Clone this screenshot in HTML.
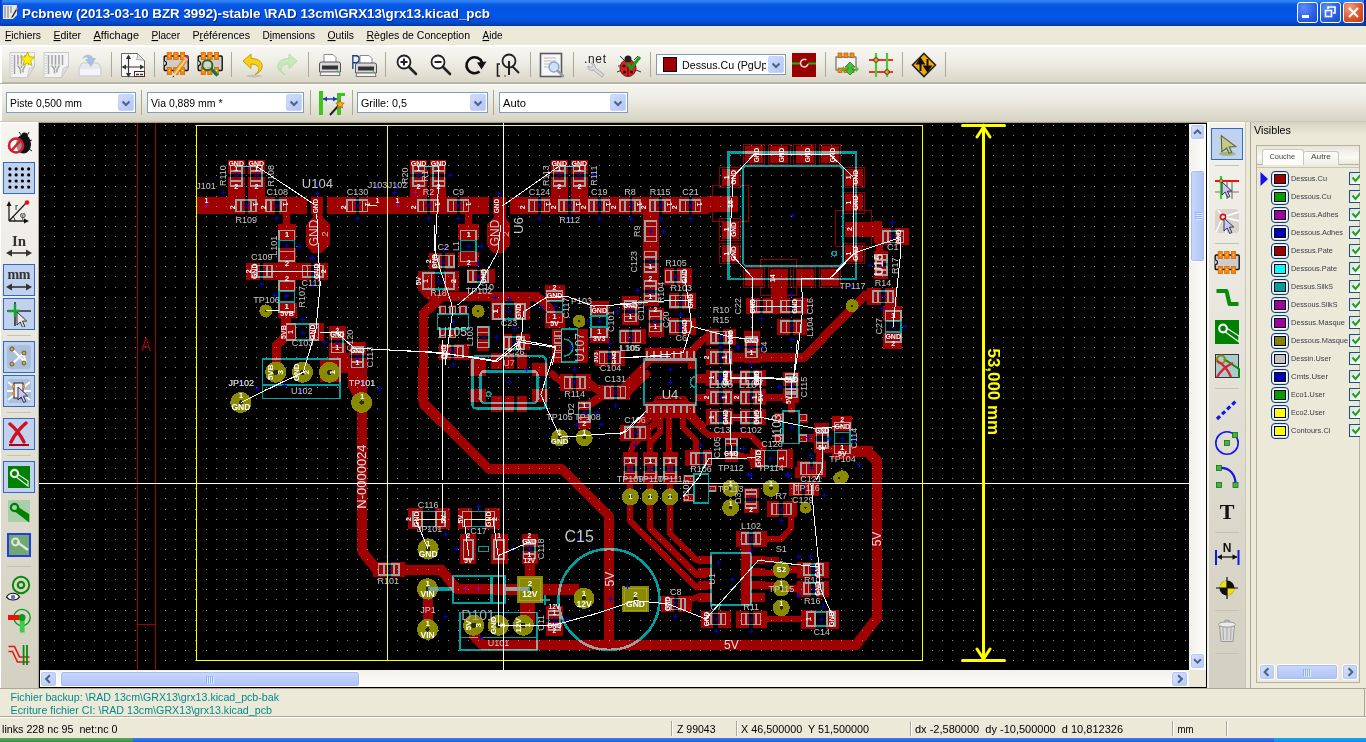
<!DOCTYPE html>
<html><head><meta charset="utf-8"><title>Pcbnew</title>
<style>
html,body{margin:0;padding:0;width:1366px;height:742px;overflow:hidden;background:#ece9d8;font-family:"Liberation Sans",sans-serif;font-size:11px;color:#000}
*{box-sizing:border-box}
svg{overflow:hidden}
text{white-space:pre}
.sel{background:#c1d2ee;border:1px solid #316ac5}
.sbb{background:linear-gradient(135deg,#d6e1fd,#b7c9f7);border:1px solid #fff;border-radius:3px;box-shadow:inset 0 0 0 1px #b4c7f5}
.cb{background:#fff;border:1px solid #7f9db9}
.cbb{position:absolute;right:1px;top:1px;width:16px;bottom:1px;background:linear-gradient(135deg,#cfdcfd,#b3c6f5);border:1px solid #c5d4fb;border-radius:2px}
</style></head><body>
<div style="position:absolute;left:0px;top:0px;width:1366px;height:26px;background:linear-gradient(to bottom,#2f86f5 0,#2a7df0 2px,#0a5be6 4px,#0354e3 9px,#0456e6 17px,#0350d6 21px,#0244be 24px,#02389e 26px)"></div>
<div style="position:absolute;left:1364px;top:0px;width:2px;height:26px;background:#00309c"></div>
<div style="position:absolute;left:0px;top:0px;width:2px;height:26px;background:linear-gradient(to right,#0038b0,#0354e3)"></div>
<svg style="position:absolute;left:3px;top:5px" width="16" height="16" viewBox="0 0 16 16"><path d="M0 0h10l4 0v10l-4 4H0z" fill="#e8e8e8"/><path d="M2 1v12M5 1v12M8 1v7" stroke="#9a9a9a" stroke-width="1.4"/><path d="M13 4l-4 7-1 2 2-1 4-7z" fill="#222"/><circle cx="14" cy="3.5" r="1" fill="#f5a"/></svg>
<div style="position:absolute;left:1297px;top:2px;width:21px;height:21px;border:1px solid #fff;border-radius:3px;background:radial-gradient(circle at 30% 25%,#5b8cf8,#2a5fe6 60%,#1a46c8)"><svg width="19" height="19" viewBox="0 0 19 19" style="display:block"><rect x="4" y="12" width="7" height="3" fill="#fff"/></svg></div>
<div style="position:absolute;left:1320px;top:2px;width:21px;height:21px;border:1px solid #fff;border-radius:3px;background:radial-gradient(circle at 30% 25%,#5b8cf8,#2a5fe6 60%,#1a46c8)"><svg width="19" height="19" viewBox="0 0 19 19" style="display:block"><path d="M7 6V4h7v6h-2" fill="none" stroke="#fff" stroke-width="1.6"/><rect x="4.5" y="7.5" width="6" height="6" fill="none" stroke="#fff" stroke-width="1.6"/></svg></div>
<div style="position:absolute;left:1343px;top:2px;width:21px;height:21px;border:1px solid #fff;border-radius:3px;background:radial-gradient(circle at 30% 25%,#f0a080,#e0552c 55%,#c23a12)"><svg width="19" height="19" viewBox="0 0 19 19" style="display:block"><path d="M5 5l9 9M14 5l-9 9" stroke="#fff" stroke-width="2.2"/></svg></div>
<div style="position:absolute;left:0px;top:26px;width:1366px;height:19px;background:#ece9d8"></div>
<div style="position:absolute;left:0px;top:45px;width:1366px;height:2px;background:#fff"></div>
<div style="position:absolute;left:0px;top:47px;width:1366px;height:36px;background:linear-gradient(to bottom,#f7f6f1,#efeee6 40%,#d9d6c7)"></div>
<div style="position:absolute;left:0px;top:82px;width:1366px;height:2px;background:linear-gradient(to bottom,#c5c2b2,#aca899)"></div>
<div style="position:absolute;left:0px;top:84px;width:1366px;height:1px;background:#fff"></div>
<div style="position:absolute;left:0px;top:85px;width:1366px;height:36px;background:linear-gradient(to bottom,#f5f4ee,#edece4 40%,#d7d4c4)"></div>
<div style="position:absolute;left:0px;top:121px;width:1366px;height:1px;background:#c9c6b6"></div>
<div style="position:absolute;left:0px;top:47px;width:2px;height:36px;background:#fff"></div>
<div style="position:absolute;left:0px;top:85px;width:2px;height:36px;background:#fff"></div>
<div style="position:absolute;left:111px;top:52px;width:1px;height:25px;background:#aca899"></div>
<div style="position:absolute;left:154px;top:52px;width:1px;height:25px;background:#aca899"></div>
<div style="position:absolute;left:231px;top:52px;width:1px;height:25px;background:#aca899"></div>
<div style="position:absolute;left:308px;top:52px;width:1px;height:25px;background:#aca899"></div>
<div style="position:absolute;left:385px;top:52px;width:1px;height:25px;background:#aca899"></div>
<div style="position:absolute;left:530px;top:52px;width:1px;height:25px;background:#aca899"></div>
<div style="position:absolute;left:573px;top:52px;width:1px;height:25px;background:#aca899"></div>
<div style="position:absolute;left:650px;top:52px;width:1px;height:25px;background:#aca899"></div>
<div style="position:absolute;left:825px;top:52px;width:1px;height:25px;background:#aca899"></div>
<div style="position:absolute;left:902px;top:52px;width:1px;height:25px;background:#aca899"></div>
<div style="position:absolute;left:945px;top:52px;width:1px;height:25px;background:#aca899"></div>
<div style="position:absolute;left:141px;top:90px;width:1px;height:25px;background:#aca899"></div>
<div style="position:absolute;left:310px;top:90px;width:1px;height:25px;background:#aca899"></div>
<div style="position:absolute;left:352px;top:90px;width:1px;height:25px;background:#aca899"></div>
<div style="position:absolute;left:493px;top:90px;width:1px;height:25px;background:#aca899"></div>
<div class="cb" style="position:absolute;left:6px;top:92px;width:130px;height:21px"><div class="cbb"><svg width="14" height="17" viewBox="0 0 14 17" style="position:absolute;left:0;top:0"><path d="M3.5 6.5l3.5 3.5 3.5-3.5" fill="none" stroke="#4d6185" stroke-width="2"/></svg></div></div>
<div class="cb" style="position:absolute;left:147px;top:92px;width:157px;height:21px"><div class="cbb"><svg width="14" height="17" viewBox="0 0 14 17" style="position:absolute;left:0;top:0"><path d="M3.5 6.5l3.5 3.5 3.5-3.5" fill="none" stroke="#4d6185" stroke-width="2"/></svg></div></div>
<div class="cb" style="position:absolute;left:357px;top:92px;width:131px;height:21px"><div class="cbb"><svg width="14" height="17" viewBox="0 0 14 17" style="position:absolute;left:0;top:0"><path d="M3.5 6.5l3.5 3.5 3.5-3.5" fill="none" stroke="#4d6185" stroke-width="2"/></svg></div></div>
<div class="cb" style="position:absolute;left:499px;top:92px;width:129px;height:21px"><div class="cbb"><svg width="14" height="17" viewBox="0 0 14 17" style="position:absolute;left:0;top:0"><path d="M3.5 6.5l3.5 3.5 3.5-3.5" fill="none" stroke="#4d6185" stroke-width="2"/></svg></div></div>
<div class="cb" style="position:absolute;left:656px;top:54px;width:130px;height:21px"><div class="cbb"><svg width="14" height="17" viewBox="0 0 14 17" style="position:absolute;left:0;top:0"><path d="M3.5 6.5l3.5 3.5 3.5-3.5" fill="none" stroke="#4d6185" stroke-width="2"/></svg></div></div>
<div style="position:absolute;left:663px;top:57px;width:14px;height:15px;background:#a00000;border:1px solid #000"></div>
<svg style="position:absolute;left:680px;top:56px" width="86" height="17"><text x="2" y="12.500" font-size="11" textLength="89" lengthAdjust="spacingAndGlyphs" font-family='"Liberation Sans",sans-serif'>Dessus.Cu (PgUp)</text></svg>
<svg style="position:absolute;left:9px;top:52px" width="26" height="26" viewBox="0 0 26 26"><path d="M1 .5h24.500v14L18.500 25.500H1z" fill="#f3f3f3" stroke="#c9c9c9"/><path d="M5.500 3v19M9 3v11l2.500 3.500v4M12.500 3v13M16 3v11l-2 3.500v3M19.500 3v10" stroke="#a4a4a4" stroke-width="1.500" fill="none"/><path d="M3 3v20" stroke="#aaa" stroke-dasharray="1 1.600"/><path d="M6 13h13" stroke="#e8e8e8" stroke-width="1"/><path d="M18.500 25.500l1.500-9 5.500-2.500z" fill="#e2e2e2" stroke="#c4c4c4" stroke-width=".8"/><path d="M18.500 0l2 4.800 5.200.4-4 3.400 1.300 5-4.500-2.800-4.500 2.800 1.300-5-4-3.400 5.200-.4z" fill="#ffee00" stroke="#b8a800" stroke-width=".8"/></svg>
<svg style="position:absolute;left:43px;top:52px" width="26" height="26" viewBox="0 0 26 26"><path d="M1 .5h24.500v14L18.500 25.500H1z" fill="#f3f3f3" stroke="#c9c9c9"/><path d="M5.500 3v19M9 3v11l2.500 3.500v4M12.500 3v13M16 3v11l-2 3.500v3M19.500 3v10" stroke="#a4a4a4" stroke-width="1.500" fill="none"/><path d="M3 3v20" stroke="#aaa" stroke-dasharray="1 1.600"/><path d="M6 13h13" stroke="#e8e8e8" stroke-width="1"/><path d="M18.500 25.500l1.500-9 5.500-2.500z" fill="#e2e2e2" stroke="#c4c4c4" stroke-width=".8"/></svg>
<svg style="position:absolute;left:77px;top:52px" width="26" height="26" viewBox="0 0 26 26"><path d="M2 16l3-5h16l3 5v7a1 1 0 0 1-1 1H3a1 1 0 0 1-1-1z" fill="#e6e9ee" stroke="#c6cbd3"/><rect x="3" y="17" width="20" height="6" fill="#f4f5f7"/><path d="M5 8c1-6 9-7 11-2l3 0-5 9-6-8 3 0c-1-2-4-2-6 1z" fill="#9cb9dc" opacity=".85"/></svg>
<svg style="position:absolute;left:120px;top:52px" width="26" height="26" viewBox="0 0 26 26"><path d="M1.500 1.500h16l7 7v16h-23z" fill="#fbfbfb" stroke="#666"/><path d="M17.500 1.500c.5 3-.5 5-1 6 2 .5 5 0 8 1z" fill="#e4e4e4" stroke="#888" stroke-width=".7"/><path d="M3 15h20M8.500 4v20" stroke="#333" stroke-width="1.200"/><path d="M8.500 2.500l-2.600 4.500h5.200zM8.500 25.500l-2.600-4.500h5.200zM1.500 15l4.500-2.600v5.200zM24.500 15l-4.500-2.600v5.200z" fill="#333"/><rect x="14.500" y="19.500" width="10" height="5" fill="#fff" stroke="#522"/><path d="M16 22.500h3M20 22.500h3" stroke="#333" stroke-width="1.600"/></svg>
<svg style="position:absolute;left:163px;top:52px" width="26" height="26" viewBox="0 0 26 26"><rect x="1.2" y="4" width="24" height="14.500" rx="1" fill="#cdcdcd" stroke="#111" stroke-width="1.400"/><path d="M1.200 9a2.200 2.200 0 0 1 0 4.500" fill="#f4f4f0" stroke="#111" stroke-width="1.200"/><rect x="4.1" y="0.3" width="4.400" height="7.400" fill="#ff8200" stroke="#c86000" stroke-width=".6"/><circle cx="6.3" cy="4" r=".8" fill="#f0f0f0"/><rect x="4.1" y="15.3" width="4.400" height="7.400" fill="#ff8200" stroke="#c86000" stroke-width=".6"/><circle cx="6.3" cy="18.5" r=".8" fill="#f0f0f0"/><rect x="10.7" y="0.3" width="4.400" height="7.400" fill="#ff8200" stroke="#c86000" stroke-width=".6"/><circle cx="12.899999999999999" cy="4" r=".8" fill="#f0f0f0"/><rect x="10.7" y="15.3" width="4.400" height="7.400" fill="#ff8200" stroke="#c86000" stroke-width=".6"/><circle cx="12.899999999999999" cy="18.5" r=".8" fill="#f0f0f0"/><rect x="17.3" y="0.3" width="4.400" height="7.400" fill="#ff8200" stroke="#c86000" stroke-width=".6"/><circle cx="19.5" cy="4" r=".8" fill="#f0f0f0"/><rect x="17.3" y="15.3" width="4.400" height="7.400" fill="#ff8200" stroke="#c86000" stroke-width=".6"/><circle cx="19.5" cy="18.5" r=".8" fill="#f0f0f0"/><path d="M20.500 6.500l3.500 2.500-10.500 14-3.500-2.500z" fill="#f7a62c" stroke="#b56a10" stroke-width=".6"/><path d="M21.800 7.400l1.200.900-10.500 14-1.200-.900z" fill="#ffd890"/><path d="M20.500 6.500l3.500 2.500 1.200-1.700-3.500-2.500z" fill="#c8ccd0"/><path d="M21.700 4.800l3.500 2.500.600-1.300c.500-1.200-2-3-3.200-2.300z" fill="#ee3344"/><path d="M10 20.500l3.500 2.500-3.800 2.500z" fill="#f3dcb8"/><path d="M9.700 25.500l.2-1.900 1.400 1z" fill="#222"/></svg>
<svg style="position:absolute;left:197px;top:52px" width="26" height="26" viewBox="0 0 26 26"><rect x="1.2" y="4" width="24" height="14.500" rx="1" fill="#cdcdcd" stroke="#111" stroke-width="1.400"/><path d="M1.200 9a2.200 2.200 0 0 1 0 4.500" fill="#f4f4f0" stroke="#111" stroke-width="1.200"/><rect x="4.1" y="0.3" width="4.400" height="7.400" fill="#ff8200" stroke="#c86000" stroke-width=".6"/><circle cx="6.3" cy="4" r=".8" fill="#f0f0f0"/><rect x="4.1" y="15.3" width="4.400" height="7.400" fill="#ff8200" stroke="#c86000" stroke-width=".6"/><circle cx="6.3" cy="18.5" r=".8" fill="#f0f0f0"/><rect x="10.7" y="0.3" width="4.400" height="7.400" fill="#ff8200" stroke="#c86000" stroke-width=".6"/><circle cx="12.899999999999999" cy="4" r=".8" fill="#f0f0f0"/><rect x="10.7" y="15.3" width="4.400" height="7.400" fill="#ff8200" stroke="#c86000" stroke-width=".6"/><circle cx="12.899999999999999" cy="18.5" r=".8" fill="#f0f0f0"/><rect x="17.3" y="0.3" width="4.400" height="7.400" fill="#ff8200" stroke="#c86000" stroke-width=".6"/><circle cx="19.5" cy="4" r=".8" fill="#f0f0f0"/><rect x="17.3" y="15.3" width="4.400" height="7.400" fill="#ff8200" stroke="#c86000" stroke-width=".6"/><circle cx="19.5" cy="18.5" r=".8" fill="#f0f0f0"/><circle cx="10.400" cy="13.200" r="5" fill="#d4ddd4" fill-opacity=".55" stroke="#2d6a1e" stroke-width="2"/><path d="M14.200 17l6.300 6.600" stroke="#0a7a5a" stroke-width="3.200"/></svg>
<svg style="position:absolute;left:240px;top:52px" width="26" height="26" viewBox="0 0 26 26"><path d="M3 9l8-7v4.500c8 0 12 4 11 9-.8 3.500-4 6-7 7 3-2 4.500-4.500 3.500-7-1-2.500-4-3.500-7.500-3.500v4.500z" fill="#f7d117" stroke="#c99a06" stroke-width="1"/><ellipse cx="14" cy="24" rx="8" ry="1.500" fill="#000" opacity=".12"/></svg>
<svg style="position:absolute;left:274px;top:52px" width="26" height="26" viewBox="0 0 26 26"><path d="M23 9l-8-7v4.500c-8 0-12 4-11 9 .8 3.500 4 6 7 7-3-2-4.500-4.500-3.500-7 1-2.500 4-3.500 7.500-3.500v4.500z" fill="#bfe8b0" stroke="#a8d89a" stroke-width="1" opacity=".8"/></svg>
<svg style="position:absolute;left:317px;top:52px" width="26" height="26" viewBox="0 0 26 26"><path d="M7 2.500h9l3 3V12H7z" fill="#fff" stroke="#888"/><path d="M2.500 12a2 2 0 0 1 2-2h17a2 2 0 0 1 2 2v8h-21z" fill="#d8d8d8" stroke="#555"/><rect x="5" y="13.500" width="16" height="4" fill="#333"/><path d="M4 20h18l1 3.500H3z" fill="#f4f4f4" stroke="#777"/><circle cx="20.500" cy="19" r=".9" fill="#3c3"/></svg>
<svg style="position:absolute;left:351px;top:52px" width="26" height="26" viewBox="0 0 26 26"><g transform="translate(2,1)"><path d="M7 2.500h9l3 3V12H7z" fill="#fff" stroke="#888"/><path d="M2.500 12a2 2 0 0 1 2-2h17a2 2 0 0 1 2 2v8h-21z" fill="#d8d8d8" stroke="#555"/><rect x="5" y="13.500" width="16" height="4" fill="#333"/><path d="M4 20h18l1 3.500H3z" fill="#f4f4f4" stroke="#777"/><circle cx="20.500" cy="19" r=".9" fill="#3c3"/></g><text x="0" y="17" font-size="20" fill="#163f86" textLength="9.500" lengthAdjust="spacingAndGlyphs" font-family='"Liberation Sans",sans-serif'>P</text></svg>
<svg style="position:absolute;left:394px;top:52px" width="26" height="26" viewBox="0 0 26 26"><circle cx="10" cy="10" r="6.500" fill="#fff" stroke="#222" stroke-width="1.800"/><path d="M15 15l7 7" stroke="#222" stroke-width="2.600" stroke-linecap="round"/><path d="M6.500 10h7M10 6.500v7" stroke="#222" stroke-width="2"/></svg>
<svg style="position:absolute;left:428px;top:52px" width="26" height="26" viewBox="0 0 26 26"><circle cx="10" cy="10" r="6.500" fill="#fff" stroke="#222" stroke-width="1.800"/><path d="M15 15l7 7" stroke="#222" stroke-width="2.600" stroke-linecap="round"/><path d="M6.500 10h7" stroke="#222" stroke-width="2"/></svg>
<svg style="position:absolute;left:462px;top:52px" width="26" height="26" viewBox="0 0 26 26"><path d="M17.500 19.500a8 8 0 1 1 2.500-9" fill="none" stroke="#111" stroke-width="2.600"/><path d="M15 10.500l9.500-1-5 8z" fill="#111"/></svg>
<svg style="position:absolute;left:496px;top:52px" width="26" height="26" viewBox="0 0 26 26"><circle cx="13" cy="9" r="6.500" fill="none" stroke="#222" stroke-width="1.800"/><path d="M13 9v14M16 14l7 7" stroke="#222" stroke-width="2"/><path d="M4 12H1.500v12H4M8.500 24h1" stroke="#222" stroke-width="1.600" fill="none"/></svg>
<svg style="position:absolute;left:539px;top:52px" width="26" height="26" viewBox="0 0 26 26"><rect x="1.500" y="1.500" width="21" height="23" fill="#f6f6f6" stroke="#5a5a5a" stroke-width="1.600"/><path d="M5 6h12M5 9h12M5 12h9M5 15h6" stroke="#bbb"/><circle cx="15" cy="15" r="5" fill="#cfe0f5" stroke="#8ea8cc" stroke-width="1.500"/><path d="M19 19l5 5" stroke="#99a" stroke-width="2.500" stroke-linecap="round"/></svg>
<svg style="position:absolute;left:582px;top:52px" width="26" height="26" viewBox="0 0 26 26"><text x="2" y="11" font-size="12" fill="#222" font-family='"Liberation Sans",sans-serif' textLength="22">.net</text><path d="M6 14a3.500 3.500 0 0 0 5 4l9 7 2-2.500-9-7a3.500 3.500 0 0 0-4-4.500l2 2.500-2 2z" fill="#d8dade" stroke="#9a9ea6" stroke-width=".8"/></svg>
<svg style="position:absolute;left:616px;top:52px" width="26" height="26" viewBox="0 0 26 26"><path d="M4 4l4 4M22 4l-4 4M2 14h4M1 20l5-2M25 20l-5-2" stroke="#333" stroke-width="1"/><ellipse cx="12" cy="16" rx="8" ry="8.500" fill="#e21d1d" stroke="#7a0c0c"/><path d="M12 8v16" stroke="#400"/><circle cx="12" cy="7" r="3.500" fill="#222"/><circle cx="8" cy="14" r="1.600" fill="#111"/><circle cx="16" cy="14" r="1.600" fill="#111"/><circle cx="8.500" cy="20" r="1.500" fill="#111"/><circle cx="15.500" cy="20" r="1.500" fill="#111"/><path d="M11 11l4 5 9-11" fill="none" stroke="#17a01b" stroke-width="3"/></svg>
<svg style="position:absolute;left:792px;top:53px" width="24" height="24" viewBox="0 0 24 24"><rect width="24" height="24" fill="#9b0000"/><path d="M0 10.500h8M16 10.500h8" stroke="#19b219" stroke-width="2.200"/><path d="M14.500 7a3.800 3.800 0 1 0 1.500 4" fill="none" stroke="#ddd" stroke-width="1.500"/></svg>
<svg style="position:absolute;left:834px;top:52px" width="26" height="26" viewBox="0 0 26 26"><rect x="2" y="5" width="20" height="13" fill="#f4f4f4" stroke="#555"/><rect x="4" y="1" width="4" height="4.500" fill="#f58a1f" stroke="#b35a00" stroke-width=".7"/><rect x="4" y="16" width="4" height="4.500" fill="#f58a1f" stroke="#b35a00" stroke-width=".7"/><rect x="10" y="1" width="4" height="4.500" fill="#f58a1f" stroke="#b35a00" stroke-width=".7"/><rect x="10" y="16" width="4" height="4.500" fill="#f58a1f" stroke="#b35a00" stroke-width=".7"/><rect x="16" y="1" width="4" height="4.500" fill="#f58a1f" stroke="#b35a00" stroke-width=".7"/><rect x="16" y="16" width="4" height="4.500" fill="#f58a1f" stroke="#b35a00" stroke-width=".7"/><path d="M16 8l5 5h-3v3h3l-5 5-5-5h3v-3h-3z" fill="#3cc43c" stroke="#1d8a1d" stroke-width=".8" transform="translate(0,2)"/><path d="M7 17l3-3v6z M25 17l-3-3v6z" fill="#3cc43c"/></svg>
<svg style="position:absolute;left:868px;top:52px" width="26" height="26" viewBox="0 0 26 26"><path d="M1 8h24M1 20h24" stroke="#ee3030" stroke-width="2.200"/><path d="M8 1v24M19 1v24" stroke="#44cc33" stroke-width="2.200"/><circle cx="8" cy="8" r="2.300" fill="#f5a020" stroke="#222" stroke-width=".8"/><circle cx="19" cy="20" r="2.300" fill="#f5a020" stroke="#222" stroke-width=".8"/></svg>
<svg style="position:absolute;left:911px;top:52px" width="26" height="26" viewBox="0 0 26 26"><path d="M13 1.500L24.500 13 13 24.500 1.500 13z" fill="#f5a800" stroke="#222" stroke-width="1.600"/><path d="M9.500 19V9M9.500 7l-3 4.500h6zM16.500 7v10M16.500 19l-3-4.500h6z" stroke="#111" stroke-width="2" fill="#111"/></svg>
<svg style="position:absolute;left:319px;top:90px" width="26" height="26" viewBox="0 0 26 26"><rect x="0" y="1" width="4" height="24" fill="#3fc41f"/><rect x="18" y="3" width="4" height="22" fill="#3fc41f"/><rect x="18" y="3" width="8" height="3" fill="#3fc41f"/><path d="M4 9h14" stroke="#1a32b8" stroke-width="1.400"/><path d="M4 9l4-2.500v5zM18 9l-4-2.500v5z" fill="#1a32b8"/><path d="M11 25l9-10" stroke="#222" stroke-width="2"/><path d="M21 10l1.200 2.800 3 .3-2.300 2 .8 3-2.700-1.600-2.700 1.600.8-3-2.300-2 3-.3z" fill="#f5b020" stroke="#d04010" stroke-width=".7"/></svg>
<div style="position:absolute;left:0px;top:122px;width:38px;height:566px;background:linear-gradient(to bottom,#f6f5f0,#eceae2 30%,#dddacd 70%,#d4d1c2)"></div>
<div style="position:absolute;left:0px;top:122px;width:38px;height:1px;background:#fff"></div>
<div style="position:absolute;left:0px;top:122px;width:1px;height:566px;background:#fff"></div>
<div style="position:absolute;left:37px;top:123px;width:1px;height:565px;background:linear-gradient(to bottom,#f6f5f0,#cfccbc)"></div>
<div style="position:absolute;left:38px;top:122px;width:1px;height:566px;background:#aca899"></div>
<div style="position:absolute;left:39px;top:122px;width:1168px;height:1px;background:#a5a292"></div>
<div style="position:absolute;left:39px;top:123px;width:1168px;height:565px;background:#000"></div>
<div style="position:absolute;left:1189px;top:124px;width:17px;height:546px;background:linear-gradient(to right,#f3f1ec,#fdfdfb)"></div>
<div style="position:absolute;left:40px;top:670px;width:1149px;height:17px;background:linear-gradient(to bottom,#f3f1ec,#fdfdfb)"></div>
<div style="position:absolute;left:1189px;top:670px;width:17px;height:17px;background:#ece9d8"></div>
<div class="sbb" style="position:absolute;left:1190px;top:124px;width:15px;height:16px"><svg width="13" height="14" viewBox="0 0 15 15" style="display:block"><path d="M3.500 9.500l4-4 4 4" fill="none" stroke="#4d6185" stroke-width="2.200"/></svg></div>
<div class="sbb" style="position:absolute;left:1190px;top:653px;width:15px;height:16px"><svg width="13" height="14" viewBox="0 0 15 15" style="display:block"><path d="M3.500 5.500l4 4 4-4" fill="none" stroke="#4d6185" stroke-width="2.200"/></svg></div>
<div style="position:absolute;left:1190px;top:170px;width:15px;height:92px;background:linear-gradient(to right,#c9d8fc,#bccdf9 50%,#b0c3f5);border:1px solid #fff;border-radius:3px;box-shadow:inset 0 0 0 1px #a9bdf3"><svg width="13" height="90" style="display:block"><rect x="4" y="41.0" width="7" height="1" fill="#8cb0f8"/><rect x="5" y="42.0" width="7" height="1" fill="#fff" opacity=".6"/><rect x="4" y="43.0" width="7" height="1" fill="#8cb0f8"/><rect x="5" y="44.0" width="7" height="1" fill="#fff" opacity=".6"/><rect x="4" y="45.0" width="7" height="1" fill="#8cb0f8"/><rect x="5" y="46.0" width="7" height="1" fill="#fff" opacity=".6"/><rect x="4" y="47.0" width="7" height="1" fill="#8cb0f8"/><rect x="5" y="48.0" width="7" height="1" fill="#fff" opacity=".6"/></svg></div>
<div class="sbb" style="position:absolute;left:40px;top:671px;width:17px;height:16px"><svg width="15" height="14" viewBox="0 0 15 15" style="display:block"><path d="M9 3.500l-4 4 4 4" fill="none" stroke="#4d6185" stroke-width="2.200"/></svg></div>
<div class="sbb" style="position:absolute;left:1171px;top:671px;width:17px;height:16px"><svg width="15" height="14" viewBox="0 0 15 15" style="display:block"><path d="M6 3.500l4 4-4 4" fill="none" stroke="#4d6185" stroke-width="2.200"/></svg></div>
<div style="position:absolute;left:60px;top:671px;width:300px;height:16px;background:linear-gradient(to bottom,#c9d8fc,#bccdf9 50%,#b0c3f5);border:1px solid #fff;border-radius:3px;box-shadow:inset 0 0 0 1px #a9bdf3"><svg width="298" height="14" style="display:block"><rect x="145.0" y="4" width="1" height="7" fill="#8cb0f8"/><rect x="146.0" y="5" width="1" height="7" fill="#fff" opacity=".6"/><rect x="147.0" y="4" width="1" height="7" fill="#8cb0f8"/><rect x="148.0" y="5" width="1" height="7" fill="#fff" opacity=".6"/><rect x="149.0" y="4" width="1" height="7" fill="#8cb0f8"/><rect x="150.0" y="5" width="1" height="7" fill="#fff" opacity=".6"/><rect x="151.0" y="4" width="1" height="7" fill="#8cb0f8"/><rect x="152.0" y="5" width="1" height="7" fill="#fff" opacity=".6"/></svg></div>
<div style="position:absolute;left:1207px;top:122px;width:39px;height:566px;background:linear-gradient(to bottom,#f3f2ec,#e9e7de 30%,#dbd8cb 70%,#d3d0c1)"></div>
<div style="position:absolute;left:1207px;top:122px;width:39px;height:1px;background:#fff"></div>
<div style="position:absolute;left:1207px;top:122px;width:2px;height:566px;background:linear-gradient(to bottom,#fff,#f1efe6)"></div>
<div style="position:absolute;left:1245px;top:122px;width:6px;height:566px;background:#ece9d8;border-left:1px solid #cbc8b8"></div>
<div style="position:absolute;left:1250px;top:122px;width:116px;height:567px;background:#ece9d8;border-left:1px solid #aca899;border-bottom:1px solid #aca899"></div>
<div style="position:absolute;left:1251px;top:122px;width:115px;height:22px;background:linear-gradient(to bottom,#d8d4c4,#ece9d8 60%)"></div>
<div style="position:absolute;left:1256px;top:145px;width:104px;height:538px;border:1px solid #b5b2a0;background:#ece9d8"></div>
<div style="position:absolute;left:1257px;top:146px;width:102px;height:19px;background:linear-gradient(to bottom,#e6e3d6,#f2f0e8 30%,#fbfaf6 60%,#e9e6d9)"></div>
<div style="position:absolute;left:1257px;top:164px;width:102px;height:1px;background:#b5b2a0"></div>
<div style="position:absolute;left:1257px;top:167px;width:102px;height:1px;background:#c8c5b4"></div>
<div style="position:absolute;left:1262px;top:149px;width:42px;height:16px;background:linear-gradient(to bottom,#fff,#fbfbf8);border:1px solid #c9c7ba;border-bottom:none;border-radius:3px 3px 0 0"></div>
<div style="position:absolute;left:1303px;top:151px;width:36px;height:14px;background:linear-gradient(to bottom,#fdfdfb,#f0efe6);border:1px solid #c9c7ba;border-bottom:none;border-radius:3px 3px 0 0"></div>
<div style="position:absolute;left:1271px;top:171px;width:18px;height:16px;border:1px solid #0b3a78;border-radius:4px;background:#fff;box-shadow:inset 0 0 0 1px #d6dff5"><div style="position:absolute;left:2px;top:2px;width:12px;height:10px;border:1px solid #000;background:#a00000"></div></div>
<div style="position:absolute;left:1349px;top:172px;width:11px;height:13px;border:1px solid #1c5180;border-right:none;background:linear-gradient(135deg,#dcdcd7,#fff)"><svg width="10" height="11" viewBox="0 0 10 11" style="display:block"><path d="M2.500 4.500l3 3.500 5-6" fill="none" stroke="#21a121" stroke-width="2"/></svg></div>
<div style="position:absolute;left:1271px;top:189px;width:18px;height:16px;border:1px solid #0b3a78;border-radius:4px;background:#fff;box-shadow:inset 0 0 0 1px #d6dff5"><div style="position:absolute;left:2px;top:2px;width:12px;height:10px;border:1px solid #000;background:#00a000"></div></div>
<div style="position:absolute;left:1349px;top:190px;width:11px;height:13px;border:1px solid #1c5180;border-right:none;background:linear-gradient(135deg,#dcdcd7,#fff)"><svg width="10" height="11" viewBox="0 0 10 11" style="display:block"><path d="M2.500 4.500l3 3.500 5-6" fill="none" stroke="#21a121" stroke-width="2"/></svg></div>
<div style="position:absolute;left:1271px;top:207px;width:18px;height:16px;border:1px solid #0b3a78;border-radius:4px;background:#fff;box-shadow:inset 0 0 0 1px #d6dff5"><div style="position:absolute;left:2px;top:2px;width:12px;height:10px;border:1px solid #000;background:#a000a0"></div></div>
<div style="position:absolute;left:1349px;top:208px;width:11px;height:13px;border:1px solid #1c5180;border-right:none;background:linear-gradient(135deg,#dcdcd7,#fff)"><svg width="10" height="11" viewBox="0 0 10 11" style="display:block"><path d="M2.500 4.500l3 3.500 5-6" fill="none" stroke="#21a121" stroke-width="2"/></svg></div>
<div style="position:absolute;left:1271px;top:225px;width:18px;height:16px;border:1px solid #0b3a78;border-radius:4px;background:#fff;box-shadow:inset 0 0 0 1px #d6dff5"><div style="position:absolute;left:2px;top:2px;width:12px;height:10px;border:1px solid #000;background:#0000c0"></div></div>
<div style="position:absolute;left:1349px;top:226px;width:11px;height:13px;border:1px solid #1c5180;border-right:none;background:linear-gradient(135deg,#dcdcd7,#fff)"><svg width="10" height="11" viewBox="0 0 10 11" style="display:block"><path d="M2.500 4.500l3 3.500 5-6" fill="none" stroke="#21a121" stroke-width="2"/></svg></div>
<div style="position:absolute;left:1271px;top:243px;width:18px;height:16px;border:1px solid #0b3a78;border-radius:4px;background:#fff;box-shadow:inset 0 0 0 1px #d6dff5"><div style="position:absolute;left:2px;top:2px;width:12px;height:10px;border:1px solid #000;background:#a00000"></div></div>
<div style="position:absolute;left:1349px;top:244px;width:11px;height:13px;border:1px solid #1c5180;border-right:none;background:linear-gradient(135deg,#dcdcd7,#fff)"><svg width="10" height="11" viewBox="0 0 10 11" style="display:block"><path d="M2.500 4.500l3 3.500 5-6" fill="none" stroke="#21a121" stroke-width="2"/></svg></div>
<div style="position:absolute;left:1271px;top:261px;width:18px;height:16px;border:1px solid #0b3a78;border-radius:4px;background:#fff;box-shadow:inset 0 0 0 1px #d6dff5"><div style="position:absolute;left:2px;top:2px;width:12px;height:10px;border:1px solid #000;background:#00ffff"></div></div>
<div style="position:absolute;left:1349px;top:262px;width:11px;height:13px;border:1px solid #1c5180;border-right:none;background:linear-gradient(135deg,#dcdcd7,#fff)"><svg width="10" height="11" viewBox="0 0 10 11" style="display:block"><path d="M2.500 4.500l3 3.500 5-6" fill="none" stroke="#21a121" stroke-width="2"/></svg></div>
<div style="position:absolute;left:1271px;top:279px;width:18px;height:16px;border:1px solid #0b3a78;border-radius:4px;background:#fff;box-shadow:inset 0 0 0 1px #d6dff5"><div style="position:absolute;left:2px;top:2px;width:12px;height:10px;border:1px solid #000;background:#00a0a0"></div></div>
<div style="position:absolute;left:1349px;top:280px;width:11px;height:13px;border:1px solid #1c5180;border-right:none;background:linear-gradient(135deg,#dcdcd7,#fff)"><svg width="10" height="11" viewBox="0 0 10 11" style="display:block"><path d="M2.500 4.500l3 3.500 5-6" fill="none" stroke="#21a121" stroke-width="2"/></svg></div>
<div style="position:absolute;left:1271px;top:297px;width:18px;height:16px;border:1px solid #0b3a78;border-radius:4px;background:#fff;box-shadow:inset 0 0 0 1px #d6dff5"><div style="position:absolute;left:2px;top:2px;width:12px;height:10px;border:1px solid #000;background:#a000a0"></div></div>
<div style="position:absolute;left:1349px;top:298px;width:11px;height:13px;border:1px solid #1c5180;border-right:none;background:linear-gradient(135deg,#dcdcd7,#fff)"><svg width="10" height="11" viewBox="0 0 10 11" style="display:block"><path d="M2.500 4.500l3 3.500 5-6" fill="none" stroke="#21a121" stroke-width="2"/></svg></div>
<div style="position:absolute;left:1271px;top:315px;width:18px;height:16px;border:1px solid #0b3a78;border-radius:4px;background:#fff;box-shadow:inset 0 0 0 1px #d6dff5"><div style="position:absolute;left:2px;top:2px;width:12px;height:10px;border:1px solid #000;background:#a000a0"></div></div>
<div style="position:absolute;left:1349px;top:316px;width:11px;height:13px;border:1px solid #1c5180;border-right:none;background:linear-gradient(135deg,#dcdcd7,#fff)"><svg width="10" height="11" viewBox="0 0 10 11" style="display:block"><path d="M2.500 4.500l3 3.500 5-6" fill="none" stroke="#21a121" stroke-width="2"/></svg></div>
<div style="position:absolute;left:1271px;top:333px;width:18px;height:16px;border:1px solid #0b3a78;border-radius:4px;background:#fff;box-shadow:inset 0 0 0 1px #d6dff5"><div style="position:absolute;left:2px;top:2px;width:12px;height:10px;border:1px solid #000;background:#848400"></div></div>
<div style="position:absolute;left:1349px;top:334px;width:11px;height:13px;border:1px solid #1c5180;border-right:none;background:linear-gradient(135deg,#dcdcd7,#fff)"><svg width="10" height="11" viewBox="0 0 10 11" style="display:block"><path d="M2.500 4.500l3 3.500 5-6" fill="none" stroke="#21a121" stroke-width="2"/></svg></div>
<div style="position:absolute;left:1271px;top:351px;width:18px;height:16px;border:1px solid #0b3a78;border-radius:4px;background:#fff;box-shadow:inset 0 0 0 1px #d6dff5"><div style="position:absolute;left:2px;top:2px;width:12px;height:10px;border:1px solid #000;background:#c2c2c2"></div></div>
<div style="position:absolute;left:1349px;top:352px;width:11px;height:13px;border:1px solid #1c5180;border-right:none;background:linear-gradient(135deg,#dcdcd7,#fff)"><svg width="10" height="11" viewBox="0 0 10 11" style="display:block"><path d="M2.500 4.500l3 3.500 5-6" fill="none" stroke="#21a121" stroke-width="2"/></svg></div>
<div style="position:absolute;left:1271px;top:369px;width:18px;height:16px;border:1px solid #0b3a78;border-radius:4px;background:#fff;box-shadow:inset 0 0 0 1px #d6dff5"><div style="position:absolute;left:2px;top:2px;width:12px;height:10px;border:1px solid #000;background:#0000c0"></div></div>
<div style="position:absolute;left:1349px;top:370px;width:11px;height:13px;border:1px solid #1c5180;border-right:none;background:linear-gradient(135deg,#dcdcd7,#fff)"><svg width="10" height="11" viewBox="0 0 10 11" style="display:block"><path d="M2.500 4.500l3 3.500 5-6" fill="none" stroke="#21a121" stroke-width="2"/></svg></div>
<div style="position:absolute;left:1271px;top:387px;width:18px;height:16px;border:1px solid #0b3a78;border-radius:4px;background:#fff;box-shadow:inset 0 0 0 1px #d6dff5"><div style="position:absolute;left:2px;top:2px;width:12px;height:10px;border:1px solid #000;background:#00a000"></div></div>
<div style="position:absolute;left:1349px;top:388px;width:11px;height:13px;border:1px solid #1c5180;border-right:none;background:linear-gradient(135deg,#dcdcd7,#fff)"><svg width="10" height="11" viewBox="0 0 10 11" style="display:block"><path d="M2.500 4.500l3 3.500 5-6" fill="none" stroke="#21a121" stroke-width="2"/></svg></div>
<div style="position:absolute;left:1271px;top:405px;width:18px;height:16px;border:1px solid #0b3a78;border-radius:4px;background:#fff;box-shadow:inset 0 0 0 1px #d6dff5"><div style="position:absolute;left:2px;top:2px;width:12px;height:10px;border:1px solid #000;background:#ffff00"></div></div>
<div style="position:absolute;left:1349px;top:406px;width:11px;height:13px;border:1px solid #1c5180;border-right:none;background:linear-gradient(135deg,#dcdcd7,#fff)"><svg width="10" height="11" viewBox="0 0 10 11" style="display:block"><path d="M2.500 4.500l3 3.500 5-6" fill="none" stroke="#21a121" stroke-width="2"/></svg></div>
<div style="position:absolute;left:1271px;top:423px;width:18px;height:16px;border:1px solid #0b3a78;border-radius:4px;background:#fff;box-shadow:inset 0 0 0 1px #d6dff5"><div style="position:absolute;left:2px;top:2px;width:12px;height:10px;border:1px solid #000;background:#ffff00"></div></div>
<div style="position:absolute;left:1349px;top:424px;width:11px;height:13px;border:1px solid #1c5180;border-right:none;background:linear-gradient(135deg,#dcdcd7,#fff)"><svg width="10" height="11" viewBox="0 0 10 11" style="display:block"><path d="M2.500 4.500l3 3.500 5-6" fill="none" stroke="#21a121" stroke-width="2"/></svg></div>
<svg style="position:absolute;left:1260px;top:172px" width="9" height="15"><path d="M.5 0l7.500 7L.5 14z" fill="#1010f0"/></svg>
<div class="sbb" style="position:absolute;left:1259px;top:664px;width:16px;height:16px"><svg width="14" height="14" viewBox="0 0 15 15" style="display:block"><path d="M9 3.500l-4 4 4 4" fill="none" stroke="#4d6185" stroke-width="2.200"/></svg></div>
<div class="sbb" style="position:absolute;left:1342px;top:664px;width:16px;height:16px"><svg width="14" height="14" viewBox="0 0 15 15" style="display:block"><path d="M6 3.500l4 4-4 4" fill="none" stroke="#4d6185" stroke-width="2.200"/></svg></div>
<div style="position:absolute;left:1276px;top:664px;width:62px;height:16px;background:linear-gradient(to bottom,#c9d8fc,#bccdf9 50%,#b0c3f5);border:1px solid #fff;border-radius:3px;box-shadow:inset 0 0 0 1px #a9bdf3"><svg width="60" height="14" style="display:block"><rect x="26.0" y="4" width="1" height="7" fill="#8cb0f8"/><rect x="27.0" y="5" width="1" height="7" fill="#fff" opacity=".6"/><rect x="28.0" y="4" width="1" height="7" fill="#8cb0f8"/><rect x="29.0" y="5" width="1" height="7" fill="#fff" opacity=".6"/><rect x="30.0" y="4" width="1" height="7" fill="#8cb0f8"/><rect x="31.0" y="5" width="1" height="7" fill="#fff" opacity=".6"/><rect x="32.0" y="4" width="1" height="7" fill="#8cb0f8"/><rect x="33.0" y="5" width="1" height="7" fill="#fff" opacity=".6"/></svg></div>
<div style="position:absolute;left:0px;top:688px;width:1366px;height:1px;background:#aca899"></div>
<div style="position:absolute;left:0px;top:689px;width:1365px;height:28px;background:#ece9d8;border-right:1px solid #aca899;border-bottom:1px solid #aca899"></div>
<div style="position:absolute;left:0px;top:716px;width:1366px;height:1px;background:#aca899"></div>
<div style="position:absolute;left:0px;top:717px;width:1366px;height:1px;background:#fff"></div>
<div style="position:absolute;left:0px;top:718px;width:1366px;height:20px;background:#ece9d8"></div>
<div style="position:absolute;left:671px;top:721px;width:1px;height:15px;background:#aca899"></div>
<div style="position:absolute;left:672px;top:721px;width:1px;height:15px;background:#fff"></div>
<div style="position:absolute;left:736px;top:721px;width:1px;height:15px;background:#aca899"></div>
<div style="position:absolute;left:737px;top:721px;width:1px;height:15px;background:#fff"></div>
<div style="position:absolute;left:910px;top:721px;width:1px;height:15px;background:#aca899"></div>
<div style="position:absolute;left:911px;top:721px;width:1px;height:15px;background:#fff"></div>
<div style="position:absolute;left:1172px;top:721px;width:1px;height:15px;background:#aca899"></div>
<div style="position:absolute;left:1173px;top:721px;width:1px;height:15px;background:#fff"></div>
<div style="position:absolute;left:1226px;top:721px;width:1px;height:15px;background:#aca899"></div>
<div style="position:absolute;left:1227px;top:721px;width:1px;height:15px;background:#fff"></div>
<div style="position:absolute;left:0px;top:738px;width:1366px;height:4px;background:linear-gradient(to bottom,#3a80f0,#245edb)"></div>
<div style="position:absolute;left:0px;top:738px;width:133px;height:4px;background:linear-gradient(to bottom,#5aa85a,#3c8f3c);border-radius:0 2px 0 0"></div>
<div style="position:absolute;left:1274px;top:738px;width:92px;height:4px;background:linear-gradient(to bottom,#1aa0f0,#0f8fe8)"></div>
<div class="sel" style="position:absolute;left:3px;top:162px;width:32px;height:32px;"></div>
<div class="sel" style="position:absolute;left:3px;top:264px;width:32px;height:32px;"></div>
<div class="sel" style="position:absolute;left:3px;top:298px;width:32px;height:32px;"></div>
<div class="sel" style="position:absolute;left:3px;top:341px;width:32px;height:32px;"></div>
<div class="sel" style="position:absolute;left:3px;top:375px;width:32px;height:32px;"></div>
<div class="sel" style="position:absolute;left:3px;top:418px;width:32px;height:32px;"></div>
<div class="sel" style="position:absolute;left:3px;top:461px;width:32px;height:32px;"></div>
<div style="position:absolute;left:7px;top:335px;width:24px;height:1px;background:#c5c2b2"></div>
<div style="position:absolute;left:7px;top:412px;width:24px;height:1px;background:#c5c2b2"></div>
<div style="position:absolute;left:7px;top:455px;width:24px;height:1px;background:#c5c2b2"></div>
<div style="position:absolute;left:7px;top:566px;width:24px;height:1px;background:#c5c2b2"></div>
<svg style="position:absolute;left:6px;top:131px" width="26" height="26" viewBox="0 0 26 26"><path d="M13 1l3 4M23 1l-2 4M26 9l-3 1M26 20l-3-2M25 14h-2" stroke="#222"/><ellipse cx="17.500" cy="13" rx="7.500" ry="9.500" fill="#111"/><circle cx="18.500" cy="4.500" r="3" fill="#111"/><circle cx="10" cy="14.500" r="7" fill="#fff" fill-opacity=".55" stroke="#d02030" stroke-width="2.600"/><path d="M5.500 19.500l9-10" stroke="#d02030" stroke-width="2.600"/></svg>
<svg style="position:absolute;left:6px;top:165px" width="26" height="26" viewBox="0 0 26 26"><circle cx="3.9" cy="3.9" r="1.600" fill="#000"/><circle cx="3.9" cy="9.95" r="1.600" fill="#000"/><circle cx="3.9" cy="16.0" r="1.600" fill="#000"/><circle cx="3.9" cy="22.05" r="1.600" fill="#000"/><circle cx="10.15" cy="3.9" r="1.600" fill="#000"/><circle cx="10.15" cy="9.95" r="1.600" fill="#000"/><circle cx="10.15" cy="16.0" r="1.600" fill="#000"/><circle cx="10.15" cy="22.05" r="1.600" fill="#000"/><circle cx="16.4" cy="3.9" r="1.600" fill="#000"/><circle cx="16.4" cy="9.95" r="1.600" fill="#000"/><circle cx="16.4" cy="16.0" r="1.600" fill="#000"/><circle cx="16.4" cy="22.05" r="1.600" fill="#000"/><circle cx="22.65" cy="3.9" r="1.600" fill="#000"/><circle cx="22.65" cy="9.95" r="1.600" fill="#000"/><circle cx="22.65" cy="16.0" r="1.600" fill="#000"/><circle cx="22.65" cy="22.05" r="1.600" fill="#000"/></svg>
<svg style="position:absolute;left:6px;top:199px" width="26" height="26" viewBox="0 0 26 26"><path d="M3 22V5M3 22h17M3 22L20 4" stroke="#222" stroke-width="1.300" fill="none"/><path d="M3 2l-2.500 5h5zM23 22l-5-2.500v5z" fill="#111"/><circle cx="21" cy="3.500" r="2.200" fill="#f00"/><path d="M9 22a6 6 0 0 0-2-4.500" fill="none" stroke="#222"/><text x="9" y="11" font-size="9" fill="#111">r</text><text x="14" y="19" font-size="9" fill="#111">φ</text></svg>
<svg style="position:absolute;left:6px;top:233px" width="26" height="26" viewBox="0 0 26 26"><text x="13" y="13" font-size="15" font-family='"Liberation Serif",serif' font-weight="bold" fill="#333" text-anchor="middle">In</text><path d="M2 20h22" stroke="#333" stroke-width="1.600"/><path d="M0 20l6-3.500v7zM26 20l-6-3.500v7z" fill="#333"/></svg>
<svg style="position:absolute;left:6px;top:267px" width="26" height="26" viewBox="0 0 26 26"><text x="13" y="12" font-size="14" font-family='"Liberation Serif",serif' font-weight="bold" fill="#333" text-anchor="middle" textLength="23">mm</text><path d="M2 20h22" stroke="#333" stroke-width="1.600"/><path d="M0 20l6-3.500v7zM26 20l-6-3.500v7z" fill="#333"/></svg>
<svg style="position:absolute;left:6px;top:301px" width="26" height="26" viewBox="0 0 26 26"><path d="M1 10h24M9 1v24" stroke="#333" stroke-width="1.600"/><path d="M2 10h12M9 3v13" stroke="#18a030" stroke-width="2.400"/><g transform="translate(11,11)"><path d="M0 0v13l3.200-3 2.500 5.500 2.200-1-2.500-5.300 4.300-.2z" fill="#e8e8e8" stroke="#222" stroke-width=".9"/></g></svg>
<svg style="position:absolute;left:6px;top:344px" width="26" height="26" viewBox="0 0 26 26"><rect x="1" y="1" width="24" height="24" rx="4" fill="#a9bfdc"/><path d="M6 5l14 14M6 20L18 9M20 19L17 9" stroke="#fff" stroke-width="2"/><circle cx="6" cy="5" r="2" fill="#f5a020" stroke="#333" stroke-width=".7"/><circle cx="18" cy="9" r="2" fill="#f5a020" stroke="#333" stroke-width=".7"/><circle cx="6" cy="20" r="2" fill="#f5a020" stroke="#333" stroke-width=".7"/><circle cx="18" cy="19" r="2" fill="#f5a020" stroke="#333" stroke-width=".7"/></svg>
<svg style="position:absolute;left:6px;top:378px" width="26" height="26" viewBox="0 0 26 26"><rect x="1" y="1" width="24" height="24" rx="4" fill="#a9bfdc"/><path d="M2 4l22 18M2 22L24 4M1 13h24" stroke="#fff" stroke-width="1.800"/><rect x="8" y="5" width="9" height="15" fill="#eee" stroke="#222"/><rect x="6" y="7" width="2.500" height="3" fill="#f58a1f"/><rect x="6" y="14" width="2.500" height="3" fill="#f58a1f"/><rect x="16.500" y="7" width="2.500" height="3" fill="#f58a1f"/><g transform="translate(12,9)"><path d="M0 0v13l3.200-3 2.500 5.500 2.200-1-2.500-5.300 4.300-.2z" fill="#c8c8f8" stroke="#223" stroke-width=".9"/></g></svg>
<svg style="position:absolute;left:6px;top:421px" width="26" height="26" viewBox="0 0 26 26"><path d="M4 3c5 4 11 12 14 18M20 2C13 8 8 15 5 21" stroke="#d01020" stroke-width="3.400" fill="none" stroke-linecap="round"/><path d="M3 24h20" stroke="#b00010" stroke-width="2"/></svg>
<svg style="position:absolute;left:6px;top:464px" width="26" height="26" viewBox="0 0 26 26"><rect x="2" y="2" width="22" height="22" fill="#008000"/><path d="M10 9l12 8v5l-13-10" fill="#008000" stroke="#e8f0e8" stroke-width="1.200"/><circle cx="8.500" cy="9.500" r="3.600" fill="#008000" stroke="#e8f0e8" stroke-width="2.200"/></svg>
<svg style="position:absolute;left:6px;top:498px" width="26" height="26" viewBox="0 0 26 26"><rect x="2" y="2" width="22" height="22" fill="#a8cfa8"/><path d="M10 9l12 8v5l-13-10" fill="#008000" stroke="#008000" stroke-width="2.400"/><circle cx="8.500" cy="9.500" r="3.600" fill="#a8cfa8" stroke="#008000" stroke-width="2.200"/></svg>
<svg style="position:absolute;left:6px;top:532px" width="26" height="26" viewBox="0 0 26 26"><rect x="2" y="2" width="22" height="22" fill="#70a870" stroke="#2040e0" stroke-width="2"/><path d="M11 10l11 8" stroke="#dfe8df" stroke-width="2.400"/><circle cx="9.500" cy="10" r="3.400" fill="none" stroke="#dfe8df" stroke-width="2"/></svg>
<svg style="position:absolute;left:6px;top:573px" width="26" height="30" viewBox="0 0 26 30"><circle cx="15" cy="12" r="8.200" fill="none" stroke="#0a8a0a" stroke-width="2"/><circle cx="15" cy="12" r="3.200" fill="none" stroke="#0a8a0a" stroke-width="2.200"/><path d="M0.500 24c3-5 10-5 13 0-3 4-10 4-13 0z" fill="#fff" stroke="#111" stroke-width="1.200"/><circle cx="7" cy="24" r="2.200" fill="#6a6ae0"/></svg>
<svg style="position:absolute;left:6px;top:607px" width="26" height="26" viewBox="0 0 26 26"><circle cx="16" cy="10.500" r="8.200" fill="none" stroke="#0a9a1a" stroke-width="1.300"/><rect x="13.800" y="11" width="4.800" height="14.500" fill="#35d045"/><circle cx="16" cy="10.500" r="3.500" fill="#0a9a1a"/><rect x="2" y="8" width="11" height="5" fill="#f01010"/></svg>
<svg style="position:absolute;left:6px;top:641px" width="26" height="26" viewBox="0 0 26 26"><path d="M2.500 5.500h6l5 10.500h10M2.500 10.500h4l5 10.500h12" fill="none" stroke="#e01818" stroke-width="1.600"/><path d="M17.600 4v20M21 4v20" stroke="#0a8a0a" stroke-width="1.800"/></svg>
<div class="sel" style="position:absolute;left:1211px;top:128px;width:32px;height:32px;"></div>
<div style="position:absolute;left:1215px;top:165px;width:24px;height:1px;background:#c5c2b2"></div>
<div style="position:absolute;left:1215px;top:243px;width:24px;height:1px;background:#c5c2b2"></div>
<div style="position:absolute;left:1215px;top:388px;width:24px;height:1px;background:#c5c2b2"></div>
<div style="position:absolute;left:1215px;top:532px;width:24px;height:1px;background:#c5c2b2"></div>
<div style="position:absolute;left:1215px;top:610px;width:24px;height:1px;background:#c5c2b2"></div>
<div style="position:absolute;left:1215px;top:653px;width:24px;height:1px;background:#c5c2b2"></div>
<svg style="position:absolute;left:1214px;top:131px" width="26" height="26" viewBox="0 0 26 26"><ellipse cx="13.300" cy="22.800" rx="8.500" ry="2" fill="#8a9a20" opacity=".55"/><path d="M7.300 4.600L21.800 15.500l-6.600.500 2.600 5.200-2.700 1.200-2.500-5.200-4.800 3.500z" fill="#c3cc84" stroke="#5e6040" stroke-width="1.100"/></svg>
<svg style="position:absolute;left:1214px;top:174px" width="26" height="26" viewBox="0 0 26 26"><path d="M13 6v19M18 6v19M1 18h24" stroke="#777" stroke-width="1.200"/><path d="M1 7h24" stroke="#f01010" stroke-width="2"/><path d="M7 2v23" stroke="#22dd22" stroke-width="2.200"/><circle cx="7" cy="7" r="1.800" fill="#f5a020" stroke="#333" stroke-width=".6"/><g transform="translate(8,8)"><path d="M0 0v13l3.200-3 2.500 5.500 2.200-1-2.500-5.300 4.300-.2z" fill="#c8c8f8" stroke="#223" stroke-width=".9"/></g></svg>
<svg style="position:absolute;left:1214px;top:208px" width="26" height="26" viewBox="0 0 26 26"><rect x="1" y="1" width="24" height="24" rx="4" fill="#d6d4cc"/><path d="M9 9L2 24M9 9L4 2M9 9l16-5M9 9l16 4M9 9l3 16" stroke="#fff" stroke-width="1.500"/><circle cx="9" cy="9" r="2.600" fill="none" stroke="#e01010" stroke-width="1.600"/><g transform="translate(10,10)"><path d="M0 0v13l3.200-3 2.500 5.500 2.200-1-2.500-5.300 4.300-.2z" fill="#c8c8f8" stroke="#223" stroke-width=".9"/></g></svg>
<svg style="position:absolute;left:1214px;top:251px" width="26" height="26" viewBox="0 0 26 26"><rect x="1.2" y="4" width="24" height="14.500" rx="1" fill="#cdcdcd" stroke="#111" stroke-width="1.400"/><path d="M1.200 9a2.200 2.200 0 0 1 0 4.500" fill="#f4f4f0" stroke="#111" stroke-width="1.200"/><rect x="4.1" y="0.3" width="4.400" height="7.400" fill="#ff8200" stroke="#c86000" stroke-width=".6"/><circle cx="6.3" cy="4" r=".8" fill="#f0f0f0"/><rect x="4.1" y="15.3" width="4.400" height="7.400" fill="#ff8200" stroke="#c86000" stroke-width=".6"/><circle cx="6.3" cy="18.5" r=".8" fill="#f0f0f0"/><rect x="10.7" y="0.3" width="4.400" height="7.400" fill="#ff8200" stroke="#c86000" stroke-width=".6"/><circle cx="12.899999999999999" cy="4" r=".8" fill="#f0f0f0"/><rect x="10.7" y="15.3" width="4.400" height="7.400" fill="#ff8200" stroke="#c86000" stroke-width=".6"/><circle cx="12.899999999999999" cy="18.5" r=".8" fill="#f0f0f0"/><rect x="17.3" y="0.3" width="4.400" height="7.400" fill="#ff8200" stroke="#c86000" stroke-width=".6"/><circle cx="19.5" cy="4" r=".8" fill="#f0f0f0"/><rect x="17.3" y="15.3" width="4.400" height="7.400" fill="#ff8200" stroke="#c86000" stroke-width=".6"/><circle cx="19.5" cy="18.5" r=".8" fill="#f0f0f0"/></svg>
<svg style="position:absolute;left:1214px;top:285px" width="26" height="26" viewBox="0 0 26 26"><path d="M2.500 6h10l3 13h9" fill="none" stroke="#0a8a0a" stroke-width="4" stroke-linejoin="round"/></svg>
<svg style="position:absolute;left:1214px;top:319px" width="26" height="26" viewBox="0 0 26 26"><rect x="1" y="1" width="24" height="24" fill="#008000"/><path d="M11 8l14 9v6L10 12" fill="#008000" stroke="#f0f5f0" stroke-width="1.300"/><circle cx="9" cy="9.500" r="3.800" fill="#008000" stroke="#f0f5f0" stroke-width="2.200"/></svg>
<svg style="position:absolute;left:1214px;top:353px" width="26" height="26" viewBox="0 0 26 26"><rect x="1.500" y="1.500" width="23" height="23" fill="#a8cccc" stroke="#333"/><path d="M10 6l15 10v9" fill="none" stroke="#0a8a0a" stroke-width="2"/><circle cx="7" cy="6.500" r="4" fill="none" stroke="#8a8a10" stroke-width="2.200"/><path d="M3 8c6 3 11 9 14 16M19 10C12 13 6 19 3 24" stroke="#e02030" stroke-width="2.400" fill="none"/></svg>
<svg style="position:absolute;left:1214px;top:396px" width="26" height="26" viewBox="0 0 26 26"><path d="M3 23L23 4" stroke="#1414f0" stroke-width="3.200" stroke-dasharray="4.200 2.800"/></svg>
<svg style="position:absolute;left:1214px;top:430px" width="26" height="26" viewBox="0 0 26 26"><circle cx="13" cy="13" r="11.200" fill="none" stroke="#1414f0" stroke-width="1.600"/><rect x="10.500" y="10.500" width="5" height="5" fill="#3cb83c" stroke="#1a6a1a" stroke-width=".8"/><rect x="18.500" y="2.500" width="5" height="5" fill="#3cb83c" stroke="#1a6a1a" stroke-width=".8"/></svg>
<svg style="position:absolute;left:1214px;top:464px" width="26" height="26" viewBox="0 0 26 26"><path d="M5 4c10-1 17 6 16.500 17" fill="none" stroke="#1414f0" stroke-width="2.200"/><rect x="2.5" y="1.5" width="5" height="5" fill="#3cb83c" stroke="#1a6a1a" stroke-width=".8"/><rect x="2.5" y="18.5" width="5" height="5" fill="#3cb83c" stroke="#1a6a1a" stroke-width=".8"/><rect x="19" y="18.5" width="5" height="5" fill="#3cb83c" stroke="#1a6a1a" stroke-width=".8"/></svg>
<svg style="position:absolute;left:1214px;top:498px" width="26" height="26" viewBox="0 0 26 26"><text x="13" y="21" font-size="22" font-family='"Liberation Serif",serif' font-weight="bold" fill="#111" text-anchor="middle">T</text></svg>
<svg style="position:absolute;left:1214px;top:541px" width="26" height="26" viewBox="0 0 26 26"><text x="13" y="10.500" font-size="12" font-weight="bold" fill="#111" text-anchor="middle" font-family='"Liberation Sans",sans-serif'>N</text><path d="M2 9v15M24.500 9v15" stroke="#1414f0" stroke-width="2"/><path d="M4 16h19" stroke="#111" stroke-width="1.300"/><path d="M3 16l5-2.800v5.600zM23.500 16l-5-2.800v5.600z" fill="#111"/></svg>
<svg style="position:absolute;left:1214px;top:575px" width="26" height="26" viewBox="0 0 26 26"><circle cx="13" cy="13" r="7.500" fill="#111"/><path d="M13 13V5.500A7.500 7.500 0 0 0 5.500 13zM13 13v7.500A7.500 7.500 0 0 0 20.500 13z" fill="#e8e010"/><path d="M13 2v22M2 13h22" stroke="#111" stroke-width="1.200"/></svg>
<svg style="position:absolute;left:1214px;top:618px" width="26" height="26" viewBox="0 0 26 26"><path d="M5.500 7l1.500 16.500h12L20.500 7z" fill="#d9d9d9" stroke="#9a9a9a"/><path d="M9 9l.5 13M13 9v13M17 9l-.5 13" stroke="#b0b0b0" stroke-width="1.300"/><ellipse cx="13" cy="6.500" rx="8.500" ry="2.600" fill="#ececec" stroke="#9a9a9a"/><path d="M10.500 4a2.500 2 0 0 1 5 0" fill="none" stroke="#9a9a9a" stroke-width="1.200"/></svg>
<svg width="1150" height="547" viewBox="39 123 1150 547" style="position:absolute;left:39px;top:123px" font-family="Liberation Sans, sans-serif" shape-rendering="crispEdges">
<defs><path id="gr" d="M44 .5h1M54 .5h1M64 .5h1M74 .5h1M84 .5h1M94 .5h1M105 .5h1M115 .5h1M125 .5h1M135 .5h1M145 .5h1M155 .5h1M165 .5h1M175 .5h1M185 .5h1M195 .5h1M206 .5h1M216 .5h1M226 .5h1M236 .5h1M246 .5h1M256 .5h1M266 .5h1M276 .5h1M286 .5h1M296 .5h1M306 .5h1M317 .5h1M327 .5h1M337 .5h1M347 .5h1M357 .5h1M367 .5h1M377 .5h1M387 .5h1M397 .5h1M407 .5h1M417 .5h1M428 .5h1M438 .5h1M448 .5h1M458 .5h1M468 .5h1M478 .5h1M488 .5h1M498 .5h1M508 .5h1M518 .5h1M529 .5h1M539 .5h1M549 .5h1M559 .5h1M569 .5h1M579 .5h1M589 .5h1M599 .5h1M609 .5h1M619 .5h1M629 .5h1M640 .5h1M650 .5h1M660 .5h1M670 .5h1M680 .5h1M690 .5h1M700 .5h1M710 .5h1M720 .5h1M730 .5h1M740 .5h1M751 .5h1M761 .5h1M771 .5h1M781 .5h1M791 .5h1M801 .5h1M811 .5h1M821 .5h1M831 .5h1M841 .5h1M852 .5h1M862 .5h1M872 .5h1M882 .5h1M892 .5h1M902 .5h1M912 .5h1M922 .5h1M932 .5h1M942 .5h1M952 .5h1M963 .5h1M973 .5h1M983 .5h1M993 .5h1M1003 .5h1M1013 .5h1M1023 .5h1M1033 .5h1M1043 .5h1M1053 .5h1M1063 .5h1M1074 .5h1M1084 .5h1M1094 .5h1M1104 .5h1M1114 .5h1M1124 .5h1M1134 .5h1M1144 .5h1M1154 .5h1M1164 .5h1M1175 .5h1M1185 .5h1" stroke="#8c8c8c" stroke-width="1" fill="none"/></defs>
<rect x="39" y="123" width="1150" height="547" fill="#000"/>
<g fill="#a00000"><rect x="197.2" y="197.0" width="47.7" height="17.4"/><rect x="247.9" y="197.0" width="27.0" height="17.4"/><rect x="278.5" y="197.0" width="28.5" height="17.4"/><rect x="227.7" y="160.0" width="17.0" height="14.3"/><rect x="227.7" y="176.6" width="17.0" height="20.8"/><rect x="248.1" y="160.0" width="16.8" height="14.3"/><rect x="248.1" y="176.6" width="16.8" height="20.8"/><rect x="310.8" y="197.0" width="12.3" height="17.4"/><rect x="380.0" y="197.0" width="47.0" height="17.4"/><rect x="430.0" y="197.0" width="26.8" height="17.4"/><rect x="459.8" y="197.0" width="29.6" height="17.4"/><rect x="493.2" y="197.0" width="12.8" height="17.4"/><rect x="509.8" y="197.0" width="28.1" height="17.4"/><rect x="540.9" y="197.0" width="26.6" height="17.4"/><rect x="570.6" y="197.0" width="27.2" height="17.4"/><rect x="600.8" y="197.0" width="29.2" height="17.4"/><rect x="410.2" y="160.0" width="16.4" height="14.3"/><rect x="410.2" y="176.6" width="16.4" height="20.8"/><rect x="430.0" y="160.0" width="16.4" height="14.3"/><rect x="430.0" y="176.6" width="16.4" height="20.8"/><rect x="550.8" y="160.0" width="17.0" height="14.3"/><rect x="550.8" y="176.6" width="17.0" height="20.8"/><rect x="570.9" y="160.0" width="16.6" height="14.3"/><rect x="570.9" y="176.6" width="16.6" height="20.8"/><rect x="620.0" y="197.0" width="8.5" height="17.4"/><rect x="631.7" y="197.0" width="27.0" height="17.4"/><rect x="661.7" y="197.0" width="27.2" height="17.4"/><rect x="691.9" y="197.0" width="16.8" height="17.4"/><rect x="706.8" y="195.8" width="31.1" height="16.6"/><rect x="744.9" y="146.0" width="18.0" height="17.0"/><rect x="743.1" y="144.2" width="21.6" height="20.6" fill="none" stroke="#900000" stroke-width="1"/><rect x="744.9" y="269.0" width="18.0" height="17.0"/><rect x="743.1" y="267.2" width="21.6" height="20.6" fill="none" stroke="#900000" stroke-width="1"/><rect x="770.3" y="146.0" width="18.0" height="17.0"/><rect x="768.5" y="144.2" width="21.6" height="20.6" fill="none" stroke="#900000" stroke-width="1"/><rect x="770.3" y="269.0" width="18.0" height="17.0"/><rect x="768.5" y="267.2" width="21.6" height="20.6" fill="none" stroke="#900000" stroke-width="1"/><rect x="795.7" y="146.0" width="18.0" height="17.0"/><rect x="793.9000000000001" y="144.2" width="21.6" height="20.6" fill="none" stroke="#900000" stroke-width="1"/><rect x="795.7" y="269.0" width="18.0" height="17.0"/><rect x="793.9000000000001" y="267.2" width="21.6" height="20.6" fill="none" stroke="#900000" stroke-width="1"/><rect x="821.1" y="146.0" width="18.0" height="17.0"/><rect x="819.3000000000001" y="144.2" width="21.6" height="20.6" fill="none" stroke="#900000" stroke-width="1"/><rect x="821.1" y="269.0" width="18.0" height="17.0"/><rect x="819.3000000000001" y="267.2" width="21.6" height="20.6" fill="none" stroke="#900000" stroke-width="1"/><rect x="721.7" y="168.9" width="17.0" height="17.0"/><rect x="719.9000000000001" y="167.1" width="20.6" height="20.6" fill="none" stroke="#900000" stroke-width="1"/><rect x="721.7" y="245.1" width="17.0" height="17.0"/><rect x="719.9000000000001" y="243.29999999999998" width="20.6" height="20.60000000000003" fill="none" stroke="#900000" stroke-width="1"/><rect x="845.3" y="168.9" width="17.3" height="17.0"/><rect x="843.5" y="167.1" width="20.90000000000007" height="20.6" fill="none" stroke="#900000" stroke-width="1"/><rect x="845.3" y="194.3" width="17.3" height="17.0"/><rect x="843.5" y="192.5" width="20.90000000000007" height="20.6" fill="none" stroke="#900000" stroke-width="1"/><rect x="845.3" y="245.1" width="17.3" height="17.0"/><rect x="843.5" y="243.29999999999998" width="20.90000000000007" height="20.60000000000003" fill="none" stroke="#900000" stroke-width="1"/><rect x="721.7" y="220.5" width="17.0" height="18.0"/><rect x="719.9000000000001" y="218.7" width="20.6" height="21.6" fill="none" stroke="#900000" stroke-width="1"/><rect x="712.5" y="185.5" width="36" height="36" fill="none" stroke="#900000"/><rect x="835.5" y="210.5" width="36" height="36" fill="none" stroke="#900000"/><rect x="760.5" y="259.5" width="36" height="36" fill="none" stroke="#900000"/><rect x="845.3" y="221.5" width="35.7" height="15.1"/><rect x="326.8" y="197.0" width="28.9" height="17.4"/><rect x="359.1" y="197.0" width="30.9" height="17.4"/><rect x="277.7" y="248.1" width="17.9" height="15.1"/><rect x="246.2" y="262.8" width="14.0" height="17.4"/><rect x="263.2" y="262.8" width="47.9" height="17.4"/><rect x="314.2" y="262.8" width="13.6" height="17.4"/><rect x="277.7" y="280.2" width="17.9" height="10.4"/><rect x="277.7" y="302.8" width="18.9" height="15.1"/><rect x="280.6" y="317.0" width="10.4" height="6.6"/><rect x="281.1" y="322.6" width="14.5" height="17.9"/><rect x="308.9" y="322.6" width="15.1" height="17.9"/><polyline points="286.2,335.8 276.0,345.8 276.0,367.0" fill="none" stroke="#a00000" stroke-width="9" stroke-linecap="round" stroke-linejoin="round"/><rect x="329.2" y="326.4" width="16.4" height="13.8"/><rect x="329.2" y="342.8" width="16.4" height="18.5"/><rect x="345.7" y="352.8" width="4.7" height="8.5"/><rect x="349.4" y="341.5" width="16.4" height="13.4"/><rect x="349.4" y="357.9" width="16.4" height="13.8"/><rect x="340.9" y="361.3" width="17.0" height="11.3"/><rect x="282.5" y="214.3" width="7.5" height="11.3"/><rect x="277.7" y="224.1" width="17.9" height="16.0"/><rect x="277.7" y="252.4" width="17.9" height="11.3"/><polygon points="312.6,214.0 322.0,214.0 323.0,218.0 330.0,224.0 330.0,244.0 322.0,253.0 312.6,253.0 305.5,244.0 305.5,225.7 312.6,218.0"/><polygon points="494.0,214.0 505.5,214.0 505.5,218.0 510.0,224.0 510.0,244.0 503.0,253.0 493.0,253.0 486.6,244.0 486.6,225.0 494.0,218.0"/><rect x="464.5" y="214.3" width="7.0" height="11.3"/><rect x="458.3" y="224.1" width="20.2" height="16.0"/><rect x="458.3" y="252.4" width="20.2" height="13.2"/><rect x="428.7" y="253.3" width="13.6" height="16.0"/><rect x="445.3" y="253.3" width="9.2" height="16.0"/><rect x="417.7" y="271.2" width="17.0" height="19.8"/><rect x="444.2" y="271.2" width="15.1" height="19.8"/><rect x="467.2" y="268.8" width="9.4" height="13.8"/><rect x="479.6" y="268.8" width="15.5" height="13.8"/><polyline points="542.3,301.4 536.6,296.7 441.3,296.7 423.4,313.7 423.4,372.2" fill="none" stroke="#a00000" stroke-width="9.5" stroke-linecap="round" stroke-linejoin="round"/><polyline points="425.3,287.3 425.3,291.0 432.8,297.6" fill="none" stroke="#a00000" stroke-width="9.5" stroke-linecap="round" stroke-linejoin="round"/><polyline points="542.3,301.4 550.8,309.9" fill="none" stroke="#a00000" stroke-width="9.5" stroke-linecap="round" stroke-linejoin="round"/><rect x="438.9" y="305.2" width="7.5" height="8.5"/><rect x="448.9" y="305.2" width="7.5" height="8.5"/><rect x="458.9" y="305.2" width="8.3" height="8.5"/><rect x="438.9" y="329.7" width="7.5" height="8.5"/><rect x="448.9" y="329.7" width="7.5" height="8.5"/><rect x="491.3" y="301.4" width="13.2" height="18.9"/><rect x="514.0" y="301.4" width="16.0" height="18.9"/><rect x="544.5" y="285.4" width="20.0" height="15.1"/><rect x="544.5" y="312.7" width="20.0" height="15.1"/><rect x="590.4" y="300.5" width="18.9" height="14.2"/><rect x="590.4" y="327.8" width="18.9" height="15.1"/><rect x="476.6" y="325.9" width="12.8" height="10.0"/><rect x="476.6" y="339.0" width="12.8" height="12.1"/><rect x="438.5" y="343.9" width="12.6" height="16.0"/><rect x="454.2" y="343.9" width="14.5" height="16.0"/><rect x="502.6" y="334.4" width="9.8" height="16.0"/><rect x="515.5" y="334.4" width="14.5" height="16.0"/><rect x="770.9" y="278.3" width="16.0" height="20.8"/><rect x="746.4" y="298.1" width="13.6" height="16.0"/><rect x="763.0" y="298.1" width="26.8" height="16.0"/><rect x="792.8" y="298.1" width="14.9" height="16.0"/><rect x="776.6" y="318.9" width="13.2" height="16.0"/><rect x="792.8" y="318.9" width="14.0" height="16.0"/><rect x="642.6" y="212.3" width="16.0" height="48.1"/><rect x="642.6" y="263.2" width="16.0" height="26.4"/><rect x="642.6" y="292.6" width="16.0" height="13.0"/><rect x="663.8" y="268.3" width="10.4" height="16.6"/><rect x="677.2" y="268.3" width="14.5" height="16.6"/><rect x="668.7" y="293.4" width="10.2" height="16.0"/><rect x="681.9" y="293.4" width="14.5" height="16.0"/><rect x="668.7" y="318.3" width="10.2" height="16.6"/><rect x="681.9" y="318.3" width="14.5" height="16.6"/><rect x="622.3" y="296.2" width="16.6" height="13.8"/><rect x="622.3" y="312.6" width="16.6" height="12.8"/><rect x="648.3" y="307.5" width="15.5" height="12.6"/><rect x="648.3" y="322.8" width="15.5" height="14.0"/><rect x="620.0" y="329.2" width="9.1" height="15.1"/><rect x="631.7" y="329.2" width="13.8" height="15.1"/><rect x="644.6" y="347.5" width="51.7" height="15.7"/><rect x="688" y="363" width="8.3" height="6"/><polyline points="694.5,348.1 705.8,337.2" fill="none" stroke="#a00000" stroke-width="7" stroke-linecap="round" stroke-linejoin="round"/><polyline points="620.0,390.0 647.9,362.1" fill="none" stroke="#a00000" stroke-width="6.5" stroke-linecap="round" stroke-linejoin="round"/><rect x="705.8" y="328.9" width="13.6" height="16.4"/><rect x="722.5" y="328.9" width="13.6" height="16.4"/><rect x="743.6" y="331.1" width="16.0" height="14.5"/><rect x="743.6" y="348.3" width="16.0" height="14.9"/><rect x="705.8" y="350.0" width="13.6" height="15.1"/><rect x="722.5" y="350.0" width="10.8" height="15.1"/><rect x="733.2" y="353.4" width="11.3" height="8.3"/><polyline points="752.1,357.4 804.0,357.4 865.3,294.9 872.8,294.9" fill="none" stroke="#a00000" stroke-width="8.5" stroke-linecap="round" stroke-linejoin="round"/><rect x="705.8" y="369.8" width="13.6" height="16.0"/><rect x="722.5" y="369.8" width="10.8" height="16.0"/><rect x="739.8" y="369.8" width="10.0" height="16.0"/><rect x="752.8" y="369.8" width="13.4" height="16.0"/><rect x="783.2" y="372.3" width="16.0" height="9.8"/><rect x="874.4" y="220.9" width="8.0" height="22.2"/><rect x="881.5" y="228.0" width="9.9" height="16.6"/><rect x="894.9" y="228.0" width="14.0" height="16.6"/><rect x="875.5" y="243.1" width="7.5" height="8.6"/><rect x="874.4" y="250.7" width="14.0" height="12.5"/><rect x="874.4" y="266.2" width="14.0" height="12.5"/><rect x="867.3" y="288.0" width="14.0" height="16.6"/><rect x="884.8" y="288.0" width="12.3" height="16.6"/><rect x="884.8" y="303.5" width="12.3" height="4.3"/><rect x="883.0" y="305.7" width="19.4" height="15.1"/><rect x="883.0" y="332.7" width="19.4" height="16.2"/><rect x="340.9" y="358.7" width="26.0" height="14.2"/><polyline points="353.2,370.0 353.2,385.1 360.8,401.1" fill="none" stroke="#a00000" stroke-width="10" stroke-linecap="round" stroke-linejoin="round"/><polyline points="362.1,370.0 362.1,483.2" fill="none" stroke="#a00000" stroke-width="10" stroke-linecap="round" stroke-linejoin="round"/><polyline points="423.2,368.1 423.2,402.1 454.2,433.0" fill="none" stroke="#a00000" stroke-width="9.5" stroke-linecap="round" stroke-linejoin="round"/><rect x="320.2" y="360.4" width="20.8" height="21.7"/><polyline points="423.6,372.0 423.6,404.0 489.0,469.0 562.0,469.0 609.0,516.0 609.0,640.0" fill="none" stroke="#a00000" stroke-width="9.5" stroke-linecap="round" stroke-linejoin="round"/><rect x="470.2" y="357.2" width="15.7" height="18.4"/><rect x="470.2" y="389" width="15.7" height="13"/><rect x="532.2" y="363.2" width="15.6" height="12.4"/><rect x="532.2" y="389" width="15.6" height="13"/><rect x="491.3" y="353" width="10.2" height="16"/><rect x="504.7" y="353" width="9.2" height="16"/><rect x="517.1" y="353" width="9.7" height="16"/><rect x="491.3" y="396" width="10.2" height="15.7"/><rect x="504.7" y="396" width="9.2" height="15.7"/><rect x="517.1" y="396" width="9.7" height="15.7"/><rect x="552.5" y="329.6" width="8.7" height="5.1"/><rect x="552.5" y="336.8" width="8.7" height="5.1"/><rect x="552.5" y="344.0" width="8.7" height="5.1"/><rect x="552.5" y="351.1" width="8.7" height="5.1"/><rect x="552.1" y="328.7" width="9.4" height="34.0"/><rect x="577.5" y="328.7" width="10.8" height="34.0"/><rect x="594.5" y="350.4" width="13.6" height="15.1"/><rect x="611.1" y="350.4" width="13.6" height="15.1"/><rect x="559.6" y="374.3" width="13.6" height="16.6"/><rect x="576.2" y="374.3" width="14.5" height="16.6"/><rect x="599.2" y="384.9" width="14.5" height="15.5"/><rect x="616.8" y="384.9" width="13.6" height="15.5"/><polyline points="587.9,382.5 602.1,392.8" fill="none" stroke="#a00000" stroke-width="8" stroke-linecap="round" stroke-linejoin="round"/><polyline points="627.5,392.3 646.4,374.0" fill="none" stroke="#a00000" stroke-width="8" stroke-linecap="round" stroke-linejoin="round"/><polyline points="587.9,405.1 602.1,395.7" fill="none" stroke="#a00000" stroke-width="8" stroke-linecap="round" stroke-linejoin="round"/><polyline points="552.1,374.0 563.4,383.4" fill="none" stroke="#a00000" stroke-width="7" stroke-linecap="round" stroke-linejoin="round"/><rect x="577.5" y="401.3" width="13.2" height="8.9"/><rect x="577.5" y="415.1" width="13.2" height="13.6"/><rect x="619.6" y="424.9" width="14.0" height="16.0"/><rect x="636.6" y="424.9" width="14.5" height="16.0"/><polyline points="649.2,412.6 638.9,425.8" fill="none" stroke="#a00000" stroke-width="7" stroke-linecap="round" stroke-linejoin="round"/><rect x="644.6" y="401.5" width="51.7" height="16.1"/><polygon points="656,396 686,396 689,401.5 653,401.5"/><rect x="657" y="398.5" width="28" height="1.6" fill="#000"/><rect x="705.8" y="349.4" width="13.6" height="16.0"/><rect x="722.5" y="349.4" width="10.8" height="16.0"/><rect x="705.8" y="370.2" width="13.6" height="16.0"/><rect x="722.5" y="370.2" width="10.8" height="16.0"/><rect x="739.8" y="370.2" width="10.0" height="16.0"/><rect x="752.8" y="370.2" width="13.4" height="16.0"/><rect x="705.8" y="389.4" width="13.6" height="15.7"/><rect x="722.5" y="389.4" width="10.8" height="15.7"/><rect x="739.8" y="389.4" width="10.0" height="15.7"/><rect x="752.8" y="389.4" width="13.4" height="15.7"/><rect x="705.8" y="409.4" width="13.6" height="15.5"/><rect x="722.5" y="409.4" width="10.8" height="15.5"/><rect x="739.8" y="409.4" width="10.0" height="15.5"/><rect x="752.8" y="409.4" width="13.4" height="15.5"/><rect x="731.3" y="374.0" width="9.4" height="8.5"/><rect x="731.3" y="393.8" width="9.4" height="7.5"/><rect x="731.3" y="413.6" width="9.4" height="7.5"/><rect x="696.4" y="393.8" width="10.4" height="7.5"/><rect x="696.4" y="374.0" width="10.4" height="8.5"/><rect x="783.2" y="372.1" width="16.0" height="13.6"/><rect x="783.2" y="388.3" width="16.0" height="14.9"/><rect x="766.2" y="393.8" width="17.9" height="7.0"/><rect x="787.5" y="403.2" width="7.9" height="9.4"/><rect x="773.8" y="413.2" width="9.8" height="8.3"/><rect x="773.8" y="434.0" width="9.8" height="8.3"/><rect x="799.2" y="414.2" width="8.5" height="8.3"/><rect x="799.2" y="434.0" width="8.5" height="8.3"/><rect x="814.3" y="423.0" width="15.1" height="12.6"/><rect x="814.3" y="440.6" width="15.1" height="12.6"/><rect x="832.3" y="416.4" width="19.8" height="14.2"/><rect x="832.3" y="444.7" width="19.8" height="14.2"/><rect x="852.1" y="446.0" width="20.8" height="9.1"/><rect x="807.7" y="434.0" width="7.5" height="8.3"/><rect x="827.5" y="445.7" width="5.7" height="7.5"/><rect x="797.4" y="460.8" width="12.6" height="16.0"/><rect x="813.0" y="460.8" width="12.6" height="16.0"/><rect x="816.2" y="453.2" width="7.5" height="8.5"/><rect x="750.2" y="448.5" width="15.1" height="19.8"/><rect x="777.0" y="448.5" width="15.7" height="19.8"/><rect x="724.7" y="436.2" width="13.2" height="9.8"/><rect x="724.7" y="450.9" width="13.2" height="10.8"/><rect x="685.1" y="450.4" width="14.5" height="16.0"/><rect x="702.6" y="450.4" width="9.2" height="16.0"/><polyline points="655.3,414.5 655.3,423.0 633.2,444.7 630.4,453.2" fill="none" stroke="#a00000" stroke-width="6" stroke-linecap="round" stroke-linejoin="round"/><polyline points="660.0,414.5 660.0,432.5 650.2,442.8 650.2,453.2" fill="none" stroke="#a00000" stroke-width="6" stroke-linecap="round" stroke-linejoin="round"/><polyline points="669.1,414.5 669.1,453.2" fill="none" stroke="#a00000" stroke-width="6" stroke-linecap="round" stroke-linejoin="round"/><polyline points="682.6,414.5 682.6,426.8 695.5,440.0 695.5,451.3" fill="none" stroke="#a00000" stroke-width="6" stroke-linecap="round" stroke-linejoin="round"/><polyline points="687.5,415.1 708.7,435.3 750.2,435.3 763.4,448.5" fill="none" stroke="#a00000" stroke-width="6" stroke-linecap="round" stroke-linejoin="round"/><polyline points="692.6,415.5 703.0,425.8" fill="none" stroke="#a00000" stroke-width="6" stroke-linecap="round" stroke-linejoin="round"/><polyline points="650.2,414.5 650.2,417.4 638.9,426.8" fill="none" stroke="#a00000" stroke-width="6" stroke-linecap="round" stroke-linejoin="round"/><polyline points="737.9,455.1 750.2,457.9" fill="none" stroke="#a00000" stroke-width="6" stroke-linecap="round" stroke-linejoin="round"/><rect x="622.8" y="452.3" width="15.1" height="13.6"/><rect x="622.8" y="470.8" width="15.1" height="12.6"/><rect x="642.6" y="452.3" width="15.1" height="13.6"/><rect x="642.6" y="470.8" width="15.1" height="12.6"/><rect x="662.5" y="452.3" width="15.1" height="13.6"/><rect x="662.5" y="470.8" width="15.1" height="12.6"/><polyline points="362.4,485.2 362.4,551.8 376.7,569.5" fill="none" stroke="#a00000" stroke-width="10" stroke-linecap="round" stroke-linejoin="round"/><rect x="373.0" y="562.3" width="13.8" height="14.5"/><rect x="390.7" y="562.3" width="13.8" height="14.5"/><polyline points="398.5,569.5 440.9,569.5 456.7,588.9 519.7,588.9" fill="none" stroke="#a00000" stroke-width="10" stroke-linecap="round" stroke-linejoin="round"/><polyline points="427.6,588.9 427.6,629.4" fill="none" stroke="#a00000" stroke-width="10" stroke-linecap="round" stroke-linejoin="round"/><rect x="493.1" y="584.1" width="86.1" height="10.7"/><rect x="407.7" y="508.2" width="15.0" height="20.6"/><rect x="434.9" y="508.2" width="15.0" height="20.6"/><rect x="457.9" y="508.2" width="14.5" height="20.6"/><rect x="484.6" y="508.2" width="15.3" height="20.6"/><rect x="460.3" y="534.1" width="15.8" height="29.8"/><rect x="491.1" y="534.1" width="16.5" height="29.8"/><rect x="521.7" y="533.6" width="16.2" height="13.8"/><rect x="521.7" y="550.6" width="16.2" height="13.3"/><rect x="525.1" y="562.7" width="9.7" height="14.5"/><rect x="519.7" y="601.5" width="15.0" height="24.2"/><polyline points="473.7,628.2 473.7,635.5 482.2,644.7 616.7,644.7" fill="none" stroke="#a00000" stroke-width="10" stroke-linecap="round" stroke-linejoin="round"/><rect x="546.4" y="606.4" width="16.5" height="12.1"/><rect x="546.4" y="622.2" width="16.5" height="13.3"/><polyline points="630.4,461.9 630.4,521.2 696.4,587.2 705.8,587.2" fill="none" stroke="#a00000" stroke-width="6" stroke-linecap="round" stroke-linejoin="round"/><polyline points="650.1,461.9 650.1,527.9 696.4,574.5 705.8,574.5" fill="none" stroke="#a00000" stroke-width="6" stroke-linecap="round" stroke-linejoin="round"/><polyline points="670.0,461.9 670.0,533.3 696.4,560.2 705.8,560.2" fill="none" stroke="#a00000" stroke-width="6" stroke-linecap="round" stroke-linejoin="round"/><rect x="697.8" y="555.7" width="14.0" height="7.8"/><rect x="751.1" y="555.7" width="14.0" height="7.8"/><rect x="697.8" y="568.3" width="14.0" height="7.8"/><rect x="751.1" y="568.3" width="14.0" height="7.8"/><rect x="697.8" y="581.0" width="14.0" height="7.8"/><rect x="751.1" y="581.0" width="14.0" height="7.8"/><rect x="697.8" y="593.4" width="14.0" height="8.1"/><rect x="751.1" y="593.4" width="14.0" height="8.1"/><rect x="741.4" y="545.4" width="9.7" height="59.3"/><rect x="735.5" y="530.6" width="13.5" height="16.2"/><rect x="753.3" y="530.6" width="13.2" height="16.2"/><polyline points="762.4,538.7 781.3,538.7 790.7,528.7 790.7,514.5" fill="none" stroke="#a00000" stroke-width="6" stroke-linecap="round" stroke-linejoin="round"/><rect x="766.5" y="501.0" width="12.7" height="16.2"/><rect x="783.4" y="501.0" width="14.0" height="16.2"/><rect x="743.6" y="487.5" width="15.6" height="10.0"/><rect x="743.6" y="501.2" width="15.6" height="11.9"/><rect x="682.9" y="474.8" width="11.3" height="7.8"/><rect x="682.9" y="493.7" width="11.3" height="7.8"/><rect x="708.5" y="485.1" width="8.6" height="7.0"/><rect x="789.4" y="482.1" width="12.1" height="13.5"/><rect x="804.7" y="482.1" width="14.3" height="13.5"/><rect x="794.7" y="467.3" width="10.8" height="10.8"/><rect x="808.8" y="467.3" width="12.9" height="10.8"/><rect x="765.1" y="556.7" width="13.5" height="6.2"/><rect x="765.1" y="569.7" width="13.5" height="5.9"/><rect x="765.1" y="581.8" width="13.5" height="6.7"/><rect x="797.4" y="561.6" width="14.0" height="16.2"/><rect x="815.8" y="561.6" width="12.7" height="16.2"/><rect x="797.4" y="581.0" width="14.0" height="15.6"/><rect x="815.8" y="581.0" width="12.7" height="15.6"/><rect x="788.0" y="566.4" width="10.8" height="6.5"/><rect x="788.0" y="585.3" width="10.8" height="6.5"/><rect x="800.9" y="609.5" width="14.8" height="19.4"/><rect x="825.7" y="609.5" width="13.5" height="19.4"/><rect x="701.0" y="611.4" width="12.4" height="16.2"/><rect x="718.2" y="611.4" width="13.2" height="16.2"/><rect x="735.5" y="611.4" width="13.5" height="16.2"/><rect x="753.3" y="611.4" width="13.2" height="16.2"/><rect x="661.4" y="596.1" width="12.1" height="16.2"/><rect x="677.8" y="596.1" width="14.5" height="16.2"/><polyline points="687.0,600.7 697.8,597.2 705.8,597.2" fill="none" stroke="#a00000" stroke-width="6" stroke-linecap="round" stroke-linejoin="round"/><polyline points="762.4,619.0 805.5,619.0" fill="none" stroke="#a00000" stroke-width="6" stroke-linecap="round" stroke-linejoin="round"/><polyline points="851.0,452.0 868.0,452.0 877.0,461.0 877.0,618.0 856.0,645.0 600.0,645.0" fill="none" stroke="#a00000" stroke-width="10" stroke-linecap="round" stroke-linejoin="round"/></g>
<use href="#gr" y="125"/><use href="#gr" y="135"/><use href="#gr" y="145"/><use href="#gr" y="155"/><use href="#gr" y="165"/><use href="#gr" y="175"/><use href="#gr" y="186"/><use href="#gr" y="196"/><use href="#gr" y="206"/><use href="#gr" y="216"/><use href="#gr" y="226"/><use href="#gr" y="236"/><use href="#gr" y="246"/><use href="#gr" y="256"/><use href="#gr" y="266"/><use href="#gr" y="276"/><use href="#gr" y="287"/><use href="#gr" y="297"/><use href="#gr" y="307"/><use href="#gr" y="317"/><use href="#gr" y="327"/><use href="#gr" y="337"/><use href="#gr" y="347"/><use href="#gr" y="357"/><use href="#gr" y="367"/><use href="#gr" y="377"/><use href="#gr" y="387"/><use href="#gr" y="398"/><use href="#gr" y="408"/><use href="#gr" y="418"/><use href="#gr" y="428"/><use href="#gr" y="438"/><use href="#gr" y="448"/><use href="#gr" y="458"/><use href="#gr" y="468"/><use href="#gr" y="478"/><use href="#gr" y="488"/><use href="#gr" y="498"/><use href="#gr" y="509"/><use href="#gr" y="519"/><use href="#gr" y="529"/><use href="#gr" y="539"/><use href="#gr" y="549"/><use href="#gr" y="559"/><use href="#gr" y="569"/><use href="#gr" y="579"/><use href="#gr" y="589"/><use href="#gr" y="599"/><use href="#gr" y="610"/><use href="#gr" y="620"/><use href="#gr" y="630"/><use href="#gr" y="640"/><use href="#gr" y="650"/><use href="#gr" y="660"/><use href="#gr" y="670"/>
<circle cx="265.8" cy="310.9" r="6.5" fill="#8a8a00"/><circle cx="265.8" cy="310.9" r="1.2" fill="#2a2a00"/><circle cx="478.1" cy="311.2" r="6.5" fill="#8a8a00"/><circle cx="478.1" cy="311.2" r="1.2" fill="#2a2a00"/><circle cx="579.1" cy="321.2" r="6.5" fill="#8a8a00"/><circle cx="579.1" cy="321.2" r="1.2" fill="#2a2a00"/><circle cx="852.1" cy="305.7" r="6.5" fill="#8a8a00"/><circle cx="852.1" cy="305.7" r="1.2" fill="#2a2a00"/><circle cx="361.7" cy="402.5" r="10.5" fill="#8a8a00"/><circle cx="361.7" cy="402.5" r="2.2" fill="#2a2a00"/><circle cx="240.9" cy="402.5" r="10.5" fill="#8a8a00"/><circle cx="240.9" cy="402.5" r="2.2" fill="#2a2a00"/><circle cx="275.8" cy="372.3" r="10.5" fill="#8a8a00"/><circle cx="275.8" cy="372.3" r="2.5" fill="#2a2a00"/><circle cx="302.6" cy="372.3" r="10.5" fill="#8a8a00"/><circle cx="302.6" cy="372.3" r="2.5" fill="#2a2a00"/><circle cx="329.6" cy="372.3" r="10.5" fill="#8a8a00"/><circle cx="329.6" cy="372.3" r="2.5" fill="#2a2a00"/><circle cx="559.6" cy="437.7" r="8.5" fill="#8a8a00"/><circle cx="559.6" cy="437.7" r="1.8" fill="#2a2a00"/><circle cx="584.2" cy="437.7" r="8.5" fill="#8a8a00"/><circle cx="584.2" cy="437.7" r="1.8" fill="#2a2a00"/><circle cx="842.3" cy="476.8" r="6.5" fill="#8a8a00"/><circle cx="842.3" cy="476.8" r="1.2" fill="#2a2a00"/><circle cx="427.6" cy="588.9" r="10.5" fill="#8a8a00"/><circle cx="427.6" cy="588.9" r="2.2" fill="#2a2a00"/><circle cx="427.6" cy="629.4" r="10.5" fill="#8a8a00"/><circle cx="427.6" cy="629.4" r="2.2" fill="#2a2a00"/><circle cx="428.1" cy="548.9" r="10.5" fill="#8a8a00"/><circle cx="428.1" cy="548.9" r="2.2" fill="#2a2a00"/><rect x="517.3" y="576.1" width="25.5" height="26.7" fill="#8a8a00"/><rect x="519.3" y="578.0" width="21.6" height="22.8" fill="none" stroke="#b0a040" stroke-width="0.8"/><circle cx="529.9" cy="589.4" r="2.2" fill="#2a2a00"/><circle cx="584.0" cy="598.4" r="10.5" fill="#8a8a00"/><circle cx="584.0" cy="598.4" r="2.2" fill="#2a2a00"/><circle cx="473.7" cy="625.3" r="10.5" fill="#8a8a00"/><circle cx="473.7" cy="625.3" r="2.5" fill="#2a2a00"/><circle cx="498.4" cy="625.3" r="10.5" fill="#8a8a00"/><circle cx="498.4" cy="625.3" r="2.5" fill="#2a2a00"/><circle cx="523.4" cy="625.3" r="10.5" fill="#8a8a00"/><circle cx="523.4" cy="625.3" r="2.5" fill="#2a2a00"/><rect x="622.3" y="586.4" width="26.4" height="25.9" fill="#8a8a00"/><rect x="624.2" y="588.3" width="22.6" height="22.1" fill="none" stroke="#b0a040" stroke-width="0.8"/><circle cx="635.5" cy="599.3" r="2.2" fill="#2a2a00"/><circle cx="630.4" cy="496.9" r="8.5" fill="#8a8a00"/><circle cx="630.4" cy="496.9" r="1.8" fill="#2a2a00"/><circle cx="650.1" cy="496.9" r="8.5" fill="#8a8a00"/><circle cx="650.1" cy="496.9" r="1.8" fill="#2a2a00"/><circle cx="670.0" cy="496.9" r="8.5" fill="#8a8a00"/><circle cx="670.0" cy="496.9" r="1.8" fill="#2a2a00"/><circle cx="805.5" cy="507.7" r="6" fill="#8a8a00"/><circle cx="805.5" cy="507.7" r="1.2" fill="#2a2a00"/><circle cx="730.6" cy="488.3" r="8.5" fill="#8a8a00"/><circle cx="730.6" cy="488.3" r="1.8" fill="#2a2a00"/><circle cx="730.6" cy="507.7" r="8.5" fill="#8a8a00"/><circle cx="730.6" cy="507.7" r="1.8" fill="#2a2a00"/><circle cx="771.0" cy="488.3" r="8.5" fill="#8a8a00"/><circle cx="771.0" cy="488.3" r="1.8" fill="#2a2a00"/><circle cx="839.2" cy="478.1" r="6" fill="#8a8a00"/><circle cx="839.2" cy="478.1" r="1.2" fill="#2a2a00"/><circle cx="781.3" cy="569.7" r="8.5" fill="#8a8a00"/><circle cx="781.3" cy="569.7" r="1.8" fill="#2a2a00"/><circle cx="781.3" cy="588.0" r="8.5" fill="#8a8a00"/><circle cx="781.3" cy="588.0" r="1.8" fill="#2a2a00"/><circle cx="781.3" cy="607.9" r="8.5" fill="#8a8a00"/><circle cx="781.3" cy="607.9" r="1.8" fill="#2a2a00"/>
<g fill="none" stroke="#00a0a0" style="mix-blend-mode:lighten"><rect x="230.4" y="165.5" width="11.6" height="20.4" stroke-width="1.6"/><polyline points="230.4,170.7 242.0,170.7" stroke-width="1.6"/><polyline points="230.4,180.7 242.0,180.7" stroke-width="1.6"/><rect x="250.6" y="165.5" width="11.6" height="20.4" stroke-width="1.6"/><polyline points="250.6,170.7 262.2,170.7" stroke-width="1.6"/><polyline points="250.6,180.7 262.2,180.7" stroke-width="1.6"/><rect x="235.8" y="199.9" width="20.4" height="11.6" stroke-width="1.6"/><polyline points="241.0,199.9 241.0,211.5" stroke-width="1.6"/><polyline points="251.0,199.9 251.0,211.5" stroke-width="1.6"/><rect x="266.0" y="199.9" width="20.4" height="11.6" stroke-width="1.6"/><polyline points="271.2,199.9 271.2,211.5" stroke-width="1.6"/><polyline points="281.2,199.9 281.2,211.5" stroke-width="1.6"/><rect x="347.2" y="199.9" width="20.4" height="11.6" stroke-width="1.6"/><polyline points="352.4,199.9 352.4,211.5" stroke-width="1.6"/><polyline points="362.4,199.9 362.4,211.5" stroke-width="1.6"/><rect x="412.7" y="165.5" width="11.6" height="20.4" stroke-width="1.6"/><polyline points="412.7,170.7 424.3,170.7" stroke-width="1.6"/><polyline points="412.7,180.7 424.3,180.7" stroke-width="1.6"/><rect x="432.7" y="165.5" width="11.6" height="20.4" stroke-width="1.6"/><polyline points="432.7,170.7 444.3,170.7" stroke-width="1.6"/><polyline points="432.7,180.7 444.3,180.7" stroke-width="1.6"/><rect x="553.4" y="165.5" width="11.6" height="20.4" stroke-width="1.6"/><polyline points="553.4,170.7 565.0,170.7" stroke-width="1.6"/><polyline points="553.4,180.7 565.0,180.7" stroke-width="1.6"/><rect x="573.6" y="165.5" width="11.6" height="20.4" stroke-width="1.6"/><polyline points="573.6,170.7 585.2,170.7" stroke-width="1.6"/><polyline points="573.6,180.7 585.2,180.7" stroke-width="1.6"/><rect x="418.3" y="199.9" width="20.4" height="11.6" stroke-width="1.6"/><polyline points="423.5,199.9 423.5,211.5" stroke-width="1.6"/><polyline points="433.5,199.9 433.5,211.5" stroke-width="1.6"/><rect x="448.1" y="199.9" width="20.4" height="11.6" stroke-width="1.6"/><polyline points="453.3,199.9 453.3,211.5" stroke-width="1.6"/><polyline points="463.3,199.9 463.3,211.5" stroke-width="1.6"/><rect x="529.2" y="199.9" width="20.4" height="11.6" stroke-width="1.6"/><polyline points="534.4,199.9 534.4,211.5" stroke-width="1.6"/><polyline points="544.4,199.9 544.4,211.5" stroke-width="1.6"/><rect x="558.9" y="199.9" width="20.4" height="11.6" stroke-width="1.6"/><polyline points="564.1,199.9 564.1,211.5" stroke-width="1.6"/><polyline points="574.1,199.9 574.1,211.5" stroke-width="1.6"/><rect x="589.0" y="199.9" width="20.4" height="11.6" stroke-width="1.6"/><polyline points="594.2,199.9 594.2,211.5" stroke-width="1.6"/><polyline points="604.2,199.9 604.2,211.5" stroke-width="1.6"/><rect x="619.8" y="199.9" width="20.4" height="11.6" stroke-width="1.6"/><polyline points="625.0,199.9 625.0,211.5" stroke-width="1.6"/><polyline points="635.0,199.9 635.0,211.5" stroke-width="1.6"/><rect x="650.0" y="199.9" width="20.4" height="11.6" stroke-width="1.6"/><polyline points="655.2,199.9 655.2,211.5" stroke-width="1.6"/><polyline points="665.2,199.9 665.2,211.5" stroke-width="1.6"/><rect x="680.2" y="199.9" width="20.4" height="11.6" stroke-width="1.6"/><polyline points="685.4,199.9 685.4,211.5" stroke-width="1.6"/><polyline points="695.4,199.9 695.4,211.5" stroke-width="1.6"/><rect x="728.5" y="152.5" width="127.5" height="126.5" stroke-width="2.2"/><polygon points="745.5,165.5 839.5,165.5 842.5,168.5 842.5,263 839.5,266 745.5,266 742.5,263 742.5,168.5" stroke-width="2"/><circle cx="834.3" cy="253.6" r="2.2" stroke-width="1.6"/><rect x="251.5" y="265.5" width="20.4" height="11.6" stroke-width="1.6"/><polyline points="256.7,265.5 256.7,277.1" stroke-width="1.6"/><polyline points="266.7,265.5 266.7,277.1" stroke-width="1.6"/><rect x="302.4" y="265.5" width="20.4" height="11.6" stroke-width="1.6"/><polyline points="307.6,265.5 307.6,277.1" stroke-width="1.6"/><polyline points="317.6,265.5 317.6,277.1" stroke-width="1.6"/><rect x="278.8" y="280.7" width="15.6" height="31.0" stroke-width="1.6"/><polyline points="278.8,290.7 294.4,290.7" stroke-width="1.6"/><polyline points="278.8,301.7 294.4,301.7" stroke-width="1.6"/><rect x="286.6" y="324.3" width="32.0" height="15.6" stroke-width="1.6"/><polyline points="295.6,324.3 295.6,339.9" stroke-width="1.6"/><polyline points="309.6,324.3 309.6,339.9" stroke-width="1.6"/><rect x="331.4" y="332.3" width="11.6" height="20.4" stroke-width="1.6"/><polyline points="331.4,337.5 343.0,337.5" stroke-width="1.6"/><polyline points="331.4,347.5 343.0,347.5" stroke-width="1.6"/><rect x="351.6" y="347.0" width="11.6" height="20.4" stroke-width="1.6"/><polyline points="351.6,352.2 363.2,352.2" stroke-width="1.6"/><polyline points="351.6,362.2 363.2,362.2" stroke-width="1.6"/><rect x="278.8" y="230.3" width="15.6" height="31.0" stroke-width="1.6"/><polyline points="278.8,240.3 294.4,240.3" stroke-width="1.6"/><polyline points="278.8,251.3 294.4,251.3" stroke-width="1.6"/><rect x="460.5" y="230.6" width="15.6" height="31.0" stroke-width="1.6"/><polyline points="460.5,240.6 476.1,240.6" stroke-width="1.6"/><polyline points="460.5,251.6 476.1,251.6" stroke-width="1.6"/><rect x="433.6" y="255.4" width="20.4" height="11.6" stroke-width="1.6"/><polyline points="438.8,255.4 438.8,267.0" stroke-width="1.6"/><polyline points="448.8,255.4 448.8,267.0" stroke-width="1.6"/><rect x="423.0" y="273.2" width="31.0" height="15.6" stroke-width="1.6"/><polyline points="431.5,273.2 431.5,288.8" stroke-width="1.6"/><polyline points="445.5,273.2 445.5,288.8" stroke-width="1.6"/><rect x="467.9" y="270.5" width="20.4" height="11.6" stroke-width="1.6"/><polyline points="473.1,270.5 473.1,282.1" stroke-width="1.6"/><polyline points="483.1,270.5 483.1,282.1" stroke-width="1.6"/><rect x="437.5" y="313.7" width="31.1" height="15.1" stroke-width="1.6"/><rect x="492.9" y="303.9" width="32.0" height="15.0" stroke-width="1.6"/><polyline points="501.9,303.9 501.9,318.9" stroke-width="1.6"/><polyline points="515.9,303.9 515.9,318.9" stroke-width="1.6"/><rect x="546.5" y="290.7" width="16.0" height="31.6" stroke-width="1.6"/><polyline points="546.5,301.0 562.5,301.0" stroke-width="1.6"/><polyline points="546.5,312.0 562.5,312.0" stroke-width="1.6"/><rect x="591.2" y="305.4" width="16.0" height="31.6" stroke-width="1.6"/><polyline points="591.2,315.7 607.2,315.7" stroke-width="1.6"/><polyline points="591.2,326.7 607.2,326.7" stroke-width="1.6"/><rect x="477.6" y="327.3" width="11.6" height="20.4" stroke-width="1.6"/><polyline points="477.6,332.5 489.2,332.5" stroke-width="1.6"/><polyline points="477.6,342.5 489.2,342.5" stroke-width="1.6"/><rect x="442.4" y="346.0" width="20.4" height="11.6" stroke-width="1.6"/><polyline points="447.6,346.0 447.6,357.6" stroke-width="1.6"/><polyline points="457.6,346.0 457.6,357.6" stroke-width="1.6"/><rect x="503.8" y="337.1" width="20.4" height="11.6" stroke-width="1.6"/><polyline points="509.0,337.1 509.0,348.7" stroke-width="1.6"/><polyline points="519.0,337.1 519.0,348.7" stroke-width="1.6"/><rect x="751.3" y="300.4" width="20.4" height="11.6" stroke-width="1.6"/><polyline points="756.5,300.4 756.5,312.0" stroke-width="1.6"/><polyline points="766.5,300.4 766.5,312.0" stroke-width="1.6"/><rect x="781.1" y="300.4" width="20.4" height="11.6" stroke-width="1.6"/><polyline points="786.3,300.4 786.3,312.0" stroke-width="1.6"/><polyline points="796.3,300.4 796.3,312.0" stroke-width="1.6"/><rect x="781.1" y="321.0" width="20.4" height="11.6" stroke-width="1.6"/><polyline points="786.3,321.0 786.3,332.6" stroke-width="1.6"/><polyline points="796.3,321.0 796.3,332.6" stroke-width="1.6"/><rect x="644.4" y="251.5" width="11.6" height="20.4" stroke-width="1.6"/><polyline points="644.4,256.7 656.0,256.7" stroke-width="1.6"/><polyline points="644.4,266.7 656.0,266.7" stroke-width="1.6"/><rect x="644.4" y="280.9" width="11.6" height="20.4" stroke-width="1.6"/><polyline points="644.4,286.1 656.0,286.1" stroke-width="1.6"/><polyline points="644.4,296.1 656.0,296.1" stroke-width="1.6"/><rect x="644.8" y="221.1" width="11.6" height="20.4" stroke-width="1.6"/><polyline points="644.8,226.3 656.4,226.3" stroke-width="1.6"/><polyline points="644.8,236.3 656.4,236.3" stroke-width="1.6"/><rect x="665.5" y="270.6" width="20.4" height="11.6" stroke-width="1.6"/><polyline points="670.7,270.6 670.7,282.2" stroke-width="1.6"/><polyline points="680.7,270.6 680.7,282.2" stroke-width="1.6"/><rect x="670.2" y="295.5" width="20.4" height="11.6" stroke-width="1.6"/><polyline points="675.4,295.5 675.4,307.1" stroke-width="1.6"/><polyline points="685.4,295.5 685.4,307.1" stroke-width="1.6"/><rect x="670.2" y="321.0" width="20.4" height="11.6" stroke-width="1.6"/><polyline points="675.4,321.0 675.4,332.6" stroke-width="1.6"/><polyline points="685.4,321.0 685.4,332.6" stroke-width="1.6"/><rect x="624.6" y="301.1" width="11.6" height="20.4" stroke-width="1.6"/><polyline points="624.6,306.3 636.2,306.3" stroke-width="1.6"/><polyline points="624.6,316.3 636.2,316.3" stroke-width="1.6"/><rect x="649.5" y="311.1" width="11.6" height="20.4" stroke-width="1.6"/><polyline points="649.5,316.3 661.1,316.3" stroke-width="1.6"/><polyline points="649.5,326.3 661.1,326.3" stroke-width="1.6"/><rect x="620.2" y="331.0" width="20.4" height="11.6" stroke-width="1.6"/><polyline points="625.4,331.0 625.4,342.6" stroke-width="1.6"/><polyline points="635.4,331.0 635.4,342.6" stroke-width="1.6"/><path d="M647.3 351.3V359.5" stroke-width="2.2"/><path d="M654.3 351.3V359.5" stroke-width="2.2"/><path d="M660.7 351.3V359.5" stroke-width="2.2"/><path d="M667.2 351.3V359.5" stroke-width="2.2"/><path d="M673.7 351.3V359.5" stroke-width="2.2"/><path d="M680.7 351.3V359.5" stroke-width="2.2"/><path d="M687.1 351.3V359.5" stroke-width="2.2"/><path d="M693.6 351.3V359.5" stroke-width="2.2"/><rect x="710.7" y="331.4" width="20.4" height="11.6" stroke-width="1.6"/><polyline points="715.9,331.4 715.9,343.0" stroke-width="1.6"/><polyline points="725.9,331.4 725.9,343.0" stroke-width="1.6"/><rect x="745.7" y="337.0" width="11.6" height="20.4" stroke-width="1.6"/><polyline points="745.7,342.2 757.3,342.2" stroke-width="1.6"/><polyline points="745.7,352.2 757.3,352.2" stroke-width="1.6"/><rect x="710.7" y="351.7" width="20.4" height="11.6" stroke-width="1.6"/><polyline points="715.9,351.7 715.9,363.3" stroke-width="1.6"/><polyline points="725.9,351.7 725.9,363.3" stroke-width="1.6"/><rect x="710.7" y="372.5" width="20.4" height="11.6" stroke-width="1.6"/><polyline points="715.9,372.5 715.9,384.1" stroke-width="1.6"/><polyline points="725.9,372.5 725.9,384.1" stroke-width="1.6"/><rect x="740.9" y="372.5" width="20.4" height="11.6" stroke-width="1.6"/><polyline points="746.1,372.5 746.1,384.1" stroke-width="1.6"/><polyline points="756.1,372.5 756.1,384.1" stroke-width="1.6"/><rect x="785.5" y="373.8" width="11.6" height="20.4" stroke-width="1.6"/><polyline points="785.5,379.0 797.1,379.0" stroke-width="1.6"/><polyline points="785.5,389.0 797.1,389.0" stroke-width="1.6"/><rect x="883.0" y="230.9" width="20.4" height="11.6" stroke-width="1.6"/><polyline points="888.2,230.9 888.2,242.5" stroke-width="1.6"/><polyline points="898.2,230.9 898.2,242.5" stroke-width="1.6"/><rect x="875.7" y="254.5" width="11.6" height="20.4" stroke-width="1.6"/><polyline points="875.7,259.7 887.3,259.7" stroke-width="1.6"/><polyline points="875.7,269.7 887.3,269.7" stroke-width="1.6"/><rect x="872.8" y="290.8" width="20.4" height="11.6" stroke-width="1.6"/><polyline points="878.0,290.8 878.0,302.4" stroke-width="1.6"/><polyline points="888.0,290.8 888.0,302.4" stroke-width="1.6"/><rect x="885.4" y="310.7" width="15.6" height="31.0" stroke-width="1.6"/><polyline points="885.4,320.7 901.0,320.7" stroke-width="1.6"/><polyline points="885.4,331.7 901.0,331.7" stroke-width="1.6"/><rect x="262.6" y="358.7" width="77.7" height="26.4" stroke-width="1.6"/><rect x="262.6" y="385.1" width="77.7" height="13.2" stroke-width="1.6"/><rect x="472.4" y="356.2" width="73.3" height="52.2" rx="4" stroke-width="2.4"/><rect x="480.5" y="371.3" width="57.1" height="31.7" rx="4" stroke-width="2.4"/><circle cx="488.6" cy="394.2" r="2.3" stroke-width="1.6"/><rect x="561.5" y="328.7" width="16.0" height="33.0" stroke-width="1.6"/><path d="M564.3 339.1A7.5 7.5 0 0 1 564.3 356.0" stroke-width="1.6"/><rect x="599.4" y="351.7" width="20.4" height="11.6" stroke-width="1.6"/><polyline points="604.6,351.7 604.6,363.3" stroke-width="1.6"/><polyline points="614.6,351.7 614.6,363.3" stroke-width="1.6"/><rect x="564.5" y="376.7" width="20.4" height="11.6" stroke-width="1.6"/><polyline points="569.7,376.7 569.7,388.3" stroke-width="1.6"/><polyline points="579.7,376.7 579.7,388.3" stroke-width="1.6"/><rect x="605.1" y="386.5" width="20.4" height="11.6" stroke-width="1.6"/><polyline points="610.3,386.5 610.3,398.1" stroke-width="1.6"/><polyline points="620.3,386.5 620.3,398.1" stroke-width="1.6"/><rect x="578.4" y="403.1" width="11.6" height="19.0" stroke-width="1.6"/><polyline points="578.4,407.6 590.0,407.6" stroke-width="1.6"/><polyline points="578.4,417.6 590.0,417.6" stroke-width="1.6"/><rect x="624.9" y="426.7" width="20.4" height="11.6" stroke-width="1.6"/><polyline points="630.1,426.7 630.1,438.3" stroke-width="1.6"/><polyline points="640.1,426.7 640.1,438.3" stroke-width="1.6"/><rect x="643.7" y="359.5" width="52.6" height="45.2" stroke-width="2.2"/><path d="M695.8 376.8A5.3 5.3 0 0 0 695.8 387.5" stroke-width="1.6"/><path d="M647.3 404.7V413.3" stroke-width="2.2"/><path d="M654.3 404.7V413.3" stroke-width="2.2"/><path d="M660.7 404.7V413.3" stroke-width="2.2"/><path d="M667.2 404.7V413.3" stroke-width="2.2"/><path d="M673.7 404.7V413.3" stroke-width="2.2"/><path d="M680.7 404.7V413.3" stroke-width="2.2"/><path d="M687.1 404.7V413.3" stroke-width="2.2"/><path d="M693.6 404.7V413.3" stroke-width="2.2"/><rect x="710.7" y="351.7" width="20.4" height="11.6" stroke-width="1.6"/><polyline points="715.9,351.7 715.9,363.3" stroke-width="1.6"/><polyline points="725.9,351.7 725.9,363.3" stroke-width="1.6"/><rect x="710.7" y="371.9" width="20.4" height="11.6" stroke-width="1.6"/><polyline points="715.9,371.9 715.9,383.5" stroke-width="1.6"/><polyline points="725.9,371.9 725.9,383.5" stroke-width="1.6"/><rect x="740.9" y="371.9" width="20.4" height="11.6" stroke-width="1.6"/><polyline points="746.1,371.9 746.1,383.5" stroke-width="1.6"/><polyline points="756.1,371.9 756.1,383.5" stroke-width="1.6"/><rect x="710.7" y="391.7" width="20.4" height="11.6" stroke-width="1.6"/><polyline points="715.9,391.7 715.9,403.3" stroke-width="1.6"/><polyline points="725.9,391.7 725.9,403.3" stroke-width="1.6"/><rect x="740.9" y="391.7" width="20.4" height="11.6" stroke-width="1.6"/><polyline points="746.1,391.7 746.1,403.3" stroke-width="1.6"/><polyline points="756.1,391.7 756.1,403.3" stroke-width="1.6"/><rect x="710.7" y="411.6" width="20.4" height="11.6" stroke-width="1.6"/><polyline points="715.9,411.6 715.9,423.2" stroke-width="1.6"/><polyline points="725.9,411.6 725.9,423.2" stroke-width="1.6"/><rect x="740.9" y="411.6" width="20.4" height="11.6" stroke-width="1.6"/><polyline points="746.1,411.6 746.1,423.2" stroke-width="1.6"/><polyline points="756.1,411.6 756.1,423.2" stroke-width="1.6"/><rect x="785.5" y="377.0" width="11.6" height="20.4" stroke-width="1.6"/><polyline points="785.5,382.2 797.1,382.2" stroke-width="1.6"/><polyline points="785.5,392.2 797.1,392.2" stroke-width="1.6"/><rect x="783.2" y="411.3" width="16.0" height="32.1" stroke-width="1.6"/><rect x="816.5" y="427.9" width="11.6" height="20.4" stroke-width="1.6"/><polyline points="816.5,433.1 828.1,433.1" stroke-width="1.6"/><polyline points="816.5,443.1 828.1,443.1" stroke-width="1.6"/><rect x="834.5" y="422.6" width="15.6" height="31.0" stroke-width="1.6"/><polyline points="834.5,432.6 850.1,432.6" stroke-width="1.6"/><polyline points="834.5,443.6 850.1,443.6" stroke-width="1.6"/><rect x="801.3" y="462.9" width="20.4" height="11.6" stroke-width="1.6"/><polyline points="806.5,462.9 806.5,474.5" stroke-width="1.6"/><polyline points="816.5,462.9 816.5,474.5" stroke-width="1.6"/><rect x="755.4" y="450.5" width="31.0" height="16.0" stroke-width="1.6"/><polyline points="764.4,450.5 764.4,466.5" stroke-width="1.6"/><polyline points="777.4,450.5 777.4,466.5" stroke-width="1.6"/><rect x="725.5" y="439.0" width="11.6" height="19.0" stroke-width="1.6"/><polyline points="725.5,443.5 737.1,443.5" stroke-width="1.6"/><polyline points="725.5,453.5 737.1,453.5" stroke-width="1.6"/><rect x="690.9" y="452.7" width="20.4" height="11.6" stroke-width="1.6"/><polyline points="696.1,452.7 696.1,464.3" stroke-width="1.6"/><polyline points="706.1,452.7 706.1,464.3" stroke-width="1.6"/><rect x="624.6" y="458.1" width="11.6" height="20.4" stroke-width="1.6"/><polyline points="624.6,463.3 636.2,463.3" stroke-width="1.6"/><polyline points="624.6,473.3 636.2,473.3" stroke-width="1.6"/><rect x="644.4" y="458.1" width="11.6" height="20.4" stroke-width="1.6"/><polyline points="644.4,463.3 656.0,463.3" stroke-width="1.6"/><polyline points="644.4,473.3 656.0,473.3" stroke-width="1.6"/><rect x="664.2" y="458.1" width="11.6" height="20.4" stroke-width="1.6"/><polyline points="664.2,463.3 675.8,463.3" stroke-width="1.6"/><polyline points="664.2,473.3 675.8,473.3" stroke-width="1.6"/><rect x="378.6" y="563.7" width="20.4" height="11.6" stroke-width="1.6"/><polyline points="383.8,563.7 383.8,575.3" stroke-width="1.6"/><polyline points="393.8,563.7 393.8,575.3" stroke-width="1.6"/><rect x="453.1" y="576.1" width="52.1" height="26.7" stroke-width="2.2"/><polyline points="427.6,588.9 453.1,588.9" stroke-width="3.4"/><polyline points="505.2,588.9 529.9,588.9" stroke-width="3.4"/><rect x="490.2" y="576.1" width="2.9" height="26.7" fill="#00a0a0" stroke="none"/><circle cx="609.0" cy="599.5" r="50.4" stroke-width="2.6"/><rect x="412.8" y="511.6" width="32.0" height="15.0" stroke-width="1.6"/><polyline points="421.8,511.6 421.8,526.6" stroke-width="1.6"/><polyline points="435.8,511.6 435.8,526.6" stroke-width="1.6"/><rect x="462.5" y="511.6" width="32.0" height="15.0" stroke-width="1.6"/><polyline points="471.5,511.6 471.5,526.6" stroke-width="1.6"/><polyline points="485.5,511.6 485.5,526.6" stroke-width="1.6"/><rect x="463.5" y="539.7" width="9.7" height="19.4" stroke-width="1.6"/><rect x="494.3" y="539.7" width="9.7" height="19.4" stroke-width="1.6"/><rect x="478.5" y="546.3" width="10.2" height="5.6" stroke-width="1.2"/><rect x="523.6" y="539.4" width="11.6" height="19.0" stroke-width="1.6"/><polyline points="523.6,543.9 535.2,543.9" stroke-width="1.6"/><polyline points="523.6,553.9 535.2,553.9" stroke-width="1.6"/><rect x="459.6" y="612.5" width="77.6" height="37.6" stroke-width="1.8"/><polyline points="459.6,637.4 537.2,637.4" stroke-width="1.6"/><rect x="548.6" y="610.7" width="11.6" height="19.0" stroke-width="1.6"/><polyline points="548.6,615.2 560.2,615.2" stroke-width="1.6"/><polyline points="548.6,625.2 560.2,625.2" stroke-width="1.6"/><polyline points="540.3,599.6 550.0,599.6" stroke-width="2"/><polyline points="545.2,594.8 545.2,604.5" stroke-width="2"/><rect x="711.2" y="553.0" width="39.9" height="51.7" stroke-width="2"/><rect x="741.6" y="533.2" width="19.0" height="11.0" stroke-width="1.6"/><polyline points="746.1,533.2 746.1,544.2" stroke-width="1.6"/><polyline points="756.1,533.2 756.1,544.2" stroke-width="1.6"/><rect x="771.8" y="503.6" width="19.0" height="11.0" stroke-width="1.6"/><polyline points="776.3,503.6 776.3,514.6" stroke-width="1.6"/><polyline points="786.3,503.6 786.3,514.6" stroke-width="1.6"/><rect x="745.6" y="490.1" width="11.0" height="18.0" stroke-width="1.6"/><polyline points="745.6,494.1 756.6,494.1" stroke-width="1.6"/><polyline points="745.6,504.1 756.6,504.1" stroke-width="1.6"/><rect x="693.7" y="474.0" width="14.8" height="28.8" stroke-width="1.6"/><rect x="794.1" y="483.4" width="19.0" height="11.0" stroke-width="1.6"/><polyline points="798.6,483.4 798.6,494.4" stroke-width="1.6"/><polyline points="808.6,483.4 808.6,494.4" stroke-width="1.6"/><rect x="804.1" y="564.2" width="19.0" height="11.0" stroke-width="1.6"/><polyline points="808.6,564.2 808.6,575.2" stroke-width="1.6"/><polyline points="818.6,564.2 818.6,575.2" stroke-width="1.6"/><rect x="804.1" y="583.0" width="19.0" height="11.0" stroke-width="1.6"/><polyline points="808.6,583.0 808.6,594.0" stroke-width="1.6"/><polyline points="818.6,583.0 818.6,594.0" stroke-width="1.6"/><rect x="807.1" y="612.0" width="28.0" height="14.0" stroke-width="1.6"/><polyline points="815.1,612.0 815.1,626.0" stroke-width="1.6"/><polyline points="827.1,612.0 827.1,626.0" stroke-width="1.6"/><rect x="706.6" y="613.5" width="19.0" height="11.0" stroke-width="1.6"/><polyline points="711.1,613.5 711.1,624.5" stroke-width="1.6"/><polyline points="721.1,613.5 721.1,624.5" stroke-width="1.6"/><rect x="741.6" y="613.5" width="19.0" height="11.0" stroke-width="1.6"/><polyline points="746.1,613.5 746.1,624.5" stroke-width="1.6"/><polyline points="756.1,613.5 756.1,624.5" stroke-width="1.6"/><rect x="666.2" y="598.4" width="19.0" height="11.0" stroke-width="1.6"/><polyline points="670.7,598.4 670.7,609.4" stroke-width="1.6"/><polyline points="680.7,598.4 680.7,609.4" stroke-width="1.6"/></g>
<g fill="none" stroke="#9a9a9a"><polyline points="440.0,313.7 440.0,306.5 445.3,306.5 445.3,313.7" stroke-width="1.6"/><polyline points="450.0,313.7 450.0,306.5 455.3,306.5 455.3,313.7" stroke-width="1.6"/><polyline points="460.0,313.7 460.0,306.5 466.0,306.5 466.0,313.7" stroke-width="1.6"/><polyline points="440.0,328.8 440.0,337.3 445.3,337.3 445.3,328.8" stroke-width="1.6"/><polyline points="450.0,328.8 450.0,337.3 455.3,337.3 455.3,328.8" stroke-width="1.6"/><polyline points="561.5,331.5 554.3,331.5 554.3,336.0 561.5,336.0" stroke-width="1.3"/><polyline points="561.5,338.5 554.3,338.5 554.3,343.0 561.5,343.0" stroke-width="1.3"/><polyline points="561.5,345.7 554.3,345.7 554.3,350.2 561.5,350.2" stroke-width="1.3"/><polyline points="561.5,352.8 554.3,352.8 554.3,357.4 561.5,357.4" stroke-width="1.3"/><polyline points="783.2,414.2 775.7,414.2 775.7,420.6 783.2,420.6" stroke-width="1.3"/><polyline points="799.2,414.2 806.4,414.2 806.4,420.6 799.2,420.6" stroke-width="1.3"/><polyline points="783.2,434.9 775.7,434.9 775.7,441.3 783.2,441.3" stroke-width="1.3"/><polyline points="799.2,434.9 806.4,434.9 806.4,441.3 799.2,441.3" stroke-width="1.3"/><polyline points="693.7,475.9 684.8,475.9 684.8,481.6 693.7,481.6" stroke-width="1.2"/><polyline points="693.7,494.8 684.8,494.8 684.8,500.4 693.7,500.4" stroke-width="1.2"/><polyline points="708.5,486.2 715.3,486.2 715.3,491.0 708.5,491.0" stroke-width="1.2"/></g>
<g stroke-width="1" fill="none"><path d="M233.7 175.7H238.7M236.2 173.2V178.2" stroke="#0000c8"/><path d="M253.89999999999998 175.7H258.9M256.4 173.2V178.2" stroke="#0000c8"/><path d="M243.5 205.7H248.5M246.0 203.2V208.2" stroke="#0000c8"/><path d="M273.7 205.7H278.7M276.2 203.2V208.2" stroke="#0000c8"/><path d="M354.9 205.7H359.9M357.4 203.2V208.2" stroke="#0000c8"/><path d="M221.1 192.1H226.1M223.6 189.6V194.6" stroke="#0000c8"/><path d="M273.9 218.1H278.9M276.4 215.6V220.6" stroke="#0000c8"/><path d="M314.9 193.0H319.9M317.4 190.5V195.5" stroke="#0000c8"/><path d="M354.9 218.1H359.9M357.4 215.6V220.6" stroke="#0000c8"/><path d="M296.9 246.0H301.9M299.4 243.5V248.5" stroke="#0000c8"/><path d="M310.1 257.7H315.1M312.6 255.2V260.2" stroke="#0000c8"/><path d="M392.2 192.1H397.2M394.7 189.6V194.6" stroke="#0000c8"/><path d="M425.6 218.1H430.6M428.1 215.6V220.6" stroke="#0000c8"/><path d="M314.9 185.1H319.9M317.4 182.6V187.6" stroke="#0000c8"/><path d="M374.9 186.0H379.9M377.4 183.5V188.5" stroke="#0000c8"/><path d="M395.0 186.0H400.0M397.5 183.5V188.5" stroke="#0000c8"/><path d="M203.9 205.7H208.9M206.4 203.2V208.2" stroke="#a000a0"/><path d="M395.0 205.7H400.0M397.5 203.2V208.2" stroke="#a000a0"/><path d="M413.0 192.1H418.0M415.5 189.6V194.6" stroke="#a000a0"/><path d="M416.0 175.7H421.0M418.5 173.2V178.2" stroke="#0000c8"/><path d="M436.0 175.7H441.0M438.5 173.2V178.2" stroke="#0000c8"/><path d="M556.7 175.7H561.7M559.2 173.2V178.2" stroke="#0000c8"/><path d="M576.9 175.7H581.9M579.4 173.2V178.2" stroke="#0000c8"/><path d="M426.0 205.7H431.0M428.5 203.2V208.2" stroke="#0000c8"/><path d="M455.8 205.7H460.8M458.3 203.2V208.2" stroke="#0000c8"/><path d="M536.9 205.7H541.9M539.4 203.2V208.2" stroke="#0000c8"/><path d="M566.6 205.7H571.6M569.1 203.2V208.2" stroke="#0000c8"/><path d="M596.7 205.7H601.7M599.2 203.2V208.2" stroke="#0000c8"/><path d="M392.2 192.1H397.2M394.7 189.6V194.6" stroke="#0000c8"/><path d="M426.0 218.1H431.0M428.5 215.6V220.6" stroke="#0000c8"/><path d="M455.8 218.1H460.8M458.3 215.6V220.6" stroke="#0000c8"/><path d="M447.7 175.1H452.7M450.2 172.6V177.6" stroke="#0000c8"/><path d="M495.8 193.0H500.8M498.3 190.5V195.5" stroke="#0000c8"/><path d="M536.9 218.1H541.9M539.4 215.6V220.6" stroke="#0000c8"/><path d="M566.6 218.1H571.6M569.1 215.6V220.6" stroke="#0000c8"/><path d="M596.7 218.1H601.7M599.2 215.6V220.6" stroke="#0000c8"/><path d="M479.4 246.0H484.4M481.9 243.5V248.5" stroke="#0000c8"/><path d="M441.7 248.3H446.7M444.2 245.8V250.8" stroke="#0000c8"/><path d="M590.7 175.1H595.7M593.2 172.6V177.6" stroke="#0000c8"/><path d="M627.5 205.7H632.5M630.0 203.2V208.2" stroke="#0000c8"/><path d="M657.7 205.7H662.7M660.2 203.2V208.2" stroke="#0000c8"/><path d="M687.9 205.7H692.9M690.4 203.2V208.2" stroke="#0000c8"/><path d="M627.5 218.1H632.5M630.0 215.6V220.6" stroke="#0000c8"/><path d="M657.7 218.1H662.7M660.2 215.6V220.6" stroke="#0000c8"/><path d="M687.9 218.1H692.9M690.4 215.6V220.6" stroke="#0000c8"/><path d="M660.9 231.3H665.9M663.4 228.8V233.8" stroke="#0000c8"/><path d="M789.5 215.5H794.5M792.0 213.0V218.0" stroke="#0000c8"/><path d="M259.2 271.3H264.2M261.7 268.8V273.8" stroke="#0000c8"/><path d="M310.1 271.3H315.1M312.6 268.8V273.8" stroke="#0000c8"/><path d="M284.1 296.2H289.1M286.6 293.7V298.7" stroke="#0000c8"/><path d="M300.1 332.1H305.1M302.6 329.6V334.6" stroke="#0000c8"/><path d="M334.7 342.5H339.7M337.2 340.0V345.0" stroke="#0000c8"/><path d="M354.9 357.2H359.9M357.4 354.7V359.7" stroke="#0000c8"/><path d="M258.8 284.0H263.8M261.3 281.5V286.5" stroke="#0000c8"/><path d="M310.1 257.9H315.1M312.6 255.39999999999998V260.4" stroke="#0000c8"/><path d="M284.1 295.8H289.1M286.6 293.3V298.3" stroke="#0000c8"/><path d="M271.8 295.8H276.8M274.3 293.3V298.3" stroke="#0000c8"/><path d="M300.1 319.4H305.1M302.6 316.9V321.9" stroke="#0000c8"/><path d="M300.1 332.1H305.1M302.6 329.6V334.6" stroke="#0000c8"/><path d="M321.5 342.5H326.5M324.0 340.0V345.0" stroke="#0000c8"/><path d="M334.7 342.5H339.7M337.2 340.0V345.0" stroke="#0000c8"/><path d="M354.9 357.2H359.9M357.4 354.7V359.7" stroke="#0000c8"/><path d="M310.1 284.3H315.1M312.6 281.8V286.8" stroke="#0000c8"/><path d="M238.4 383.6H243.4M240.9 381.1V386.1" stroke="#0000c8"/><path d="M359.6 383.6H364.6M362.1 381.1V386.1" stroke="#0000c8"/><path d="M284.1 245.8H289.1M286.6 243.3V248.3" stroke="#0000c8"/><path d="M296.9 246.1H301.9M299.4 243.6V248.6" stroke="#0000c8"/><path d="M309.8 258.2H314.8M312.3 255.7V260.7" stroke="#0000c8"/><path d="M465.8 246.1H470.8M468.3 243.6V248.6" stroke="#0000c8"/><path d="M441.3 261.2H446.3M443.8 258.7V263.7" stroke="#0000c8"/><path d="M436.0 281.0H441.0M438.5 278.5V283.5" stroke="#0000c8"/><path d="M475.6 276.3H480.6M478.1 273.8V278.8" stroke="#0000c8"/><path d="M451.1 321.6H456.1M453.6 319.1V324.1" stroke="#0000c8"/><path d="M506.4 311.4H511.4M508.9 308.9V313.9" stroke="#0000c8"/><path d="M552.0 306.5H557.0M554.5 304.0V309.0" stroke="#0000c8"/><path d="M596.7 321.2H601.7M599.2 318.7V323.7" stroke="#0000c8"/><path d="M480.9 337.5H485.9M483.4 335.0V340.0" stroke="#0000c8"/><path d="M450.1 351.8H455.1M452.6 349.3V354.3" stroke="#0000c8"/><path d="M511.5 342.9H516.5M514.0 340.4V345.4" stroke="#0000c8"/><path d="M479.0 246.1H484.0M481.5 243.6V248.6" stroke="#0000c8"/><path d="M475.6 263.7H480.6M478.1 261.2V266.2" stroke="#0000c8"/><path d="M436.0 281.0H441.0M438.5 278.5V283.5" stroke="#0000c8"/><path d="M475.6 276.3H480.6M478.1 273.8V278.8" stroke="#0000c8"/><path d="M492.6 297.6H497.6M495.1 295.1V300.1" stroke="#0000c8"/><path d="M506.7 299.0H511.7M509.2 296.5V301.5" stroke="#0000c8"/><path d="M506.4 311.4H511.4M508.9 308.9V313.9" stroke="#0000c8"/><path d="M552.0 306.5H557.0M554.5 304.0V309.0" stroke="#0000c8"/><path d="M538.8 306.1H543.8M541.3 303.6V308.6" stroke="#0000c8"/><path d="M596.7 321.2H601.7M599.2 318.7V323.7" stroke="#0000c8"/><path d="M585.0 321.2H590.0M587.5 318.7V323.7" stroke="#0000c8"/><path d="M480.9 337.5H485.9M483.4 335.0V340.0" stroke="#0000c8"/><path d="M493.5 337.5H498.5M496.0 335.0V340.0" stroke="#0000c8"/><path d="M511.5 342.9H516.5M514.0 340.4V345.4" stroke="#0000c8"/><path d="M511.79999999999995 328.8H516.8M514.3 326.3V331.3" stroke="#0000c8"/><path d="M450.1 351.8H455.1M452.6 349.3V354.3" stroke="#0000c8"/><path d="M614.9 311.4H619.9M617.4 308.9V313.9" stroke="#0000c8"/><path d="M759.0 306.2H764.0M761.5 303.7V308.7" stroke="#0000c8"/><path d="M788.8 306.2H793.8M791.3 303.7V308.7" stroke="#0000c8"/><path d="M788.8 326.8H793.8M791.3 324.3V329.3" stroke="#0000c8"/><path d="M647.7 261.7H652.7M650.2 259.2V264.2" stroke="#0000c8"/><path d="M647.7 291.1H652.7M650.2 288.6V293.6" stroke="#0000c8"/><path d="M648.1 231.3H653.1M650.6 228.8V233.8" stroke="#0000c8"/><path d="M673.2 276.4H678.2M675.7 273.9V278.9" stroke="#0000c8"/><path d="M677.9 301.3H682.9M680.4 298.8V303.8" stroke="#0000c8"/><path d="M677.9 326.8H682.9M680.4 324.3V329.3" stroke="#0000c8"/><path d="M627.9 311.3H632.9M630.4 308.8V313.8" stroke="#0000c8"/><path d="M652.8 321.3H657.8M655.3 318.8V323.8" stroke="#0000c8"/><path d="M627.9 336.8H632.9M630.4 334.3V339.3" stroke="#0000c8"/><path d="M718.4 337.2H723.4M720.9 334.7V339.7" stroke="#0000c8"/><path d="M749.0 347.2H754.0M751.5 344.7V349.7" stroke="#0000c8"/><path d="M718.4 357.5H723.4M720.9 355.0V360.0" stroke="#0000c8"/><path d="M718.4 378.3H723.4M720.9 375.8V380.8" stroke="#0000c8"/><path d="M748.6 378.3H753.6M751.1 375.8V380.8" stroke="#0000c8"/><path d="M788.8 384.0H793.8M791.3 381.5V386.5" stroke="#0000c8"/><path d="M634.9 290.6H639.9M637.4 288.1V293.1" stroke="#0000c8"/><path d="M677.9 314.2H682.9M680.4 311.7V316.7" stroke="#0000c8"/><path d="M759.0 318.9H764.0M761.5 316.4V321.4" stroke="#0000c8"/><path d="M788.8 294.3H793.8M791.3 291.8V296.8" stroke="#0000c8"/><path d="M788.8 339.1H793.8M791.3 336.6V341.6" stroke="#0000c8"/><path d="M735.4 347.2H740.4M737.9 344.7V349.7" stroke="#0000c8"/><path d="M749.0 364.2H754.0M751.5 361.7V366.7" stroke="#0000c8"/><path d="M667.5 369.2H672.5M670.0 366.7V371.7" stroke="#0000c8"/><path d="M667.5 382.1H672.5M670.0 379.6V384.6" stroke="#0000c8"/><path d="M776.9 386.8H781.9M779.4 384.3V389.3" stroke="#0000c8"/><path d="M760.9 347.2H765.9M763.4 344.7V349.7" stroke="#0000c8"/><path d="M890.7 236.7H895.7M893.2 234.2V239.2" stroke="#0000c8"/><path d="M879.0 264.7H884.0M881.5 262.2V267.2" stroke="#0000c8"/><path d="M880.5 296.6H885.5M883.0 294.1V299.1" stroke="#0000c8"/><path d="M890.7 326.2H895.7M893.2 323.7V328.7" stroke="#0000c8"/><path d="M890.3 222.6H895.3M892.8 220.1V225.1" stroke="#0000c8"/><path d="M866.5 265.8H871.5M869.0 263.3V268.3" stroke="#0000c8"/><path d="M879.5 308.9H884.5M882.0 306.4V311.4" stroke="#0000c8"/><path d="M902.8 326.2H907.8M905.3 323.7V328.7" stroke="#0000c8"/><path d="M849.3 287.4H854.3M851.8 284.9V289.9" stroke="#0000c8"/><path d="M255.39999999999998 388.9H260.4M257.9 386.4V391.4" stroke="#0000c8"/><path d="M281.8 385.1H286.8M284.3 382.6V387.6" stroke="#0000c8"/><path d="M376.7 388.9H381.7M379.2 386.4V391.4" stroke="#0000c8"/><path d="M299.2 390.8H304.2M301.7 388.3V393.3" stroke="#0000c8"/><path d="M506.6 382.5H511.6M509.1 380.0V385.0" stroke="#0000c8"/><path d="M523.5 369.2H528.5M526.0 366.7V371.7" stroke="#0000c8"/><path d="M607.1 357.5H612.1M609.6 355.0V360.0" stroke="#0000c8"/><path d="M572.2 382.5H577.2M574.7 380.0V385.0" stroke="#0000c8"/><path d="M612.8 392.3H617.8M615.3 389.8V394.8" stroke="#0000c8"/><path d="M581.7 412.6H586.7M584.2 410.1V415.1" stroke="#0000c8"/><path d="M632.6 432.5H637.6M635.1 430.0V435.0" stroke="#0000c8"/><path d="M451.1 364.2H456.1M453.6 361.7V366.7" stroke="#0000c8"/><path d="M571.8 369.2H576.8M574.3 366.7V371.7" stroke="#0000c8"/><path d="M612.8 405.1H617.8M615.3 402.6V407.6" stroke="#0000c8"/><path d="M594.9 412.1H599.9M597.4 409.6V414.6" stroke="#0000c8"/><path d="M599.0 424.0H604.0M601.5 421.5V426.5" stroke="#0000c8"/><path d="M632.6 445.1H637.6M635.1 442.6V447.6" stroke="#0000c8"/><path d="M573.7 424.5H578.7M576.2 422.0V427.0" stroke="#0000c8"/><path d="M607.1 343.8H612.1M609.6 341.3V346.3" stroke="#0000c8"/><path d="M567.5 347.5H572.5M570.0 345.0V350.0" stroke="#0000c8"/><path d="M667.5 369.2H672.5M670.0 366.7V371.7" stroke="#0000c8"/><path d="M667.5 382.5H672.5M670.0 380.0V385.0" stroke="#0000c8"/><path d="M718.4 357.5H723.4M720.9 355.0V360.0" stroke="#0000c8"/><path d="M718.4 377.7H723.4M720.9 375.2V380.2" stroke="#0000c8"/><path d="M748.6 377.7H753.6M751.1 375.2V380.2" stroke="#0000c8"/><path d="M718.4 397.5H723.4M720.9 395.0V400.0" stroke="#0000c8"/><path d="M748.6 397.5H753.6M751.1 395.0V400.0" stroke="#0000c8"/><path d="M718.4 417.4H723.4M720.9 414.9V419.9" stroke="#0000c8"/><path d="M748.6 417.4H753.6M751.1 414.9V419.9" stroke="#0000c8"/><path d="M788.8 387.2H793.8M791.3 384.7V389.7" stroke="#0000c8"/><path d="M819.8 438.1H824.8M822.3 435.6V440.6" stroke="#0000c8"/><path d="M839.8 438.1H844.8M842.3 435.6V440.6" stroke="#0000c8"/><path d="M809.0 468.7H814.0M811.5 466.2V471.2" stroke="#0000c8"/><path d="M768.4 458.5H773.4M770.9 456.0V461.0" stroke="#0000c8"/><path d="M728.8 448.5H733.8M731.3 446.0V451.0" stroke="#0000c8"/><path d="M698.6 458.5H703.6M701.1 456.0V461.0" stroke="#0000c8"/><path d="M627.9 468.3H632.9M630.4 465.8V470.8" stroke="#0000c8"/><path d="M647.7 468.3H652.7M650.2 465.8V470.8" stroke="#0000c8"/><path d="M667.5 468.3H672.5M670.0 465.8V470.8" stroke="#0000c8"/><path d="M718.4 347.5H723.4M720.9 345.0V350.0" stroke="#0000c8"/><path d="M735.8 347.5H740.8M738.3 345.0V350.0" stroke="#0000c8"/><path d="M749.0 364.2H754.0M751.5 361.7V366.7" stroke="#0000c8"/><path d="M776.9 387.2H781.9M779.4 384.7V389.7" stroke="#0000c8"/><path d="M697.7 445.1H702.7M700.2 442.6V447.6" stroke="#0000c8"/><path d="M741.1 448.1H746.1M743.6 445.6V450.6" stroke="#0000c8"/><path d="M633.0 445.1H638.0M635.5 442.6V447.6" stroke="#0000c8"/><path d="M808.1 455.1H813.1M810.6 452.6V457.6" stroke="#0000c8"/><path d="M856.7 464.9H861.7M859.2 462.4V467.4" stroke="#0000c8"/><path d="M745.8 474.9H750.8M748.3 472.4V477.4" stroke="#0000c8"/><path d="M785.4 474.9H790.4M787.9 472.4V477.4" stroke="#0000c8"/><path d="M826.9 438.1H831.9M829.4 435.6V440.6" stroke="#0000c8"/><path d="M851.5 438.1H856.5M854.0 435.6V440.6" stroke="#0000c8"/><path d="M768.4 458.5H773.4M770.9 456.0V461.0" stroke="#0000c8"/><path d="M789.2 427.7H794.2M791.7 425.2V430.2" stroke="#0000c8"/><path d="M806.2 437.7H811.2M808.7 435.2V440.2" stroke="#0000c8"/><path d="M386.3 569.5H391.3M388.8 567.0V572.0" stroke="#0000c8"/><path d="M426.3 519.1H431.3M428.8 516.6V521.6" stroke="#0000c8"/><path d="M476.0 519.1H481.0M478.5 516.6V521.6" stroke="#0000c8"/><path d="M526.9 548.9H531.9M529.4 546.4V551.4" stroke="#0000c8"/><path d="M551.9 620.2H556.9M554.4 617.7V622.7" stroke="#0000c8"/><path d="M443.3 534.9H448.3M445.8 532.4V537.4" stroke="#0000c8"/><path d="M443.3 616.1H448.3M445.8 613.6V618.6" stroke="#0000c8"/><path d="M476.0 506.5H481.0M478.5 504.0V509.0" stroke="#0000c8"/><path d="M454.2 548.9H459.2M456.7 546.4V551.4" stroke="#0000c8"/><path d="M509.5 548.9H514.5M512.0 546.4V551.4" stroke="#0000c8"/><path d="M384.4 556.0H389.4M386.9 553.5V558.5" stroke="#0000c8"/><path d="M478.4 637.4H483.4M480.9 634.9V639.9" stroke="#0000c8"/><path d="M565.2 619.7H570.2M567.7 617.2V622.2" stroke="#0000c8"/><path d="M576.6 538.5H581.6M579.1 536.0V541.0" stroke="#0000c8"/><path d="M462.7 588.9H467.7M465.2 586.4V591.4" stroke="#a000a0"/><path d="M476.0 588.9H481.0M478.5 586.4V591.4" stroke="#a000a0"/><path d="M729.5 579.1H734.5M732.0 576.6V581.6" stroke="#0000c8"/><path d="M715.5 562.1H720.5M718.0 559.6V564.6" stroke="#0000c8"/><path d="M748.6 538.7H753.6M751.1 536.2V541.2" stroke="#0000c8"/><path d="M778.8 509.1H783.8M781.3 506.6V511.6" stroke="#0000c8"/><path d="M748.6 499.1H753.6M751.1 496.6V501.6" stroke="#0000c8"/><path d="M801.1 488.9H806.1M803.6 486.4V491.4" stroke="#0000c8"/><path d="M811.1 569.7H816.1M813.6 567.2V572.2" stroke="#0000c8"/><path d="M811.1 588.5H816.1M813.6 586.0V591.0" stroke="#0000c8"/><path d="M818.6 619.0H823.6M821.1 616.5V621.5" stroke="#0000c8"/><path d="M713.6 619.0H718.6M716.1 616.5V621.5" stroke="#0000c8"/><path d="M748.6 619.0H753.6M751.1 616.5V621.5" stroke="#0000c8"/><path d="M673.2 603.9H678.2M675.7 601.4V606.4" stroke="#0000c8"/><path d="M673.2 616.8H678.2M675.7 614.3V619.3" stroke="#0000c8"/><path d="M713.6 631.6H718.6M716.1 629.1V634.1" stroke="#0000c8"/><path d="M748.6 631.6H753.6M751.1 629.1V634.1" stroke="#0000c8"/><path d="M748.6 550.8H753.6M751.1 548.3V553.3" stroke="#0000c8"/><path d="M748.6 475.4H753.6M751.1 472.9V477.9" stroke="#0000c8"/><path d="M785.5 475.4H790.5M788.0 472.9V477.9" stroke="#0000c8"/><path d="M778.8 520.6H783.8M781.3 518.1V523.1" stroke="#0000c8"/><path d="M821.9 495.1H826.9M824.4 492.6V497.6" stroke="#0000c8"/><path d="M796.3 556.2H801.3M798.8 553.7V558.7" stroke="#0000c8"/><path d="M808.4 556.2H813.4M810.9 553.7V558.7" stroke="#0000c8"/><path d="M796.3 595.3H801.3M798.8 592.8V597.8" stroke="#0000c8"/><path d="M820.5 606.0H825.5M823.0 603.5V608.5" stroke="#0000c8"/><path d="M607.7 599.3H612.7M610.2 596.8V601.8" stroke="#0000c8"/><path d="M624.7 586.4H629.7M627.2 583.9V588.9" stroke="#0000c8"/></g>
<g shape-rendering="auto"><text transform="translate(206.0 188.7) rotate(0) scale(1.0 1)" font-size="9" fill="#c8c8c8" text-anchor="middle">J101</text><text transform="translate(225.8 175.7) rotate(-90) scale(1.0 1)" font-size="9" fill="#c8c8c8" text-anchor="middle">R110</text><text transform="translate(273.8 175.7) rotate(-90) scale(1.0 1)" font-size="9" fill="#c8c8c8" text-anchor="middle">R108</text><text transform="translate(317.4 188.3) rotate(0) scale(1.0 1)" font-size="13" fill="#c8c8c8" text-anchor="middle">U104</text><text transform="translate(377.4 188.3) rotate(0) scale(1.0 1)" font-size="9" fill="#c8c8c8" text-anchor="middle">J103</text><text transform="translate(397.5 188.3) rotate(0) scale(1.0 1)" font-size="9" fill="#c8c8c8" text-anchor="middle">J102</text><text transform="translate(277.2 195.1) rotate(0) scale(1.0 1)" font-size="9" fill="#c8c8c8" text-anchor="middle">C108</text><text transform="translate(357.4 195.1) rotate(0) scale(1.0 1)" font-size="9" fill="#c8c8c8" text-anchor="middle">C130</text><text transform="translate(246.2 222.8) rotate(0) scale(1.0 1)" font-size="9" fill="#c8c8c8" text-anchor="middle">R109</text><text transform="translate(236.2 165.8) rotate(0) scale(1.0 1)" font-size="7" fill="#ffffff" text-anchor="middle" font-weight="bold">GND</text><text transform="translate(236.2 170.9) rotate(0) scale(1.0 1)" font-size="7" fill="#ffffff" text-anchor="middle" font-weight="bold">1</text><text transform="translate(236.2 188.7) rotate(0) scale(1.0 1)" font-size="7" fill="#ffffff" text-anchor="middle" font-weight="bold">2</text><text transform="translate(256.4 165.8) rotate(0) scale(1.0 1)" font-size="7" fill="#ffffff" text-anchor="middle" font-weight="bold">GND</text><text transform="translate(256.4 170.9) rotate(0) scale(1.0 1)" font-size="7" fill="#ffffff" text-anchor="middle" font-weight="bold">1</text><text transform="translate(256.4 188.7) rotate(0) scale(1.0 1)" font-size="7" fill="#ffffff" text-anchor="middle" font-weight="bold">2</text><text transform="translate(206.4 203.4) rotate(0) scale(1.0 1)" font-size="7" fill="#ffffff" text-anchor="middle" font-weight="bold">1</text><text transform="translate(377.4 203.4) rotate(0) scale(1.0 1)" font-size="7" fill="#ffffff" text-anchor="middle" font-weight="bold">1</text><text transform="translate(397.5 203.4) rotate(0) scale(1.0 1)" font-size="7" fill="#ffffff" text-anchor="middle" font-weight="bold">1</text><text transform="translate(235.3 207.2) rotate(-90) scale(1.0 1)" font-size="7" fill="#ffffff" text-anchor="middle" font-weight="bold">2</text><text transform="translate(265.5 207.2) rotate(-90) scale(1.0 1)" font-size="7" fill="#ffffff" text-anchor="middle" font-weight="bold">2</text><text transform="translate(345.8 207.2) rotate(-90) scale(1.0 1)" font-size="7" fill="#ffffff" text-anchor="middle" font-weight="bold">2</text><text transform="translate(416.4 207.2) rotate(-90) scale(1.0 1)" font-size="7" fill="#ffffff" text-anchor="middle" font-weight="bold">2</text><text transform="translate(253.2 204.2) rotate(90) scale(1.0 1)" font-size="7" fill="#ffffff" text-anchor="middle" font-weight="bold">1</text><text transform="translate(283.4 204.2) rotate(90) scale(1.0 1)" font-size="7" fill="#ffffff" text-anchor="middle" font-weight="bold">1</text><text transform="translate(364.5 204.2) rotate(90) scale(1.0 1)" font-size="7" fill="#ffffff" text-anchor="middle" font-weight="bold">1</text><text transform="translate(435.3 204.2) rotate(90) scale(1.0 1)" font-size="7" fill="#ffffff" text-anchor="middle" font-weight="bold">1</text><text transform="translate(418.5 165.8) rotate(0) scale(1.0 1)" font-size="7" fill="#ffffff" text-anchor="middle" font-weight="bold">GND</text><text transform="translate(418.5 170.9) rotate(0) scale(1.0 1)" font-size="7" fill="#ffffff" text-anchor="middle" font-weight="bold">1</text><text transform="translate(418.5 188.7) rotate(0) scale(1.0 1)" font-size="7" fill="#ffffff" text-anchor="middle" font-weight="bold">2</text><text transform="translate(438.5 165.8) rotate(0) scale(1.0 1)" font-size="7" fill="#ffffff" text-anchor="middle" font-weight="bold">GND</text><text transform="translate(438.5 170.9) rotate(0) scale(1.0 1)" font-size="7" fill="#ffffff" text-anchor="middle" font-weight="bold">1</text><text transform="translate(438.5 188.7) rotate(0) scale(1.0 1)" font-size="7" fill="#ffffff" text-anchor="middle" font-weight="bold">2</text><text transform="translate(559.2 165.8) rotate(0) scale(1.0 1)" font-size="7" fill="#ffffff" text-anchor="middle" font-weight="bold">GND</text><text transform="translate(559.2 170.9) rotate(0) scale(1.0 1)" font-size="7" fill="#ffffff" text-anchor="middle" font-weight="bold">1</text><text transform="translate(559.2 188.7) rotate(0) scale(1.0 1)" font-size="7" fill="#ffffff" text-anchor="middle" font-weight="bold">2</text><text transform="translate(579.4 165.8) rotate(0) scale(1.0 1)" font-size="7" fill="#ffffff" text-anchor="middle" font-weight="bold">GND</text><text transform="translate(579.4 170.9) rotate(0) scale(1.0 1)" font-size="7" fill="#ffffff" text-anchor="middle" font-weight="bold">1</text><text transform="translate(579.4 188.7) rotate(0) scale(1.0 1)" font-size="7" fill="#ffffff" text-anchor="middle" font-weight="bold">2</text><text transform="translate(525.3 207.2) rotate(-90) scale(1.0 1)" font-size="7" fill="#ffffff" text-anchor="middle" font-weight="bold">2</text><text transform="translate(555.5 207.2) rotate(-90) scale(1.0 1)" font-size="7" fill="#ffffff" text-anchor="middle" font-weight="bold">2</text><text transform="translate(585.7 207.2) rotate(-90) scale(1.0 1)" font-size="7" fill="#ffffff" text-anchor="middle" font-weight="bold">2</text><text transform="translate(615.8 207.2) rotate(-90) scale(1.0 1)" font-size="7" fill="#ffffff" text-anchor="middle" font-weight="bold">2</text><text transform="translate(465.8 204.2) rotate(90) scale(1.0 1)" font-size="7" fill="#ffffff" text-anchor="middle" font-weight="bold">1</text><text transform="translate(546.0 204.2) rotate(90) scale(1.0 1)" font-size="7" fill="#ffffff" text-anchor="middle" font-weight="bold">1</text><text transform="translate(576.2 204.2) rotate(90) scale(1.0 1)" font-size="7" fill="#ffffff" text-anchor="middle" font-weight="bold">1</text><text transform="translate(606.4 204.2) rotate(90) scale(1.0 1)" font-size="7" fill="#ffffff" text-anchor="middle" font-weight="bold">1</text><text transform="translate(407.9 175.7) rotate(-90) scale(1.0 1)" font-size="9" fill="#c8c8c8" text-anchor="middle">R20</text><text transform="translate(428.1 175.7) rotate(-90) scale(1.0 1)" font-size="9" fill="#c8c8c8" text-anchor="middle">R1</text><text transform="translate(428.5 195.1) rotate(0) scale(1.0 1)" font-size="9" fill="#c8c8c8" text-anchor="middle">R2</text><text transform="translate(458.3 195.1) rotate(0) scale(1.0 1)" font-size="9" fill="#c8c8c8" text-anchor="middle">C9</text><text transform="translate(539.4 195.1) rotate(0) scale(1.0 1)" font-size="9" fill="#c8c8c8" text-anchor="middle">C124</text><text transform="translate(548.9 175.7) rotate(-90) scale(1.0 1)" font-size="9" fill="#c8c8c8" text-anchor="middle">R113</text><text transform="translate(596.6 175.7) rotate(-90) scale(1.0 1)" font-size="9" fill="#c8c8c8" text-anchor="middle">R111</text><text transform="translate(599.2 195.1) rotate(0) scale(1.0 1)" font-size="9" fill="#c8c8c8" text-anchor="middle">C19</text><text transform="translate(569.6 222.8) rotate(0) scale(1.0 1)" font-size="9" fill="#c8c8c8" text-anchor="middle">R112</text><text transform="translate(522.5 225.7) rotate(-90) scale(1.0 1)" font-size="13" fill="#c8c8c8" text-anchor="middle">U6</text><text transform="translate(646.4 207.2) rotate(-90) scale(1.0 1)" font-size="7" fill="#ffffff" text-anchor="middle" font-weight="bold">2</text><text transform="translate(676.6 207.2) rotate(-90) scale(1.0 1)" font-size="7" fill="#ffffff" text-anchor="middle" font-weight="bold">2</text><text transform="translate(636.6 204.2) rotate(90) scale(1.0 1)" font-size="7" fill="#ffffff" text-anchor="middle" font-weight="bold">1</text><text transform="translate(667.2 204.2) rotate(90) scale(1.0 1)" font-size="7" fill="#ffffff" text-anchor="middle" font-weight="bold">1</text><text transform="translate(697.4 204.2) rotate(90) scale(1.0 1)" font-size="7" fill="#ffffff" text-anchor="middle" font-weight="bold">1</text><text transform="translate(630.0 195.1) rotate(0) scale(1.0 1)" font-size="9" fill="#c8c8c8" text-anchor="middle">R8</text><text transform="translate(660.2 195.1) rotate(0) scale(1.0 1)" font-size="9" fill="#c8c8c8" text-anchor="middle">R115</text><text transform="translate(690.4 195.1) rotate(0) scale(1.0 1)" font-size="9" fill="#c8c8c8" text-anchor="middle">C21</text><text transform="translate(639.8 231.3) rotate(-90) scale(1.0 1)" font-size="9" fill="#c8c8c8" text-anchor="middle">R9</text><text transform="translate(758.9 155.0) rotate(-90) scale(1.0 1)" font-size="6.5" fill="#ffffff" text-anchor="middle" font-weight="bold">GND</text><text transform="translate(784.3 155.0) rotate(-90) scale(1.0 1)" font-size="6.5" fill="#ffffff" text-anchor="middle" font-weight="bold">GND</text><text transform="translate(809.7 155.0) rotate(-90) scale(1.0 1)" font-size="6.5" fill="#ffffff" text-anchor="middle" font-weight="bold">GND</text><text transform="translate(835.1 155.0) rotate(-90) scale(1.0 1)" font-size="6.5" fill="#ffffff" text-anchor="middle" font-weight="bold">GND</text><text transform="translate(729.0 177.4) rotate(-90) scale(1.0 1)" font-size="6.5" fill="#ffffff" text-anchor="middle" font-weight="bold">1</text><text transform="translate(736.0 177.4) rotate(-90) scale(1.0 1)" font-size="6.5" fill="#ffffff" text-anchor="middle" font-weight="bold">GND</text><text transform="translate(729.0 229.5) rotate(-90) scale(1.0 1)" font-size="6.5" fill="#ffffff" text-anchor="middle" font-weight="bold">1</text><text transform="translate(736.0 229.5) rotate(-90) scale(1.0 1)" font-size="6.5" fill="#ffffff" text-anchor="middle" font-weight="bold">GND</text><text transform="translate(729.0 253.6) rotate(-90) scale(1.0 1)" font-size="6.5" fill="#ffffff" text-anchor="middle" font-weight="bold">1</text><text transform="translate(736.0 253.6) rotate(-90) scale(1.0 1)" font-size="6.5" fill="#ffffff" text-anchor="middle" font-weight="bold">GND</text><text transform="translate(851.0 177.4) rotate(-90) scale(1.0 1)" font-size="6.5" fill="#ffffff" text-anchor="middle" font-weight="bold">1</text><text transform="translate(858.0 177.4) rotate(-90) scale(1.0 1)" font-size="6.5" fill="#ffffff" text-anchor="middle" font-weight="bold">GND</text><text transform="translate(851.0 202.8) rotate(-90) scale(1.0 1)" font-size="6.5" fill="#ffffff" text-anchor="middle" font-weight="bold">1</text><text transform="translate(858.0 202.8) rotate(-90) scale(1.0 1)" font-size="6.5" fill="#ffffff" text-anchor="middle" font-weight="bold">GND</text><text transform="translate(851.0 253.6) rotate(-90) scale(1.0 1)" font-size="6.5" fill="#ffffff" text-anchor="middle" font-weight="bold">1</text><text transform="translate(858.0 253.6) rotate(-90) scale(1.0 1)" font-size="6.5" fill="#ffffff" text-anchor="middle" font-weight="bold">GND</text><text transform="translate(733.0 204.0) rotate(-90) scale(1.0 1)" font-size="7" fill="#ffffff" text-anchor="middle" font-weight="bold">16</text><text transform="translate(852.0 229.0) rotate(-90) scale(1.0 1)" font-size="7" fill="#ffffff" text-anchor="middle" font-weight="bold">2</text><text transform="translate(261.7 259.8) rotate(0) scale(1.0 1)" font-size="9" fill="#c8c8c8" text-anchor="middle">C109</text><text transform="translate(287.0 265.5) rotate(0) scale(1.0 1)" font-size="8" fill="#ffffff" text-anchor="middle" font-weight="bold">2</text><text transform="translate(287.0 281.1) rotate(0) scale(1.0 1)" font-size="8" fill="#ffffff" text-anchor="middle" font-weight="bold">2</text><text transform="translate(311.7 286.2) rotate(0) scale(1.0 1)" font-size="9" fill="#c8c8c8" text-anchor="middle">C111</text><text transform="translate(305.1 296.8) rotate(-90) scale(1.0 1)" font-size="9" fill="#c8c8c8" text-anchor="middle">R107</text><text transform="translate(266.4 303.2) rotate(0) scale(1.0 1)" font-size="9" fill="#c8c8c8" text-anchor="middle">TP106</text><text transform="translate(286.6 308.9) rotate(0) scale(1.0 1)" font-size="8" fill="#ffffff" text-anchor="middle" font-weight="bold">1</text><text transform="translate(287.0 316.0) rotate(0) scale(1.0 1)" font-size="7" fill="#ffffff" text-anchor="middle" font-weight="bold">5VB</text><text transform="translate(286.2 332.1) rotate(-90) scale(1.0 1)" font-size="7" fill="#ffffff" text-anchor="middle" font-weight="bold">5VB</text><text transform="translate(293.4 332.1) rotate(-90) scale(1.0 1)" font-size="7" fill="#ffffff" text-anchor="middle" font-weight="bold">1</text><text transform="translate(314.9 332.1) rotate(-90) scale(1.0 1)" font-size="7" fill="#ffffff" text-anchor="middle" font-weight="bold">GND</text><text transform="translate(302.6 346.2) rotate(0) scale(1.0 1)" font-size="9" fill="#c8c8c8" text-anchor="middle">C103</text><text transform="translate(352.6 340.6) rotate(-90) scale(1.0 1)" font-size="9" fill="#c8c8c8" text-anchor="middle">C120</text><text transform="translate(372.6 357.2) rotate(-90) scale(1.0 1)" font-size="9" fill="#c8c8c8" text-anchor="middle">C113</text><text transform="translate(241.3 385.5) rotate(0) scale(1.0 1)" font-size="9" fill="#c8c8c8" text-anchor="middle">JP102</text><text transform="translate(362.1 385.5) rotate(0) scale(1.0 1)" font-size="9" fill="#c8c8c8" text-anchor="middle">TP101</text><text transform="translate(257.0 271.3) rotate(-90) scale(1.0 1)" font-size="7" fill="#ffffff" text-anchor="middle" font-weight="bold">GND</text><text transform="translate(251.3 271.3) rotate(-90) scale(1.0 1)" font-size="7" fill="#ffffff" text-anchor="middle" font-weight="bold">2</text><text transform="translate(319.2 271.3) rotate(-90) scale(1.0 1)" font-size="7" fill="#ffffff" text-anchor="middle" font-weight="bold">GND</text><text transform="translate(325.5 271.3) rotate(-90) scale(1.0 1)" font-size="7" fill="#ffffff" text-anchor="middle" font-weight="bold">2</text><text transform="translate(337.2 337.2) rotate(0) scale(1.0 1)" font-size="6.5" fill="#ffffff" text-anchor="middle" font-weight="bold">GND</text><text transform="translate(337.2 333.0) rotate(0) scale(1.0 1)" font-size="6.5" fill="#ffffff" text-anchor="middle" font-weight="bold">2</text><text transform="translate(337.2 349.6) rotate(0) scale(1.0 1)" font-size="7" fill="#ffffff" text-anchor="middle" font-weight="bold">1</text><text transform="translate(357.4 352.5) rotate(0) scale(1.0 1)" font-size="6.5" fill="#ffffff" text-anchor="middle" font-weight="bold">GND</text><text transform="translate(357.4 365.1) rotate(0) scale(1.0 1)" font-size="7" fill="#ffffff" text-anchor="middle" font-weight="bold">1</text><text transform="translate(276.8 245.8) rotate(-90) scale(1.0 1)" font-size="9" fill="#c8c8c8" text-anchor="middle">L101</text><text transform="translate(287.0 236.7) rotate(0) scale(1.0 1)" font-size="8" fill="#ffffff" text-anchor="middle" font-weight="bold">1</text><text transform="translate(318.0 233.0) rotate(-90) scale(1.0 1)" font-size="12" fill="#c8c8c8" text-anchor="middle">GND</text><text transform="translate(328.0 234.0) rotate(-90) scale(1.0 1)" font-size="9" fill="#c8c8c8" text-anchor="middle">2</text><text transform="translate(499.0 233.0) rotate(-90) scale(1.0 1)" font-size="12" fill="#c8c8c8" text-anchor="middle">GND</text><text transform="translate(509.0 234.0) rotate(-90) scale(1.0 1)" font-size="9" fill="#c8c8c8" text-anchor="middle">2</text><text transform="translate(318.0 206.0) rotate(-90) scale(1.0 1)" font-size="6.5" fill="#ffffff" text-anchor="middle" font-weight="bold">GND</text><text transform="translate(499.0 206.0) rotate(-90) scale(1.0 1)" font-size="6.5" fill="#ffffff" text-anchor="middle" font-weight="bold">GND</text><text transform="translate(468.7 236.7) rotate(0) scale(1.0 1)" font-size="8" fill="#ffffff" text-anchor="middle" font-weight="bold">1</text><text transform="translate(468.7 265.0) rotate(0) scale(1.0 1)" font-size="7" fill="#ffffff" text-anchor="middle" font-weight="bold">2</text><text transform="translate(458.9 246.1) rotate(-90) scale(1.0 1)" font-size="9" fill="#c8c8c8" text-anchor="middle">L1</text><text transform="translate(443.2 250.1) rotate(0) scale(1.0 1)" font-size="9" fill="#c8c8c8" text-anchor="middle">C2</text><text transform="translate(430.6 261.2) rotate(-90) scale(1.0 1)" font-size="7" fill="#ffffff" text-anchor="middle" font-weight="bold">2</text><text transform="translate(436.6 261.2) rotate(-90) scale(1.0 1)" font-size="6.5" fill="#ffffff" text-anchor="middle" font-weight="bold">GND</text><text transform="translate(420.6 281.0) rotate(-90) scale(1.0 1)" font-size="7" fill="#ffffff" text-anchor="middle" font-weight="bold">5V</text><text transform="translate(428.1 281.0) rotate(-90) scale(1.0 1)" font-size="7" fill="#ffffff" text-anchor="middle" font-weight="bold">1</text><text transform="translate(455.5 281.0) rotate(-90) scale(1.0 1)" font-size="7" fill="#ffffff" text-anchor="middle" font-weight="bold">2</text><text transform="translate(438.5 296.3) rotate(0) scale(1.0 1)" font-size="9" fill="#c8c8c8" text-anchor="middle">R18</text><text transform="translate(479.1 293.9) rotate(0) scale(1.0 1)" font-size="9" fill="#c8c8c8" text-anchor="middle">TP102</text><text transform="translate(485.7 290.1) rotate(0) scale(1.0 1)" font-size="9" fill="#c8c8c8" text-anchor="middle">C10</text><text transform="translate(485.7 276.3) rotate(-90) scale(1.0 1)" font-size="6.5" fill="#ffffff" text-anchor="middle" font-weight="bold">GND</text><text transform="translate(452.6 336.3) rotate(0) scale(1.0 1)" font-size="12" fill="#c8c8c8" text-anchor="middle">U105</text><text transform="translate(497.9 311.4) rotate(-90) scale(1.0 1)" font-size="8" fill="#ffffff" text-anchor="middle" font-weight="bold">1</text><text transform="translate(520.6 311.4) rotate(-90) scale(1.0 1)" font-size="7" fill="#ffffff" text-anchor="middle" font-weight="bold">GND</text><text transform="translate(508.9 325.9) rotate(0) scale(1.0 1)" font-size="9" fill="#c8c8c8" text-anchor="middle">C23</text><text transform="translate(554.5 290.1) rotate(0) scale(1.0 1)" font-size="7" fill="#ffffff" text-anchor="middle" font-weight="bold">2</text><text transform="translate(554.5 297.6) rotate(0) scale(1.0 1)" font-size="7" fill="#ffffff" text-anchor="middle" font-weight="bold">GND</text><text transform="translate(554.5 319.3) rotate(0) scale(1.0 1)" font-size="8" fill="#ffffff" text-anchor="middle" font-weight="bold">1</text><text transform="translate(554.5 325.6) rotate(0) scale(1.0 1)" font-size="7" fill="#ffffff" text-anchor="middle" font-weight="bold">5V</text><text transform="translate(568.7 308.0) rotate(-90) scale(1.0 1)" font-size="9" fill="#c8c8c8" text-anchor="middle">C117</text><text transform="translate(581.5 303.9) rotate(0) scale(1.0 1)" font-size="9" fill="#c8c8c8" text-anchor="middle">P103</text><text transform="translate(599.2 312.9) rotate(0) scale(1.0 1)" font-size="7" fill="#ffffff" text-anchor="middle" font-weight="bold">GND</text><text transform="translate(599.2 334.4) rotate(0) scale(1.0 1)" font-size="8" fill="#ffffff" text-anchor="middle" font-weight="bold">1</text><text transform="translate(599.2 340.5) rotate(0) scale(1.0 1)" font-size="7" fill="#ffffff" text-anchor="middle" font-weight="bold">3V3</text><text transform="translate(614.0 321.2) rotate(-90) scale(1.0 1)" font-size="9" fill="#c8c8c8" text-anchor="middle">C101</text><text transform="translate(473.4 336.3) rotate(-90) scale(1.0 1)" font-size="9" fill="#c8c8c8" text-anchor="middle">L103</text><text transform="translate(516.2 355.2) rotate(0) scale(1.0 1)" font-size="9" fill="#c8c8c8" text-anchor="middle">C26</text><text transform="translate(520.6 342.9) rotate(-90) scale(1.0 1)" font-size="6.5" fill="#ffffff" text-anchor="middle" font-weight="bold">GND</text><text transform="translate(446.0 351.8) rotate(-90) scale(1.0 1)" font-size="6.5" fill="#ffffff" text-anchor="middle" font-weight="bold">GND</text><text transform="translate(740.8 306.2) rotate(-90) scale(1.0 1)" font-size="9" fill="#c8c8c8" text-anchor="middle">C22</text><text transform="translate(812.5 306.2) rotate(-90) scale(1.0 1)" font-size="9" fill="#c8c8c8" text-anchor="middle">C16</text><text transform="translate(754.9 306.2) rotate(-90) scale(1.0 1)" font-size="6.5" fill="#ffffff" text-anchor="middle" font-weight="bold">GND</text><text transform="translate(797.4 306.2) rotate(-90) scale(1.0 1)" font-size="6.5" fill="#ffffff" text-anchor="middle" font-weight="bold">GND</text><text transform="translate(775.1 278.3) rotate(-90) scale(1.0 1)" font-size="7" fill="#ffffff" text-anchor="middle" font-weight="bold">14</text><text transform="translate(812.5 326.8) rotate(-90) scale(1.0 1)" font-size="9" fill="#c8c8c8" text-anchor="middle">L104</text><text transform="translate(637.0 261.7) rotate(-90) scale(1.0 1)" font-size="9" fill="#c8c8c8" text-anchor="middle">C123</text><text transform="translate(664.3 292.5) rotate(-90) scale(1.0 1)" font-size="9" fill="#c8c8c8" text-anchor="middle">R104</text><text transform="translate(676.0 265.5) rotate(0) scale(1.0 1)" font-size="9" fill="#c8c8c8" text-anchor="middle">R105</text><text transform="translate(681.3 291.1) rotate(0) scale(1.0 1)" font-size="9" fill="#c8c8c8" text-anchor="middle">R103</text><text transform="translate(669.4 319.8) rotate(-90) scale(1.0 1)" font-size="9" fill="#c8c8c8" text-anchor="middle">C20</text><text transform="translate(681.3 340.9) rotate(0) scale(1.0 1)" font-size="9" fill="#c8c8c8" text-anchor="middle">C6</text><text transform="translate(644.2 310.4) rotate(-90) scale(1.0 1)" font-size="9" fill="#c8c8c8" text-anchor="middle">C119</text><text transform="translate(629.4 351.1) rotate(0) scale(1.0 1)" font-size="9" fill="#c8c8c8" text-anchor="middle">L105</text><text transform="translate(630.4 307.5) rotate(0) scale(1.0 1)" font-size="6.5" fill="#ffffff" text-anchor="middle" font-weight="bold">GND</text><text transform="translate(630.4 319.4) rotate(0) scale(1.0 1)" font-size="6.5" fill="#ffffff" text-anchor="middle" font-weight="bold">1</text><text transform="translate(655.3 311.9) rotate(0) scale(1.0 1)" font-size="6.5" fill="#ffffff" text-anchor="middle" font-weight="bold">2</text><text transform="translate(655.3 329.2) rotate(0) scale(1.0 1)" font-size="6.5" fill="#ffffff" text-anchor="middle" font-weight="bold">1</text><text transform="translate(650.2 280.6) rotate(0) scale(1.0 1)" font-size="6.5" fill="#ffffff" text-anchor="middle" font-weight="bold">2</text><text transform="translate(650.2 299.4) rotate(0) scale(1.0 1)" font-size="6.5" fill="#ffffff" text-anchor="middle" font-weight="bold">1</text><text transform="translate(650.2 268.9) rotate(0) scale(1.0 1)" font-size="6.5" fill="#ffffff" text-anchor="middle" font-weight="bold">1</text><text transform="translate(687.0 276.4) rotate(-90) scale(1.0 1)" font-size="6.5" fill="#ffffff" text-anchor="middle" font-weight="bold">GND</text><text transform="translate(692.6 301.3) rotate(-90) scale(1.0 1)" font-size="6.5" fill="#ffffff" text-anchor="middle" font-weight="bold">GND</text><text transform="translate(687.0 326.8) rotate(-90) scale(1.0 1)" font-size="6.5" fill="#ffffff" text-anchor="middle" font-weight="bold">GND</text><text transform="translate(732.6 337.2) rotate(-90) scale(1.0 1)" font-size="6.5" fill="#ffffff" text-anchor="middle" font-weight="bold">GND</text><text transform="translate(758.7 378.3) rotate(-90) scale(1.0 1)" font-size="6.5" fill="#ffffff" text-anchor="middle" font-weight="bold">GND</text><text transform="translate(727.5 378.3) rotate(-90) scale(1.0 1)" font-size="6.5" fill="#ffffff" text-anchor="middle" font-weight="bold">GND</text><text transform="translate(720.9 313.2) rotate(0) scale(1.0 1)" font-size="9" fill="#c8c8c8" text-anchor="middle">R10</text><text transform="translate(720.9 323.2) rotate(0) scale(1.0 1)" font-size="9" fill="#c8c8c8" text-anchor="middle">R15</text><text transform="translate(766.8 347.2) rotate(-90) scale(1.0 1)" font-size="9" fill="#c8c8c8" text-anchor="middle">C4</text><text transform="translate(751.5 342.5) rotate(0) scale(1.0 1)" font-size="6.5" fill="#ffffff" text-anchor="middle" font-weight="bold">GND</text><text transform="translate(751.5 354.9) rotate(0) scale(1.0 1)" font-size="7" fill="#ffffff" text-anchor="middle" font-weight="bold">1</text><text transform="translate(852.5 289.2) rotate(0) scale(1.0 1)" font-size="9" fill="#c8c8c8" text-anchor="middle">TP117</text><text transform="translate(892.8 250.0) rotate(0) scale(1.0 1)" font-size="9" fill="#c8c8c8" text-anchor="middle">C1</text><text transform="translate(901.4 236.7) rotate(-90) scale(1.0 1)" font-size="6.5" fill="#ffffff" text-anchor="middle" font-weight="bold">GND</text><text transform="translate(883.0 264.7) rotate(-90) scale(1.0 1)" font-size="12" fill="#e8d8d8" text-anchor="middle" font-weight="bold">U15</text><text transform="translate(898.1 265.8) rotate(-90) scale(1.0 1)" font-size="9" fill="#c8c8c8" text-anchor="middle">R17</text><text transform="translate(883.0 286.3) rotate(0) scale(1.0 1)" font-size="9" fill="#c8c8c8" text-anchor="middle">R14</text><text transform="translate(882.4 326.2) rotate(-90) scale(1.0 1)" font-size="9" fill="#c8c8c8" text-anchor="middle">C27</text><text transform="translate(893.2 318.2) rotate(0) scale(1.0 1)" font-size="8" fill="#ffffff" text-anchor="middle" font-weight="bold">1</text><text transform="translate(893.2 339.1) rotate(0) scale(1.0 1)" font-size="7" fill="#ffffff" text-anchor="middle" font-weight="bold">GND</text><text transform="translate(893.2 345.6) rotate(0) scale(1.0 1)" font-size="7" fill="#ffffff" text-anchor="middle" font-weight="bold">2</text><text transform="translate(301.7 393.6) rotate(0) scale(1.0 1)" font-size="9" fill="#c8c8c8" text-anchor="middle">U102</text><text transform="translate(241.3 385.5) rotate(0) scale(1.0 1)" font-size="9" fill="#c8c8c8" text-anchor="middle">JP102</text><text transform="translate(362.1 385.5) rotate(0) scale(1.0 1)" font-size="9" fill="#c8c8c8" text-anchor="middle">TP101</text><text transform="translate(240.9 398.3) rotate(0) scale(1.0 1)" font-size="8" fill="#ffffff" text-anchor="middle" font-weight="bold">1</text><text transform="translate(240.9 409.6) rotate(0) scale(1.0 1)" font-size="8.5" fill="#ffffff" text-anchor="middle" font-weight="bold">GND</text><text transform="translate(362.1 399.2) rotate(0) scale(1.0 1)" font-size="8" fill="#ffffff" text-anchor="middle" font-weight="bold">1</text><text transform="translate(366.4 476.6) rotate(-90) scale(1.0 1)" font-size="13" fill="#e0e0e0" text-anchor="middle">N-0000024</text><text transform="translate(273.0 372.3) rotate(-90) scale(1.0 1)" font-size="8" fill="#ffffff" text-anchor="middle" font-weight="bold">5VB</text><text transform="translate(282.5 372.3) rotate(-90) scale(1.0 1)" font-size="8" fill="#ffffff" text-anchor="middle" font-weight="bold">3</text><text transform="translate(299.4 372.3) rotate(-90) scale(1.0 1)" font-size="8" fill="#ffffff" text-anchor="middle" font-weight="bold">GND</text><text transform="translate(308.5 372.3) rotate(-90) scale(1.0 1)" font-size="8" fill="#ffffff" text-anchor="middle" font-weight="bold">2</text><text transform="translate(334.9 372.3) rotate(-90) scale(1.0 1)" font-size="8" fill="#ffffff" text-anchor="middle" font-weight="bold">1</text><text transform="translate(509.1 366.0) rotate(0) scale(1.0 1)" font-size="9" fill="#e0a0a0" text-anchor="middle">U7</text><text transform="translate(584.2 347.5) rotate(-90) scale(1.0 1)" font-size="12" fill="#c8c8c8" text-anchor="middle">U107</text><text transform="translate(610.6 371.1) rotate(0) scale(1.0 1)" font-size="9" fill="#c8c8c8" text-anchor="middle">C104</text><text transform="translate(630.4 350.9) rotate(0) scale(1.0 1)" font-size="9" fill="#c8c8c8" text-anchor="middle">L105</text><text transform="translate(598.3 357.5) rotate(-90) scale(1.0 1)" font-size="6" fill="#ffffff" text-anchor="middle" font-weight="bold">3V3</text><text transform="translate(616.2 357.5) rotate(-90) scale(1.0 1)" font-size="6" fill="#ffffff" text-anchor="middle" font-weight="bold">GND</text><text transform="translate(574.7 397.0) rotate(0) scale(1.0 1)" font-size="9" fill="#c8c8c8" text-anchor="middle">R114</text><text transform="translate(615.3 381.9) rotate(0) scale(1.0 1)" font-size="9" fill="#c8c8c8" text-anchor="middle">C131</text><text transform="translate(574.3 408.9) rotate(-90) scale(1.0 1)" font-size="9" fill="#c8c8c8" text-anchor="middle">D2</text><text transform="translate(559.6 420.2) rotate(0) scale(1.0 1)" font-size="9" fill="#c8c8c8" text-anchor="middle">TP105</text><text transform="translate(587.5 420.2) rotate(0) scale(1.0 1)" font-size="9" fill="#c8c8c8" text-anchor="middle">TP108</text><text transform="translate(584.2 408.3) rotate(0) scale(1.0 1)" font-size="7" fill="#ffffff" text-anchor="middle" font-weight="bold">1</text><text transform="translate(584.2 425.8) rotate(0) scale(1.0 1)" font-size="7" fill="#ffffff" text-anchor="middle" font-weight="bold">2</text><text transform="translate(559.6 434.7) rotate(0) scale(1.0 1)" font-size="7" fill="#ffffff" text-anchor="middle" font-weight="bold">1</text><text transform="translate(559.6 443.8) rotate(0) scale(1.0 1)" font-size="8" fill="#ffffff" text-anchor="middle" font-weight="bold">GND</text><text transform="translate(584.2 434.7) rotate(0) scale(1.0 1)" font-size="7" fill="#ffffff" text-anchor="middle" font-weight="bold">1</text><text transform="translate(635.1 422.5) rotate(0) scale(1.0 1)" font-size="9" fill="#c8c8c8" text-anchor="middle">C106</text><text transform="translate(670.0 398.9) rotate(0) scale(1.0 1)" font-size="13" fill="#c8c8c8" text-anchor="middle">U4</text><text transform="translate(720.9 388.1) rotate(0) scale(1.0 1)" font-size="11" fill="#c8c8c8" text-anchor="middle">L106</text><text transform="translate(751.1 388.1) rotate(0) scale(1.0 1)" font-size="11" fill="#c8c8c8" text-anchor="middle">L107</text><text transform="translate(721.9 432.5) rotate(0) scale(1.0 1)" font-size="9" fill="#c8c8c8" text-anchor="middle">C13</text><text transform="translate(751.1 432.5) rotate(0) scale(1.0 1)" font-size="9" fill="#c8c8c8" text-anchor="middle">C102</text><text transform="translate(727.5 377.7) rotate(-90) scale(1.0 1)" font-size="6.5" fill="#ffffff" text-anchor="middle" font-weight="bold">GND</text><text transform="translate(758.7 377.7) rotate(-90) scale(1.0 1)" font-size="6.5" fill="#ffffff" text-anchor="middle" font-weight="bold">GND</text><text transform="translate(727.5 417.4) rotate(-90) scale(1.0 1)" font-size="6.5" fill="#ffffff" text-anchor="middle" font-weight="bold">GND</text><text transform="translate(758.7 417.4) rotate(-90) scale(1.0 1)" font-size="6.5" fill="#ffffff" text-anchor="middle" font-weight="bold">GND</text><text transform="translate(763.4 397.5) rotate(-90) scale(1.0 1)" font-size="6.5" fill="#ffffff" text-anchor="middle" font-weight="bold">5V</text><text transform="translate(714.0 377.7) rotate(-90) scale(1.0 1)" font-size="6.5" fill="#ffffff" text-anchor="middle" font-weight="bold">1</text><text transform="translate(714.0 417.4) rotate(-90) scale(1.0 1)" font-size="6.5" fill="#ffffff" text-anchor="middle" font-weight="bold">1</text><text transform="translate(726.6 397.5) rotate(-90) scale(1.0 1)" font-size="6.5" fill="#ffffff" text-anchor="middle" font-weight="bold">1</text><text transform="translate(756.8 397.5) rotate(-90) scale(1.0 1)" font-size="6.5" fill="#ffffff" text-anchor="middle" font-weight="bold">1</text><text transform="translate(726.6 357.5) rotate(-90) scale(1.0 1)" font-size="6.5" fill="#ffffff" text-anchor="middle" font-weight="bold">1</text><text transform="translate(708.7 397.5) rotate(-90) scale(1.0 1)" font-size="6.5" fill="#ffffff" text-anchor="middle" font-weight="bold">2</text><text transform="translate(739.2 397.5) rotate(-90) scale(1.0 1)" font-size="6.5" fill="#ffffff" text-anchor="middle" font-weight="bold">2</text><text transform="translate(708.7 357.5) rotate(-90) scale(1.0 1)" font-size="6.5" fill="#ffffff" text-anchor="middle" font-weight="bold">2</text><text transform="translate(806.8 387.2) rotate(-90) scale(1.0 1)" font-size="9" fill="#c8c8c8" text-anchor="middle">C115</text><text transform="translate(791.3 381.9) rotate(0) scale(1.0 1)" font-size="6.5" fill="#ffffff" text-anchor="middle" font-weight="bold">GND</text><text transform="translate(791.3 400.0) rotate(-90) scale(1.0 1)" font-size="6.5" fill="#ffffff" text-anchor="middle" font-weight="bold">5V</text><text transform="translate(781.3 428.7) rotate(-90) scale(1.0 1)" font-size="12" fill="#c8c8c8" text-anchor="middle">U103</text><text transform="translate(857.4 438.1) rotate(-90) scale(1.0 1)" font-size="9" fill="#c8c8c8" text-anchor="middle">C114</text><text transform="translate(842.3 422.1) rotate(0) scale(1.0 1)" font-size="7" fill="#ffffff" text-anchor="middle" font-weight="bold">2</text><text transform="translate(842.3 429.1) rotate(0) scale(1.0 1)" font-size="7" fill="#ffffff" text-anchor="middle" font-weight="bold">GND</text><text transform="translate(842.3 450.4) rotate(0) scale(1.0 1)" font-size="8" fill="#ffffff" text-anchor="middle" font-weight="bold">1</text><text transform="translate(842.3 455.5) rotate(0) scale(1.0 1)" font-size="7" fill="#ffffff" text-anchor="middle" font-weight="bold">5V</text><text transform="translate(822.3 433.4) rotate(0) scale(1.0 1)" font-size="6.5" fill="#ffffff" text-anchor="middle" font-weight="bold">GND</text><text transform="translate(822.3 450.4) rotate(0) scale(1.0 1)" font-size="6.5" fill="#ffffff" text-anchor="middle" font-weight="bold">5V</text><text transform="translate(842.6 461.7) rotate(0) scale(1.0 1)" font-size="9" fill="#c8c8c8" text-anchor="middle">TP104</text><text transform="translate(771.9 447.2) rotate(0) scale(1.0 1)" font-size="9" fill="#c8c8c8" text-anchor="middle">C128</text><text transform="translate(760.6 458.5) rotate(-90) scale(1.0 1)" font-size="8" fill="#ffffff" text-anchor="middle" font-weight="bold">GND</text><text transform="translate(784.2 458.5) rotate(-90) scale(1.0 1)" font-size="8" fill="#ffffff" text-anchor="middle" font-weight="bold">1</text><text transform="translate(720.0 447.5) rotate(-90) scale(1.0 1)" font-size="9" fill="#c8c8c8" text-anchor="middle">C105</text><text transform="translate(731.3 455.5) rotate(0) scale(1.0 1)" font-size="6.5" fill="#ffffff" text-anchor="middle" font-weight="bold">GND</text><text transform="translate(701.1 472.1) rotate(0) scale(1.0 1)" font-size="9" fill="#c8c8c8" text-anchor="middle">R106</text><text transform="translate(730.9 471.1) rotate(0) scale(1.0 1)" font-size="9" fill="#c8c8c8" text-anchor="middle">TP112</text><text transform="translate(770.9 471.1) rotate(0) scale(1.0 1)" font-size="9" fill="#c8c8c8" text-anchor="middle">TP114</text><text transform="translate(630.4 463.0) rotate(0) scale(1.0 1)" font-size="6.5" fill="#ffffff" text-anchor="middle" font-weight="bold">1</text><text transform="translate(650.2 463.0) rotate(0) scale(1.0 1)" font-size="6.5" fill="#ffffff" text-anchor="middle" font-weight="bold">1</text><text transform="translate(670.0 463.0) rotate(0) scale(1.0 1)" font-size="6.5" fill="#ffffff" text-anchor="middle" font-weight="bold">1</text><text transform="translate(388.3 584.1) rotate(0) scale(1.0 1)" font-size="9" fill="#c8c8c8" text-anchor="middle">R101</text><text transform="translate(478.0 619.7) rotate(0) scale(1.0 1)" font-size="14" fill="#a8a8a8" text-anchor="middle">D101</text><text transform="translate(427.6 585.8) rotate(0) scale(1.0 1)" font-size="8" fill="#ffffff" text-anchor="middle" font-weight="bold">1</text><text transform="translate(427.6 597.4) rotate(0) scale(1.0 1)" font-size="8.5" fill="#ffffff" text-anchor="middle" font-weight="bold">VIN</text><text transform="translate(427.6 626.3) rotate(0) scale(1.0 1)" font-size="8" fill="#ffffff" text-anchor="middle" font-weight="bold">1</text><text transform="translate(427.6 637.9) rotate(0) scale(1.0 1)" font-size="8.5" fill="#ffffff" text-anchor="middle" font-weight="bold">VIN</text><text transform="translate(428.1 545.8) rotate(0) scale(1.0 1)" font-size="8" fill="#ffffff" text-anchor="middle" font-weight="bold">1</text><text transform="translate(428.1 557.2) rotate(0) scale(1.0 1)" font-size="8.5" fill="#ffffff" text-anchor="middle" font-weight="bold">GND</text><text transform="translate(529.9 586.3) rotate(0) scale(1.0 1)" font-size="8" fill="#ffffff" text-anchor="middle" font-weight="bold">2</text><text transform="translate(529.9 597.4) rotate(0) scale(1.0 1)" font-size="8.5" fill="#ffffff" text-anchor="middle" font-weight="bold">12V</text><text transform="translate(584.0 596.0) rotate(0) scale(1.0 1)" font-size="8" fill="#ffffff" text-anchor="middle" font-weight="bold">1</text><text transform="translate(584.0 606.9) rotate(0) scale(1.0 1)" font-size="8.5" fill="#ffffff" text-anchor="middle" font-weight="bold">12V</text><text transform="translate(579.1 542.1) rotate(0) scale(1.0 1)" font-size="16" fill="#c8c8c8" text-anchor="middle">C15</text><text transform="translate(428.1 508.2) rotate(0) scale(1.0 1)" font-size="9" fill="#c8c8c8" text-anchor="middle">C116</text><text transform="translate(478.5 534.1) rotate(0) scale(1.0 1)" font-size="9" fill="#c8c8c8" text-anchor="middle">C17</text><text transform="translate(410.6 519.1) rotate(-90) scale(1.0 1)" font-size="7" fill="#ffffff" text-anchor="middle" font-weight="bold">2</text><text transform="translate(419.1 519.1) rotate(-90) scale(1.0 1)" font-size="7" fill="#ffffff" text-anchor="middle" font-weight="bold">GND</text><text transform="translate(446.3 519.1) rotate(-90) scale(1.0 1)" font-size="7" fill="#ffffff" text-anchor="middle" font-weight="bold">5V</text><text transform="translate(462.8 519.1) rotate(-90) scale(1.0 1)" font-size="7" fill="#ffffff" text-anchor="middle" font-weight="bold">5V</text><text transform="translate(491.1 519.1) rotate(-90) scale(1.0 1)" font-size="7" fill="#ffffff" text-anchor="middle" font-weight="bold">GND</text><text transform="translate(497.4 519.1) rotate(-90) scale(1.0 1)" font-size="7" fill="#ffffff" text-anchor="middle" font-weight="bold">2</text><text transform="translate(468.3 562.7) rotate(0) scale(1.0 1)" font-size="6.5" fill="#ffffff" text-anchor="middle" font-weight="bold">5V</text><text transform="translate(468.3 538.0) rotate(0) scale(1.0 1)" font-size="6.5" fill="#ffffff" text-anchor="middle" font-weight="bold">2</text><text transform="translate(499.1 538.0) rotate(0) scale(1.0 1)" font-size="6.5" fill="#ffffff" text-anchor="middle" font-weight="bold">1</text><text transform="translate(544.0 548.9) rotate(-90) scale(1.0 1)" font-size="9" fill="#c8c8c8" text-anchor="middle">C118</text><text transform="translate(529.4 543.8) rotate(0) scale(1.0 1)" font-size="6.5" fill="#ffffff" text-anchor="middle" font-weight="bold">GND</text><text transform="translate(529.4 556.7) rotate(0) scale(1.0 1)" font-size="6.5" fill="#ffffff" text-anchor="middle" font-weight="bold">1</text><text transform="translate(529.4 562.7) rotate(0) scale(1.0 1)" font-size="6.5" fill="#ffffff" text-anchor="middle" font-weight="bold">12V</text><text transform="translate(529.4 537.5) rotate(0) scale(1.0 1)" font-size="6.5" fill="#ffffff" text-anchor="middle" font-weight="bold">2</text><text transform="translate(498.4 646.4) rotate(0) scale(1.0 1)" font-size="9" fill="#c8c8c8" text-anchor="middle">U101</text><text transform="translate(470.5 625.3) rotate(-90) scale(1.0 1)" font-size="8" fill="#ffffff" text-anchor="middle" font-weight="bold">5V</text><text transform="translate(480.5 625.3) rotate(-90) scale(1.0 1)" font-size="8" fill="#ffffff" text-anchor="middle" font-weight="bold">3</text><text transform="translate(495.5 625.3) rotate(-90) scale(1.0 1)" font-size="8" fill="#ffffff" text-anchor="middle" font-weight="bold">GND</text><text transform="translate(505.2 625.3) rotate(-90) scale(1.0 1)" font-size="8" fill="#ffffff" text-anchor="middle" font-weight="bold">2</text><text transform="translate(521.0 625.3) rotate(-90) scale(1.0 1)" font-size="8" fill="#ffffff" text-anchor="middle" font-weight="bold">12V</text><text transform="translate(529.9 625.3) rotate(-90) scale(1.0 1)" font-size="8" fill="#ffffff" text-anchor="middle" font-weight="bold">1</text><text transform="translate(544.0 622.9) rotate(-90) scale(1.0 1)" font-size="9" fill="#c8c8c8" text-anchor="middle">C11</text><text transform="translate(554.4 609.3) rotate(0) scale(1.0 1)" font-size="6.5" fill="#ffffff" text-anchor="middle" font-weight="bold">12V</text><text transform="translate(554.4 614.9) rotate(0) scale(1.0 1)" font-size="6.5" fill="#ffffff" text-anchor="middle" font-weight="bold">1</text><text transform="translate(554.4 627.7) rotate(0) scale(1.0 1)" font-size="6.5" fill="#ffffff" text-anchor="middle" font-weight="bold">GND</text><text transform="translate(554.4 633.1) rotate(0) scale(1.0 1)" font-size="6.5" fill="#ffffff" text-anchor="middle" font-weight="bold">2</text><text transform="translate(428.1 612.5) rotate(0) scale(1.0 1)" font-size="9" fill="#c8c8c8" text-anchor="middle">JP1</text><text transform="translate(429.5 531.7) rotate(0) scale(1.0 1)" font-size="9" fill="#c8c8c8" text-anchor="middle">JP101</text><text transform="translate(731.4 648.6) rotate(0) scale(1.0 1)" font-size="12" fill="#e0e0e0" text-anchor="middle">5V</text><text transform="translate(614.2 579.1) rotate(-90) scale(1.0 1)" font-size="12" fill="#e0e0e0" text-anchor="middle">5V</text><text transform="translate(635.5 596.6) rotate(0) scale(1.0 1)" font-size="8" fill="#ffffff" text-anchor="middle" font-weight="bold">2</text><text transform="translate(635.5 606.9) rotate(0) scale(1.0 1)" font-size="8.5" fill="#ffffff" text-anchor="middle" font-weight="bold">GND</text><text transform="translate(630.4 498.6) rotate(0) scale(1.0 1)" font-size="7" fill="#ffffff" text-anchor="middle" font-weight="bold">1</text><text transform="translate(650.1 498.6) rotate(0) scale(1.0 1)" font-size="7" fill="#ffffff" text-anchor="middle" font-weight="bold">1</text><text transform="translate(670.0 498.6) rotate(0) scale(1.0 1)" font-size="7" fill="#ffffff" text-anchor="middle" font-weight="bold">1</text><text transform="translate(715.3 579.1) rotate(-90) scale(1.0 1)" font-size="9" fill="#c8c8c8" text-anchor="middle">U1</text><text transform="translate(751.1 528.7) rotate(0) scale(1.0 1)" font-size="9" fill="#c8c8c8" text-anchor="middle">L102</text><text transform="translate(781.3 498.6) rotate(0) scale(1.0 1)" font-size="9" fill="#c8c8c8" text-anchor="middle">R7</text><text transform="translate(802.8 503.4) rotate(0) scale(1.0 1)" font-size="9" fill="#c8c8c8" text-anchor="middle">C129</text><text transform="translate(740.9 498.3) rotate(-90) scale(1.0 1)" font-size="9" fill="#c8c8c8" text-anchor="middle">D3</text><text transform="translate(751.1 511.8) rotate(0) scale(1.0 1)" font-size="6.5" fill="#ffffff" text-anchor="middle" font-weight="bold">2</text><text transform="translate(730.6 491.6) rotate(0) scale(1.0 1)" font-size="9" fill="#c8c8c8" text-anchor="middle">TP113</text><text transform="translate(730.6 506.1) rotate(0) scale(1.0 1)" font-size="7" fill="#ffffff" text-anchor="middle" font-weight="bold">1</text><text transform="translate(771.0 486.2) rotate(0) scale(1.0 1)" font-size="7" fill="#ffffff" text-anchor="middle" font-weight="bold">1</text><text transform="translate(730.6 485.6) rotate(0) scale(1.0 1)" font-size="7" fill="#ffffff" text-anchor="middle" font-weight="bold">1</text><text transform="translate(689.1 490.2) rotate(-90) scale(1.0 1)" font-size="9" fill="#c8c8c8" text-anchor="middle">U106</text><text transform="translate(806.9 491.0) rotate(0) scale(1.0 1)" font-size="9" fill="#c8c8c8" text-anchor="middle">TP116</text><text transform="translate(810.9 482.4) rotate(0) scale(1.0 1)" font-size="9" fill="#c8c8c8" text-anchor="middle">C121</text><text transform="translate(781.3 552.2) rotate(0) scale(1.0 1)" font-size="9" fill="#c8c8c8" text-anchor="middle">S1</text><text transform="translate(781.3 571.8) rotate(0) scale(1.0 1)" font-size="8" fill="#ffffff" text-anchor="middle" font-weight="bold">S2</text><text transform="translate(781.3 591.8) rotate(0) scale(1.0 1)" font-size="9" fill="#c8c8c8" text-anchor="middle">TP115</text><text transform="translate(781.3 586.4) rotate(0) scale(1.0 1)" font-size="7" fill="#ffffff" text-anchor="middle" font-weight="bold">1</text><text transform="translate(781.3 606.3) rotate(0) scale(1.0 1)" font-size="7" fill="#ffffff" text-anchor="middle" font-weight="bold">1</text><text transform="translate(812.3 583.1) rotate(0) scale(1.0 1)" font-size="9" fill="#c8c8c8" text-anchor="middle">R10</text><text transform="translate(812.3 604.2) rotate(0) scale(1.0 1)" font-size="9" fill="#c8c8c8" text-anchor="middle">R16</text><text transform="translate(819.5 569.7) rotate(-90) scale(1.0 1)" font-size="6.5" fill="#ffffff" text-anchor="middle" font-weight="bold">GND</text><text transform="translate(819.5 588.5) rotate(-90) scale(1.0 1)" font-size="6.5" fill="#ffffff" text-anchor="middle" font-weight="bold">GND</text><text transform="translate(821.7 634.9) rotate(0) scale(1.0 1)" font-size="9" fill="#c8c8c8" text-anchor="middle">C14</text><text transform="translate(833.8 619.0) rotate(-90) scale(1.0 1)" font-size="7" fill="#ffffff" text-anchor="middle" font-weight="bold">GND</text><text transform="translate(810.9 619.0) rotate(-90) scale(1.0 1)" font-size="7" fill="#ffffff" text-anchor="middle" font-weight="bold">1</text><text transform="translate(716.1 610.1) rotate(0) scale(1.0 1)" font-size="9" fill="#c8c8c8" text-anchor="middle">C7</text><text transform="translate(708.5 619.0) rotate(-90) scale(1.0 1)" font-size="6.5" fill="#ffffff" text-anchor="middle" font-weight="bold">GND</text><text transform="translate(751.1 610.1) rotate(0) scale(1.0 1)" font-size="9" fill="#c8c8c8" text-anchor="middle">R11</text><text transform="translate(675.7 594.5) rotate(0) scale(1.0 1)" font-size="9" fill="#c8c8c8" text-anchor="middle">C8</text><text transform="translate(669.5 603.9) rotate(-90) scale(1.0 1)" font-size="6.5" fill="#ffffff" text-anchor="middle" font-weight="bold">GND</text><text transform="translate(629.9 482.4) rotate(0) scale(1.0 1)" font-size="9" fill="#c8c8c8" text-anchor="middle">TP109</text><text transform="translate(650.1 482.4) rotate(0) scale(1.0 1)" font-size="9" fill="#c8c8c8" text-anchor="middle">TP110</text><text transform="translate(670.0 482.4) rotate(0) scale(1.0 1)" font-size="9" fill="#c8c8c8" text-anchor="middle">TP111</text><text transform="translate(881.0 539.0) rotate(-90) scale(1.0 1)" font-size="12" fill="#e0e0e0" text-anchor="middle">5V</text></g>
<g stroke-width="1" fill="none" shape-rendering="crispEdges"><polyline points="236.2,166.2 256.4,166.2" stroke="#40e0e0"/><polyline points="256.4,166.2 313.6,204.0" stroke="#ffffff"/><polyline points="367.4,205.7 377.4,205.7" stroke="#c0ffc0"/><polyline points="418.5,166.2 438.5,166.2" stroke="#40e0e0"/><polyline points="438.5,166.2 438.5,184.2 434.7,260.0" stroke="#ffffff"/><polyline points="559.2,166.2 579.4,166.2" stroke="#40e0e0"/><polyline points="559.2,166.2 502.6,205.8" stroke="#ffffff"/><polyline points="753.9,154.5 830.1,154.5" stroke="#ffffff"/><polyline points="753.9,154.5 733.0,177.0" stroke="#ffffff"/><polyline points="830.1,154.5 853.0,177.0 854.0,253.0 830.0,278.0" stroke="#ffffff"/><polyline points="733.0,177.0 730.5,229.0 731.0,254.0 753.0,278.0" stroke="#ffffff"/><polyline points="257.9,271.3 314.5,271.3" stroke="#c0ffff"/><polyline points="316.8,214.2 318.3,250.0 320.2,284.0 316.0,329.2 303.2,372.6 265.5,390.0" stroke="#ffffff"/><polyline points="320.2,332.1 337.2,333.0 354.2,348.1 440.0,352.8" stroke="#ffffff"/><polyline points="265.8,310.9 278.7,310.9" stroke="#ffffff"/><polyline points="434.7,225.0 434.7,249.5 440.4,270.3 451.7,304.2 452.6,311.8 445.1,365.0" stroke="#ffffff"/><polyline points="500.8,225.0 497.9,251.4 478.1,287.3 457.4,305.2" stroke="#c0ffff"/><polyline points="525.3,310.8 546.0,297.6 566.8,296.3 593.2,306.1 630.0,304.2" stroke="#ffffff"/><polyline points="523.4,310.8 521.5,340.1 555.5,346.7 552.6,365.0" stroke="#ffffff"/><polyline points="380.0,349.5 440.4,352.4 497.0,361.8 521.5,342.0" stroke="#ffffff"/><polyline points="685.1,278.3 691.7,325.5 683.2,352.8 644.5,356.6 620.0,357.5" stroke="#ffffff"/><polyline points="620.0,303.8 665.3,300.9 691.7,300.9" stroke="#c0ffff"/><polyline points="691.7,326.4 733.2,337.7 752.1,338.7 753.0,278.3" stroke="#ffffff"/><polyline points="753.0,306.2 801.1,306.2" stroke="#c0ffff"/><polyline points="801.1,278.3 803.0,306.2 797.4,355.7 793.6,378.3" stroke="#ffffff"/><polyline points="729.4,338.7 730.4,378.3 765.3,378.3 793.6,380.2" stroke="#ffffff"/><polyline points="801.1,278.3 834.2,278.3" stroke="#ffffff"/><polyline points="855.0,252.8 900.3,237.7 900.3,256.1 894.9,307.9 893.2,327.3" stroke="#ffffff"/><polyline points="832.4,276.6 855.0,252.8" stroke="#ffffff"/><polyline points="240.9,402.5 303.2,371.9" stroke="#ffffff"/><polyline points="442.6,340.0 442.6,480.0" stroke="#ffffff"/><polyline points="420.0,351.3 472.8,357.0 495.5,360.8 518.1,341.9 555.8,347.5" stroke="#ffffff"/><polyline points="555.8,347.5 540.8,394.7 559.6,436.2" stroke="#ffffff"/><polyline points="559.6,437.2 622.8,432.8 646.4,410.8" stroke="#ffffff"/><polyline points="623.8,357.5 670.0,356.0" stroke="#ffffff"/><polyline points="729.4,330.6 730.4,377.7 765.3,377.7 793.6,378.7 797.4,340.0" stroke="#d0ffff"/><polyline points="760.6,377.7 760.6,417.4" stroke="#d0ffff"/><polyline points="730.4,417.4 760.6,417.4 816.2,428.7 842.6,425.8" stroke="#d0ffff"/><polyline points="730.4,417.4 731.3,457.9" stroke="#ffffff"/><polyline points="708.7,458.5 755.8,457.9" stroke="#ffffff"/><polyline points="708.7,458.5 697.4,480.0" stroke="#d0ffff"/><polyline points="791.3,380.6 791.3,398.9" stroke="#d0ffff"/><polyline points="822.3,432.5 822.3,468.3 816.2,480.0" stroke="#ffffff"/><polyline points="646.4,410.8 627.5,430.6 620.0,434.3" stroke="#ffffff"/><polyline points="442.5,482.7 442.5,519.1" stroke="#ffffff"/><polyline points="415.5,519.1 428.1,548.9" stroke="#ffffff"/><polyline points="464.0,519.1 468.8,555.5" stroke="#ffffff"/><polyline points="493.1,519.1 498.4,557.9 498.4,625.8" stroke="#ffffff"/><polyline points="498.4,555.5 529.4,542.1" stroke="#ffffff"/><polyline points="498.4,625.3 553.7,625.3 600.0,612.5" stroke="#ffffff"/><polyline points="416.7,519.1 444.6,519.1" stroke="#ffff80"/><polyline points="464.0,519.1 491.9,519.1" stroke="#ffff80"/><polyline points="590.0,615.5 635.5,600.7 668.1,603.9 705.8,619.0" stroke="#ffffff"/><polyline points="705.8,619.0 758.4,560.2 781.3,562.9 819.0,567.0" stroke="#d0ffff"/><polyline points="819.0,567.0 820.3,588.5 833.8,619.0" stroke="#ffffff"/><polyline points="810.9,483.5 819.0,567.0" stroke="#ffffff"/><polyline points="682.9,496.9 700.5,475.4" stroke="#ffffff"/></g>
<g stroke="#a00000" stroke-width="1" fill="none"><path d="M137.5 123V670M155.5 123V670M137.5 624.5H155.5"/></g><text x="146" y="351" font-size="18" fill="#a00000" text-anchor="middle" transform="translate(146 0) scale(0.8 1) translate(-146 0)">A</text><g stroke="#ffff00" stroke-width="1" fill="none"><path d="M196.5 125.5H922.5V660.5H196.5ZM387.5 125.5V660.5"/></g><g stroke="#ffffff" stroke-width="1" fill="none"><path d="M39 483.5H1189M503.5 123V670"/></g><g stroke="#ffff00" stroke-width="3" fill="none" shape-rendering="auto"><path d="M962.5 125.5H1004.5M962.5 660.5H1004.5M983.5 125V660M983.5 127L977 137M983.5 127L990 137M983.5 659L977 649M983.5 659L990 649" stroke-linecap="round"/></g><text transform="translate(988.3 391.8) rotate(90)" font-size="16.5" font-weight="bold" fill="#ffff00" text-anchor="middle" textLength="86.5" lengthAdjust="spacingAndGlyphs" shape-rendering="auto">53,000 mm</text>
</svg>
<svg style="position:absolute;left:0;top:0;pointer-events:none" width="1366" height="742" font-family='"Liberation Sans",sans-serif'><text x="22" y="17.5" font-size="13.5" fill="#fff" textLength="468" lengthAdjust="spacingAndGlyphs" font-weight="bold" text-anchor="start" style="text-shadow:1px 1px 0 #0a2a80">Pcbnew (2013-03-10 BZR 3992)-stable \RAD 13cm\GRX13\grx13.kicad_pcb</text><text x="5" y="39" font-size="11" fill="#000" textLength="36" lengthAdjust="spacingAndGlyphs" text-anchor="start"><tspan text-decoration="underline">F</tspan>ichiers</text><text x="53.5" y="39" font-size="11" fill="#000" textLength="27.5" lengthAdjust="spacingAndGlyphs" text-anchor="start"><tspan text-decoration="underline">E</tspan>diter</text><text x="93.5" y="39" font-size="11" fill="#000" textLength="45.5" lengthAdjust="spacingAndGlyphs" text-anchor="start"><tspan text-decoration="underline">A</tspan>ffichage</text><text x="151.5" y="39" font-size="11" fill="#000" textLength="28.5" lengthAdjust="spacingAndGlyphs" text-anchor="start"><tspan text-decoration="underline">P</tspan>lacer</text><text x="192.5" y="39" font-size="11" fill="#000" textLength="57.5" lengthAdjust="spacingAndGlyphs" text-anchor="start">P<tspan text-decoration="underline">r</tspan>éférences</text><text x="262.5" y="39" font-size="11" fill="#000" textLength="52.5" lengthAdjust="spacingAndGlyphs" text-anchor="start">D<tspan text-decoration="underline">i</tspan>mensions</text><text x="327.5" y="39" font-size="11" fill="#000" textLength="26.5" lengthAdjust="spacingAndGlyphs" text-anchor="start"><tspan text-decoration="underline">O</tspan>utils</text><text x="366.5" y="39" font-size="11" fill="#000" textLength="103.5" lengthAdjust="spacingAndGlyphs" text-anchor="start"><tspan text-decoration="underline">R</tspan>ègles de Conception</text><text x="482.5" y="39" font-size="11" fill="#000" textLength="20" lengthAdjust="spacingAndGlyphs" text-anchor="start"><tspan text-decoration="underline">A</tspan>ide</text><text x="10" y="106.5" font-size="11" fill="#000" textLength="72" lengthAdjust="spacingAndGlyphs" text-anchor="start">Piste 0,500 mm</text><text x="151" y="106.5" font-size="11" fill="#000" textLength="71.5" lengthAdjust="spacingAndGlyphs" text-anchor="start">Via 0,889 mm *</text><text x="361" y="106.5" font-size="11" fill="#000" textLength="46" lengthAdjust="spacingAndGlyphs" text-anchor="start">Grille: 0,5</text><text x="503" y="106.5" font-size="11" fill="#000" textLength="23" lengthAdjust="spacingAndGlyphs" text-anchor="start">Auto</text><text x="660" y="68.5" font-size="11" fill="#000" text-anchor="start"></text><text x="1254" y="134" font-size="11" fill="#000" textLength="37" lengthAdjust="spacingAndGlyphs" text-anchor="start">Visibles</text><text x="1269.5" y="159" font-size="8" fill="#444" textLength="25.5" lengthAdjust="spacingAndGlyphs" text-anchor="start">Couche</text><text x="1311" y="159" font-size="8" fill="#444" textLength="20" lengthAdjust="spacingAndGlyphs" text-anchor="start">Autre</text><text x="1291" y="181" font-size="7.5" fill="#3a3a48" textLength="36" lengthAdjust="spacingAndGlyphs" text-anchor="start">Dessus.Cu</text><text x="1291" y="199" font-size="7.5" fill="#3a3a48" textLength="40" lengthAdjust="spacingAndGlyphs" text-anchor="start">Dessous.Cu</text><text x="1291" y="217" font-size="7.5" fill="#3a3a48" textLength="47.5" lengthAdjust="spacingAndGlyphs" text-anchor="start">Dessus.Adhes</text><text x="1291" y="235" font-size="7.5" fill="#3a3a48" textLength="52" lengthAdjust="spacingAndGlyphs" text-anchor="start">Dessous.Adhes</text><text x="1291" y="253" font-size="7.5" fill="#3a3a48" textLength="42" lengthAdjust="spacingAndGlyphs" text-anchor="start">Dessus.Pate</text><text x="1291" y="271" font-size="7.5" fill="#3a3a48" textLength="46" lengthAdjust="spacingAndGlyphs" text-anchor="start">Dessous.Pate</text><text x="1291" y="289" font-size="7.5" fill="#3a3a48" textLength="42" lengthAdjust="spacingAndGlyphs" text-anchor="start">Dessus.SilkS</text><text x="1291" y="307" font-size="7.5" fill="#3a3a48" textLength="46.5" lengthAdjust="spacingAndGlyphs" text-anchor="start">Dessous.SilkS</text><text x="1291" y="325" font-size="7.5" fill="#3a3a48" textLength="54" lengthAdjust="spacingAndGlyphs" text-anchor="start">Dessus.Masque</text><text x="1291" y="343" font-size="7.5" fill="#3a3a48" textLength="57" lengthAdjust="spacingAndGlyphs" text-anchor="start">Dessous.Masque</text><text x="1291" y="361" font-size="7.5" fill="#3a3a48" textLength="40" lengthAdjust="spacingAndGlyphs" text-anchor="start">Dessin.User</text><text x="1291" y="379" font-size="7.5" fill="#3a3a48" textLength="37" lengthAdjust="spacingAndGlyphs" text-anchor="start">Cmts.User</text><text x="1291" y="397" font-size="7.5" fill="#3a3a48" textLength="34" lengthAdjust="spacingAndGlyphs" text-anchor="start">Eco1.User</text><text x="1291" y="415" font-size="7.5" fill="#3a3a48" textLength="34" lengthAdjust="spacingAndGlyphs" text-anchor="start">Eco2.User</text><text x="1291" y="433" font-size="7.5" fill="#3a3a48" textLength="39.5" lengthAdjust="spacingAndGlyphs" text-anchor="start">Contours.Ci</text><text x="10.5" y="701" font-size="11" fill="#008b8b" textLength="268.5" lengthAdjust="spacingAndGlyphs" text-anchor="start">Fichier backup: \RAD 13cm\GRX13\grx13.kicad_pcb-bak</text><text x="10.5" y="714" font-size="11" fill="#008b8b" textLength="261.5" lengthAdjust="spacingAndGlyphs" text-anchor="start">Ecriture fichier CI: \RAD 13cm\GRX13\grx13.kicad_pcb</text><text x="2" y="733" font-size="11" fill="#000" textLength="115.5" lengthAdjust="spacingAndGlyphs" text-anchor="start">links 228 nc 95  net:nc 0</text><text x="677" y="733" font-size="11" fill="#000" textLength="38.5" lengthAdjust="spacingAndGlyphs" text-anchor="start">Z 99043</text><text x="741" y="733" font-size="11" fill="#000" textLength="128" lengthAdjust="spacingAndGlyphs" text-anchor="start">X 46,500000  Y 51,500000</text><text x="915" y="733" font-size="11" fill="#000" textLength="208" lengthAdjust="spacingAndGlyphs" text-anchor="start">dx -2,580000  dy -10,500000  d 10,812326</text><text x="1177.5" y="733" font-size="11" fill="#000" textLength="16" lengthAdjust="spacingAndGlyphs" text-anchor="start">mm</text></svg>
</body></html>
